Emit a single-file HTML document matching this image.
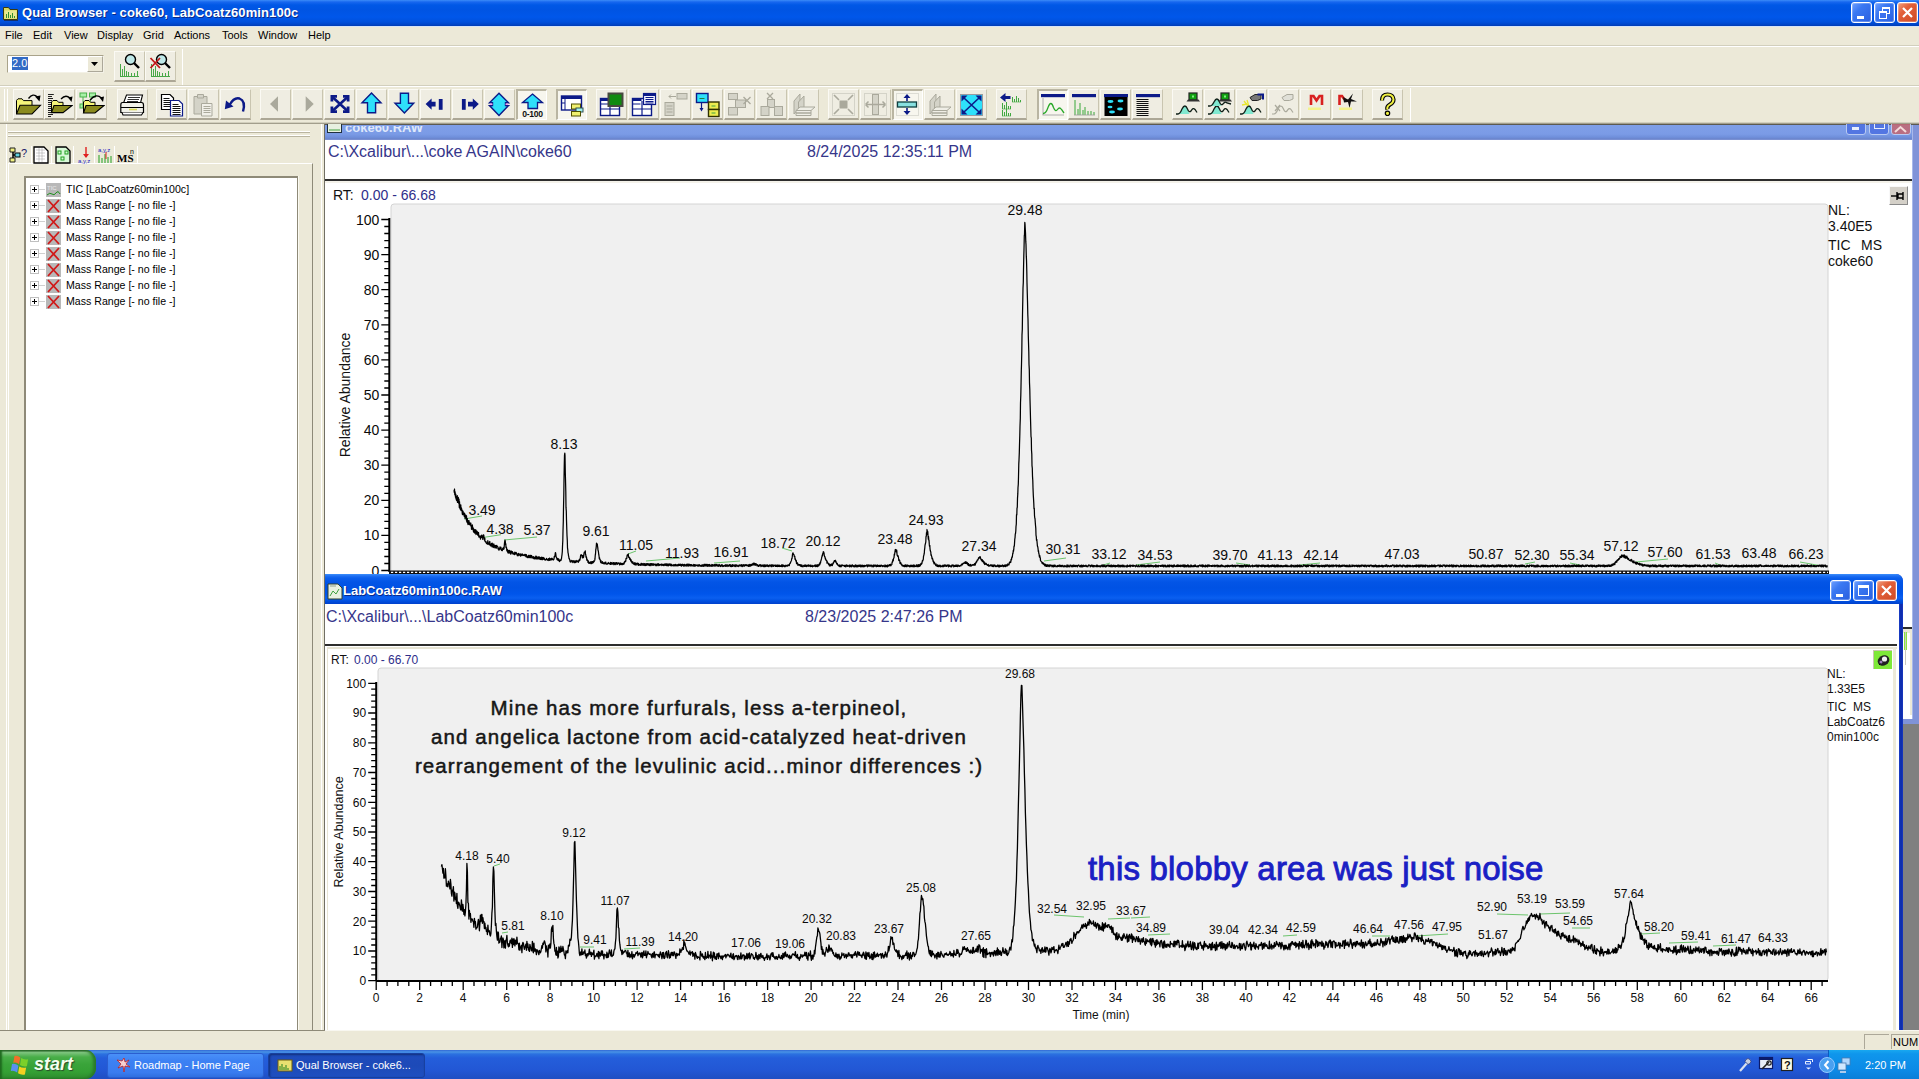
<!DOCTYPE html><html><head><meta charset="utf-8"><style>
*{margin:0;padding:0;box-sizing:border-box}
html,body{width:1919px;height:1079px;overflow:hidden}
body{position:relative;background:#ece9d8;font-family:"Liberation Sans", sans-serif;color:#000}
.t{position:absolute;white-space:nowrap;line-height:1}
.btn{position:absolute;width:31px;height:31px;border-top:1px solid #fbfaf4;border-left:1px solid #fbfaf4;border-right:1px solid #c9c5b0;border-bottom:2px solid #aca796;background:#efede2}
.btnp{position:absolute;width:31px;height:31px;border-top:2px solid #b9b5a2;border-left:2px solid #b9b5a2;border-right:1px solid #fff;border-bottom:1px solid #fff;background:#f7f6ee}
.btn svg,.btnp svg{position:absolute;left:4px;top:4px}
</style></head><body>

<div style="position:absolute;left:0px;top:0px;width:1919px;height:26px;background:linear-gradient(#3c8cf8 0px,#1767ef 2px,#0058e6 5px,#0054e3 10px,#0057ea 17px,#0050dc 22px,#0043c4 25px,#003bb0 26px)"></div>
<svg style="position:absolute;left:2px;top:4px" width="18" height="18" viewBox="0 0 18 18"><path d="M1.5 3.5V15.5H15.5V5.5H8L6.5 3.5Z" fill="#d8d860" stroke="#3a3a10" stroke-width="1"/><rect x="2.5" y="6.5" width="12" height="8" fill="#e8e890"/><path d="M4.5 14V10M6.5 14V8M8.5 14V11M10.5 14V9M12.5 14V12" stroke="#309030" stroke-width="1"/><path d="M2 16.5H16" stroke="#14306a" stroke-width="1"/></svg>
<div class="t" style="left:22px;top:6px;font-weight:bold;font-size:13px;color:#fff;text-shadow:1px 1px 0 #0a2a8a;letter-spacing:0.1px">Qual Browser - coke60, LabCoatz60min100c</div>
<div style="position:absolute;left:1851px;top:2px;width:21px;height:21px;border:1px solid #fff;border-radius:3px;background:linear-gradient(135deg,#6fa0ff 0%,#3a78f2 35%,#2a5fe0 100%);box-shadow:inset 0 0 0 1px rgba(255,255,255,0.25)"><div style="position:absolute;left:5px;top:13px;width:7px;height:3px;background:#fff"></div></div>
<div style="position:absolute;left:1874px;top:2px;width:21px;height:21px;border:1px solid #fff;border-radius:3px;background:linear-gradient(135deg,#6fa0ff 0%,#3a78f2 35%,#2a5fe0 100%);box-shadow:inset 0 0 0 1px rgba(255,255,255,0.25)"><div style="position:absolute;left:7px;top:4px;width:8px;height:7px;border:1px solid #fff;border-top-width:2px"></div><div style="position:absolute;left:4px;top:8px;width:8px;height:8px;border:1px solid #fff;border-top-width:2px;background:#3a70ee"></div></div>
<div style="position:absolute;left:1897px;top:2px;width:21px;height:21px;border:1px solid #fff;border-radius:3px;background:linear-gradient(135deg,#f0a080 0%,#e2603a 35%,#cf4a25 100%);box-shadow:inset 0 0 0 1px rgba(255,255,255,0.25)"><svg style="position:absolute;left:3px;top:3px" width="13" height="13"><path d="M2 2L11 11M11 2L2 11" stroke="#fff" stroke-width="2.2"/></svg></div>
<div style="position:absolute;left:0px;top:26px;width:1919px;height:20px;background:#ece9d8;border-top:1px solid #d6e4f8"></div>
<div class="t" style="left:5px;top:30px;font-size:11px;color:#000">File</div>
<div class="t" style="left:33px;top:30px;font-size:11px;color:#000">Edit</div>
<div class="t" style="left:64px;top:30px;font-size:11px;color:#000">View</div>
<div class="t" style="left:97px;top:30px;font-size:11px;color:#000">Display</div>
<div class="t" style="left:143px;top:30px;font-size:11px;color:#000">Grid</div>
<div class="t" style="left:174px;top:30px;font-size:11px;color:#000">Actions</div>
<div class="t" style="left:222px;top:30px;font-size:11px;color:#000">Tools</div>
<div class="t" style="left:258px;top:30px;font-size:11px;color:#000">Window</div>
<div class="t" style="left:308px;top:30px;font-size:11px;color:#000">Help</div>
<div style="position:absolute;left:0px;top:45px;width:1919px;height:1px;background:#d2cfbd"></div>
<div style="position:absolute;left:0px;top:46px;width:1919px;height:1px;background:#fff"></div>
<div style="position:absolute;left:7px;top:55px;width:97px;height:18px;background:#fff;border-top:1px solid #a9a38a;border-left:1px solid #a9a38a;border-bottom:1px solid #f3f1e6;border-right:1px solid #f3f1e6"></div>
<div style="position:absolute;left:12px;top:57px;width:16px;height:13px;background:#316ac5"></div>
<div class="t" style="left:12px;top:58px;font-size:11px;color:#fff">2.0</div>
<div style="position:absolute;left:87px;top:56px;width:16px;height:16px;background:#ece9d8;border-right:1px solid #aca899;border-bottom:1px solid #aca899;border-top:1px solid #fff;border-left:1px solid #fff"></div>
<svg style="position:absolute;left:91px;top:62px" width="8" height="5"><path d="M0 0H7L3.5 4Z" fill="#000"/></svg>
<div class="btn" style="left:114px;top:51px;width:31px;height:31px"><svg width="26" height="28" viewBox="0 0 26 28" style="left:3px;top:0px"><path d="M2.5 24V12M4.5 24V17M6.5 24V14M8.5 24V19M10.5 24V20M13.5 24V21M16.5 24V21M19.5 24V19" stroke="#48a848" stroke-width="1"/><line x1="2" y1="24.5" x2="21" y2="24.5" stroke="#48a848"/><circle cx="12.5" cy="7.5" r="5" fill="#bfe8e8" stroke="#000" stroke-width="1.4"/><path d="M16 11L21 16" stroke="#000" stroke-width="2.4"/></svg></div>
<div class="btn" style="left:145px;top:51px;width:31px;height:31px"><svg width="26" height="28" viewBox="0 0 26 28" style="left:3px;top:0px"><path d="M2.5 24V12M4.5 24V17M6.5 24V14M8.5 24V19M10.5 24V20M13.5 24V21M16.5 24V21M19.5 24V19" stroke="#48a848" stroke-width="1"/><line x1="2" y1="24.5" x2="21" y2="24.5" stroke="#48a848"/><circle cx="12.5" cy="7.5" r="5" fill="#bfe8e8" stroke="#000" stroke-width="1.4"/><path d="M16 11L21 16" stroke="#000" stroke-width="2.4"/><path d='M1.5 6L11 16M11 6L1.5 16' stroke='#c01818' stroke-width='1.8'/></svg></div>
<div style="position:absolute;left:182px;top:49px;width:1px;height:36px;background:#c5c1ad;border-right:1px solid #fff"></div>
<div style="position:absolute;left:0px;top:85px;width:1919px;height:1px;background:#d2cfbd"></div>
<div style="position:absolute;left:0px;top:86px;width:1919px;height:1px;background:#fff"></div>
<div style="position:absolute;left:4px;top:89px;width:1px;height:32px;background:#c5c1ad;border-right:1px solid #fff"></div>
<div style="position:absolute;left:7px;top:89px;width:1px;height:32px;background:#c5c1ad;border-right:1px solid #fff"></div>
<div class="btn" style="left:13px;top:89px"><svg width="26" height="26" viewBox="0 0 26 26" style="left:2px;top:2px"><path d="M0.5 22V8.3L2.0 6.8H6.0L7.5 8.6H16V13.3" fill="#f6f67a" stroke="#000" stroke-width="1"/><path d="M0.5 22L4 13.3H24.5L16 22Z" fill="#8a8a1e" stroke="#000" stroke-width="1.1"/><path d="M12.5 6.5Q17 0.5 21.5 5" fill="none" stroke="#000" stroke-width="1.3"/><path d="M19 4.5L24.5 3.5L23.5 9.5Z" fill="#000"/></svg></div>
<div class="btn" style="left:44px;top:89px"><svg width="26" height="26" viewBox="0 0 26 26" style="left:2px;top:2px"><path d="M1 2.5h5.8M1 4.5h4M1 6.5h5M1 8.5h4M1 10.5h4.5M1 12.5h4M1 14.5h4M1 16.5h4.5M1 18.5h4M1 20.5h4M1 22.5h5M1 24.5h3" stroke="#222" stroke-width="1"/><path d="M4.5 20.6V10.0L6.0 8.5H10.0L11.5 10.3H16V13.5" fill="#f6f67a" stroke="#000" stroke-width="1"/><path d="M4.5 20.6L7 13.5H25L16 20.6Z" fill="#8a8a1e" stroke="#000" stroke-width="1.1"/><path d="M14 7Q18.5 2 23 6" fill="none" stroke="#000" stroke-width="1.3"/><path d="M21 5.5L25.5 4.5L24.5 10Z" fill="#000"/></svg></div>
<div class="btn" style="left:76px;top:89px"><svg width="26" height="26" viewBox="0 0 26 26" style="left:2px;top:2px"><rect x="1" y="1" width="6.6" height="4" fill="#a8f0a8" stroke="#48b048"/><rect x="10.5" y="1" width="6" height="4" fill="#a8f0a8" stroke="#48b048"/><rect x="1" y="12" width="3" height="4" fill="#a8f0a8" stroke="#48b048"/><path d="M4 5v7M13.5 5l-4 7" stroke="#48b048"/><path d="M4.5 21V10.0L6.0 8.5H10.0L11.5 10.3H16V13.5" fill="#f6f67a" stroke="#000" stroke-width="1"/><path d="M4.5 21L7 13.5H25L16 21Z" fill="#8a8a1e" stroke="#000" stroke-width="1.1"/><path d="M11 8Q17 1 22.5 6" fill="none" stroke="#000" stroke-width="1.3"/><path d="M20.5 5.5L25 4.5L24 10Z" fill="#000"/></svg></div>
<div class="btn" style="left:117px;top:89px"><svg width="26" height="26" viewBox="0 0 26 26" style="left:2px;top:2px"><path d="M6.5 3H22.5L20.5 11H3.5Z" fill="#fff" stroke="#000" stroke-width="1.1"/><path d="M8 5.5h12M7.5 7.5h11.5M7 9.5h11" stroke="#333" stroke-width="1"/><path d="M2.5 10.5H21.5Q23.5 10.5 23.5 13V20.5H0.8V13Q0.8 10.5 2.5 10.5Z" fill="#f2f2ea" stroke="#000" stroke-width="1.2"/><path d="M1 15.5H23.5" stroke="#000" stroke-width="1"/><path d="M9 17.5h8" stroke="#d8d850" stroke-width="1.6"/><path d="M2 20.5L3 23H21.5L23 20.5" fill="#fff" stroke="#000" stroke-width="1.1"/></svg></div>
<div class="btn" style="left:156px;top:89px"><svg width="26" height="26" viewBox="0 0 26 26" style="left:2px;top:2px"><path d="M2.5 2.5H11L14.5 6V17.5H2.5Z" fill="#fff" stroke="#000" stroke-width="1.2"/><path d="M4.5 6.5h6M4.5 8.5h8M4.5 10.5h8M4.5 12.5h8M4.5 14.5h8" stroke="#111" stroke-width="1"/><path d="M11.5 8.5H20L23.5 12V24H11.5Z" fill="#fff" stroke="#0c1a88" stroke-width="1.2"/><path d="M13.5 12.5h6M13.5 14.5h8M13.5 16.5h8M13.5 18.5h8M13.5 20.5h8M13.5 22.5h8" stroke="#111" stroke-width="1"/></svg></div>
<div class="btn" style="left:188px;top:89px"><svg width="26" height="26" viewBox="0 0 26 26" style="left:2px;top:2px"><path d="M3 4.5H16V22H3Z" fill="#d4d3c8" stroke="#aaa99c"/><path d="M6.5 2.5H12.5V6H6.5Z" fill="#d4d3c8" stroke="#aaa99c"/><path d="M10.5 11.5H21V24H10.5Z" fill="#f0efe8" stroke="#aaa99c"/><path d="M12.5 14.5h7M12.5 16.5h7M12.5 18.5h7M12.5 20.5h7" stroke="#aaa99c" stroke-width="1"/></svg></div>
<div class="btn" style="left:220px;top:89px"><svg width="26" height="26" viewBox="0 0 26 26" style="left:2px;top:2px"><path d="M6.5 13Q11 5 16.5 6.5Q23 9 20 19.5" fill="none" stroke="#0c1a88" stroke-width="2.4"/><path d="M1.8 17.2L3 8.5L10.5 14.5Z" fill="#0c1a88"/></svg></div>
<div class="btn" style="left:260px;top:89px"><svg width="26" height="26" viewBox="0 0 26 26" style="left:2px;top:2px"><path d="M15 4.3V19.8L7 12Z" fill="#aaa99c"/></svg></div>
<div class="btn" style="left:292px;top:89px"><svg width="26" height="26" viewBox="0 0 26 26" style="left:2px;top:2px"><path d="M10.7 4.3V19.8L18.7 12Z" fill="#aaa99c"/></svg></div>
<div class="btn" style="left:324px;top:89px"><svg width="26" height="26" viewBox="0 0 26 26" style="left:2px;top:2px"><path d="M6 5.5L20 18.5M20 5.5L6 18.5" stroke="#0c1a88" stroke-width="2.6"/><path d="M3.5 3H10V5.8H6.3V9.5H3.5ZM22.5 3H16V5.8H19.7V9.5H22.5ZM3.5 21H10V18.2H6.3V14.5H3.5ZM22.5 21H16V18.2H19.7V14.5H22.5Z" fill="#0c1a88"/></svg></div>
<div class="btn" style="left:356px;top:89px"><svg width="26" height="26" viewBox="0 0 26 26" style="left:2px;top:2px"><path d="M12.5 1L22 10.8H16.6V20.8H8.5V10.8H3Z" fill="#2ee0fa" stroke="#0c1a88" stroke-width="1.4" stroke-linejoin="miter"/></svg></div>
<div class="btn" style="left:388px;top:89px"><svg width="26" height="26" viewBox="0 0 26 26" style="left:2px;top:2px"><path d="M13.4 21L22.7 11.2H17.5V1.2H9.4V11.2H4Z" fill="#2ee0fa" stroke="#0c1a88" stroke-width="1.4"/></svg></div>
<div class="btn" style="left:420px;top:89px"><svg width="26" height="26" viewBox="0 0 26 26" style="left:2px;top:2px"><path d="M2.6 12.1L8.6 6.5V9.8H12.6V14.4H8.6V17.8Z" fill="#0c1a88"/><rect x="15.8" y="7" width="3.8" height="10.8" fill="#0c1a88"/></svg></div>
<div class="btn" style="left:452px;top:89px"><svg width="26" height="26" viewBox="0 0 26 26" style="left:2px;top:2px"><rect x="6.9" y="7" width="3.8" height="10.8" fill="#0c1a88"/><path d="M23.8 12.1L17.8 6.5V9.8H13V14.4H17.8V17.8Z" fill="#0c1a88"/></svg></div>
<div class="btn" style="left:484px;top:89px"><svg width="26" height="26" viewBox="0 0 26 26" style="left:2px;top:2px"><path d="M12 1.2L21.5 10.8H18.5V13.6H21.5L12 23.5L2.5 13.6H5.5V10.8H2.5Z" fill="#2ee0fa" stroke="#0c1a88" stroke-width="1.4"/><path d="M3 12.2h2.5M18.5 12.2h2.5" stroke="#f0a0f0" stroke-width="1.5"/></svg></div>
<div class="btnp" style="left:516px;top:89px"><svg width="26" height="26" viewBox="0 0 26 26" style="left:1px;top:1px"><path d="M13.5 2L23.5 10.5H18.5V16.5H9V10.5H3.5Z" fill="#2ee0fa" stroke="#0c1a88" stroke-width="1.3"/><text x="13.4" y="24.6" font-size="8.6" font-weight="bold" text-anchor="middle" font-family="Liberation Sans" fill="#111" letter-spacing="-0.3">0-100</text></svg></div>
<div class="btnp" style="left:556px;top:89px"><svg width="26" height="26" viewBox="0 0 26 26" style="left:1px;top:1px"><rect x="2.5" y="4" width="20" height="14" fill="#fff" stroke="#0c1a88" stroke-width="1.4"/><rect x="2.5" y="4" width="20" height="3" fill="#0c1a88"/><path d="M6 7v11M2.5 11h3.5" stroke="#0c1a88" stroke-width="1"/><rect x="12.5" y="12" width="9" height="5" fill="#f0f070" stroke="#505000"/><rect x="17" y="16" width="7" height="4" fill="#a0f0f0" stroke="#305050"/><rect x="12.5" y="19.5" width="9" height="4.5" fill="#f0f070" stroke="#505000"/></svg></div>
<div class="btn" style="left:596px;top:89px"><svg width="26" height="26" viewBox="0 0 26 26" style="left:2px;top:2px"><rect x="1.5" y="6.5" width="19" height="17" fill="#fff" stroke="#0c1a88" stroke-width="1.4"/><rect x="1.5" y="6.5" width="9" height="2.5" fill="#0c1a88"/><path d="M1.5 17h19M11 9v14.5M1.5 12h8" stroke="#0c1a88" stroke-width="1.2"/><rect x="9.5" y="1.5" width="14" height="12.5" fill="#108a10" stroke="#484840" stroke-width="2"/></svg></div>
<div class="btn" style="left:628px;top:89px"><svg width="26" height="26" viewBox="0 0 26 26" style="left:2px;top:2px"><rect x="1.5" y="6.5" width="19" height="17" fill="#fff" stroke="#0c1a88" stroke-width="1.4"/><rect x="1.5" y="6.5" width="9" height="2.5" fill="#0c1a88"/><path d="M1.5 17h19M11 9v14.5M1.5 12h8" stroke="#0c1a88" stroke-width="1.2"/><rect x="12.5" y="1.5" width="12" height="11" fill="#f4f4ff" stroke="#0c1a88" stroke-width="1.2"/><path d="M12.5 3h12" stroke="#0c1a88" stroke-width="2"/><path d="M14.5 5.5h8M14.5 7.5h8M14.5 9.5h8M14.5 11h8" stroke="#0c1a88" stroke-width="1"/></svg></div>
<div class="btn" style="left:660px;top:89px"><svg width="26" height="26" viewBox="0 0 26 26" style="left:2px;top:2px"><rect x="2" y="10.5" width="9" height="13" fill="#d4d3c8" stroke="#aaa99c"/><rect x="14" y="1.5" width="10" height="5.5" fill="#d4d3c8" stroke="#aaa99c"/><path d="M6 4.5h7M8 2.5L6 4.5L8 6.5" stroke="#aaa99c" fill="none"/><path d="M3.5 14h6M3.5 17h6M3.5 20h6" stroke="#aaa99c"/></svg></div>
<div class="btn" style="left:692px;top:89px"><svg width="26" height="26" viewBox="0 0 26 26" style="left:2px;top:2px"><rect x="1.5" y="1.5" width="11.5" height="9" fill="#2ee0fa" stroke="#0c1a88" stroke-width="1.4"/><path d="M4.5 6.5h5" stroke="#208040"/><path d="M6.5 11v6" stroke="#0c1a88" stroke-width="1.2"/><path d="M4.5 16l2 3.5l2-3.5z" fill="#0c1a88"/><rect x="13.5" y="10" width="10.5" height="7.5" fill="#ecec50" stroke="#303000" stroke-width="1.4"/><rect x="13.5" y="17.5" width="10.5" height="7" fill="#ecec50" stroke="#303000" stroke-width="1.4"/><path d="M16.5 14h4M16.5 21h4" stroke="#40a040"/></svg></div>
<div class="btn" style="left:724px;top:89px"><svg width="26" height="26" viewBox="0 0 26 26" style="left:2px;top:2px"><rect x="1.5" y="1.5" width="9" height="6" fill="#d4d3c8" stroke="#aaa99c"/><rect x="1.5" y="15.5" width="9" height="7.5" fill="#d4d3c8" stroke="#aaa99c"/><rect x="8.5" y="8" width="10" height="7.5" fill="#d4d3c8" stroke="#aaa99c"/><path d="M16.5 5l7 7M23.5 5l-7 7" stroke="#aaa99c" stroke-width="1.3"/></svg></div>
<div class="btn" style="left:756px;top:89px"><svg width="26" height="26" viewBox="0 0 26 26" style="left:2px;top:2px"><path d="M8 1l6 6M14 1L8 7" stroke="#aaa99c" stroke-width="1.3"/><rect x="8.5" y="7.5" width="7" height="8" fill="#d4d3c8" stroke="#aaa99c"/><rect x="2" y="14.5" width="8" height="9" fill="#d4d3c8" stroke="#aaa99c"/><rect x="15.5" y="14.5" width="8" height="9" fill="#d4d3c8" stroke="#aaa99c"/></svg></div>
<div class="btn" style="left:788px;top:89px"><svg width="26" height="26" viewBox="0 0 26 26" style="left:2px;top:2px"><path d="M3 22V9L9 2V15Z" fill="#d4d3c8" stroke="#aaa99c"/><path d="M7.5 22V10L13 4V16Z" fill="#d4d3c8" stroke="#aaa99c"/><path d="M9 15H24L20 18.5H5Z" fill="#efeee6" stroke="#aaa99c"/><path d="M5 18.5H20V21H5ZM5 21H20V23.5H5Z" fill="#efeee6" stroke="#aaa99c"/></svg></div>
<div class="btn" style="left:828px;top:89px"><svg width="26" height="26" viewBox="0 0 26 26" style="left:2px;top:2px"><rect x="1.5" y="1.5" width="22" height="22" fill="none" stroke="#d4d3c8"/><rect x="8.5" y="8.5" width="8" height="8" fill="#aaa99c"/><path d="M3 3l5 5M22 3l-5 5M3 22l5-5M22 22l-5-5" stroke="#aaa99c" stroke-width="1.6"/></svg></div>
<div class="btn" style="left:860px;top:89px"><svg width="26" height="26" viewBox="0 0 26 26" style="left:2px;top:2px"><rect x="1.5" y="1.5" width="22" height="22" fill="none" stroke="#d4d3c8"/><rect x="9.5" y="2.5" width="6" height="20" fill="#d4d3c8" stroke="#aaa99c"/><path d="M2.5 12.5h20M2.5 12.5l3-3M2.5 12.5l3 3M22.5 12.5l-3-3M22.5 12.5l-3 3" stroke="#aaa99c" stroke-width="1.5"/></svg></div>
<div class="btnp" style="left:892px;top:89px"><svg width="26" height="26" viewBox="0 0 26 26" style="left:1px;top:1px"><rect x="1.5" y="1.5" width="22" height="22" fill="none" stroke="#dcdcd4"/><rect x="2.5" y="10" width="19" height="5" fill="#88e0e0" stroke="#104040" stroke-width="1.3"/><path d="M12 3v6M12 16v6" stroke="#0c1a88" stroke-width="1.6"/><path d="M8.5 6l3.5-4l3.5 4zM8.5 19l3.5 4l3.5-4z" fill="#0c1a88"/></svg></div>
<div class="btn" style="left:924px;top:89px"><svg width="26" height="26" viewBox="0 0 26 26" style="left:2px;top:2px"><path d="M3 22V9L9 2V15Z" fill="#d4d3c8" stroke="#aaa99c"/><path d="M7.5 22V10L13 4V16Z" fill="#d4d3c8" stroke="#aaa99c"/><path d="M9 15H24L20 18.5H5Z" fill="#efeee6" stroke="#aaa99c"/><path d="M5 18.5H20V21H5ZM5 21H20V23.5H5Z" fill="#efeee6" stroke="#aaa99c"/></svg></div>
<div class="btn" style="left:956px;top:89px"><svg width="26" height="26" viewBox="0 0 26 26" style="left:2px;top:2px"><rect x="1.5" y="2.5" width="22" height="21" fill="#2ee0fa" stroke="#9a9aa0"/><path d="M5 6l15 14M20 6L5 20" stroke="#0c1a88" stroke-width="1.6"/><path d="M2.5 3.5h6l-6 6zM22.5 3.5h-6l6 6zM2.5 22.5h6l-6-6zM22.5 22.5h-6l6-6z" fill="#0c1a88"/></svg></div>
<div class="btn" style="left:996px;top:89px"><svg width="26" height="26" viewBox="0 0 26 26" style="left:2px;top:2px"><path d="M1 5.5l5.5-4.5v3h5v3h-5v3z" fill="#0c1a88"/><path d="M13.5 10V5M15.5 10V7M17.5 10V4M19.5 10V6M21.5 10V8M3.5 17V11M5.5 17V13M7.5 17V10M9.5 17V14M11.5 17V14M3.5 24V18M5.5 24V20M7.5 24V17M9.5 24V21M11.5 24V21" stroke="#40a840" stroke-width="1"/><path d="M13 10h9M3 17h9M3 24h9" stroke="#40a840" stroke-width="0.6"/></svg></div>
<div class="btnp" style="left:1037px;top:89px"><svg width="26" height="26" viewBox="0 0 26 26" style="left:1px;top:1px"><rect x="1" y="2" width="24" height="3.2" fill="#0c1a88"/><path d="M2.5 23H24M3 6v17" stroke="#999" stroke-width="0.8"/><path d="M3 21.5q3 0 5-6q3-8 5.5 0q2 5 4 2q2-3 4 0l2.5 3.5" fill="none" stroke="#28a828" stroke-width="1.3"/></svg></div>
<div class="btn" style="left:1068px;top:89px"><svg width="26" height="26" viewBox="0 0 26 26" style="left:2px;top:2px"><rect x="1" y="2" width="24" height="3.2" fill="#0c1a88"/><path d="M4 23V8M7 23V17M9 23V11M12 23V18M14 23V15M17 23V19M20 23V19M23 23V20" stroke="#38a838" stroke-width="1"/><path d="M3 23h21" stroke="#999" stroke-width="0.8"/></svg></div>
<div class="btn" style="left:1100px;top:89px"><svg width="26" height="26" viewBox="0 0 26 26" style="left:2px;top:2px"><rect x="1" y="2" width="24" height="3.2" fill="#0c1a88"/><rect x="1.5" y="5" width="23" height="19" fill="#000"/><ellipse cx="7.5" cy="9.5" rx="3" ry="1.4" fill="#2ee0fa"/><ellipse cx="17.5" cy="9" rx="3" ry="1.4" fill="#2ee0fa"/><ellipse cx="7" cy="15" rx="2.5" ry="1.3" fill="#2ee0fa"/><ellipse cx="9" cy="20" rx="3" ry="1.4" fill="#2ee0fa"/><ellipse cx="17" cy="17" rx="3" ry="1.4" fill="#2ee0fa"/></svg></div>
<div class="btn" style="left:1132px;top:89px"><svg width="26" height="26" viewBox="0 0 26 26" style="left:2px;top:2px"><rect x="1" y="2" width="24" height="3.2" fill="#0c1a88"/><path d="M1.5 7.5h12M1.5 9.5h12M1.5 11.5h12M1.5 13.5h12M1.5 15.5h12M1.5 17.5h12M1.5 19.5h12M1.5 21.5h12M1.5 23.5h12" stroke="#111" stroke-width="1.2"/></svg></div>
<div class="btn" style="left:1172px;top:89px"><svg width="26" height="26" viewBox="0 0 26 26" style="left:2px;top:2px"><path d="M1 22h2q2 0 4-5q3-6 5.5 0q1 3 2 5" fill="#80e8d0"/><path d="M1 22h2q2 0 4-5q3-6 5.5 0q1.5 4 3.5 2q2-4 4-1.5l2 3" fill="none" stroke="#102018" stroke-width="1.3"/><rect x="14" y="1" width="8" height="7" fill="#10a010" stroke="#222" stroke-width="1.2"/><path d="M17 3.5h2v2h-2z" fill="#80f080"/><path d="M11.5 9.5h13.5l-1.5-2H13z" fill="#333"/></svg></div>
<div class="btn" style="left:1204px;top:89px"><svg width="26" height="26" viewBox="0 0 26 26" style="left:2px;top:2px"><path d="M1 22h2q2 0 4-5q3-6 5.5 0q1 3 2 5" fill="#80e8d0"/><path d="M1 22h2q2 0 4-5q3-6 5.5 0q1.5 4 3.5 2q2-4 4-1.5l2 3" fill="none" stroke="#102018" stroke-width="1.3"/><path d="M1 14h2q2 0 4-4q3-6 5.5 0q1 3 2 4" fill="#80e8d0"/><path d="M1 14h2q2 0 4-4q3-6 5.5 0q1.5 4 3.5 2q2-3 4-1l4 1" fill="none" stroke="#102018" stroke-width="1.3"/><rect x="14" y="1" width="8" height="7" fill="#10a010" stroke="#222" stroke-width="1.2"/><path d="M17 3.5h2v2h-2z" fill="#80f080"/><path d="M11.5 9.5h13.5l-1.5-2H13z" fill="#333"/></svg></div>
<div class="btn" style="left:1236px;top:89px"><svg width="26" height="26" viewBox="0 0 26 26" style="left:2px;top:2px"><path d="M1 22h2q2 0 4-5q3-6 5.5 0q1 3 2 5" fill="#80e8d0"/><path d="M1 22h2q2 0 4-5q3-6 5.5 0q1.5 4 3.5 2q2-4 4-1.5l2 3" fill="none" stroke="#102018" stroke-width="1.3"/><path d="M5 9l4 5M3 13l5-1M8 8l1.5 5" stroke="#e8e830" stroke-width="1.3"/><path d="M11 5.5L16 2.5H22V7L18.5 8.5H13Z" fill="#777" stroke="#222"/><path d="M18.5 2.5H24V7.5" fill="none" stroke="#0c1a88" stroke-width="2"/></svg></div>
<div class="btn" style="left:1268px;top:89px"><svg width="26" height="26" viewBox="0 0 26 26" style="left:2px;top:2px"><path d="M1 22h2q2 0 4-5q3-6 5.5 0q1.5 4 3.5 2q2-4 4-1.5l2 3" fill="none" stroke="#aaa99c" stroke-width="1.2"/><path d="M4 13l5 6M4 19l5-6" stroke="#aaa99c" stroke-width="1.2"/><path d="M11 5.5L16 2.5H22V7L18.5 8.5H13Z" fill="#e0e0d8" stroke="#aaa99c"/></svg></div>
<div class="btn" style="left:1300px;top:89px"><svg width="26" height="26" viewBox="0 0 26 26" style="left:2px;top:2px"><path d="M8 13V4H10.5L13.5 8.5L16.5 4H19V13" fill="none" stroke="#d82020" stroke-width="2.6" stroke-linejoin="miter"/><path d="M5 15.5h13v2.5H5z" fill="#f4f470" opacity="0.75"/></svg></div>
<div class="btn" style="left:1332px;top:89px"><svg width="26" height="26" viewBox="0 0 26 26" style="left:2px;top:2px"><path d="M4.5 13V4H7L9.5 7.5" fill="none" stroke="#d82020" stroke-width="2.6"/><path d="M8 5l5 2.5L18 1.5L16 7l6 2.5L16 9.5L14.5 16L13 10l-4 0.5z" fill="#111"/><path d="M4 15.5h13v2.5H4z" fill="#f4f470" opacity="0.75"/></svg></div>
<div class="btn" style="left:1372px;top:89px"><svg width="26" height="26" viewBox="0 0 26 26" style="left:2px;top:2px"><path d="M7 8.5Q7 2.5 12.5 2.5T18.5 7.5Q18.5 10.5 15 12.5T12.5 17.5" fill="none" stroke="#000" stroke-width="4.2"/><path d="M7 8.5Q7 2.5 12.5 2.5T18.5 7.5Q18.5 10.5 15 12.5T12.5 17.5" fill="none" stroke="#f0f040" stroke-width="2"/><circle cx="12.5" cy="21.3" r="2.2" fill="#f0f040" stroke="#000" stroke-width="1.2"/></svg></div>
<div style="position:absolute;left:1410px;top:88px;width:1px;height:34px;background:#c5c1ad;border-right:1px solid #fff"></div>
<div style="position:absolute;left:0px;top:122px;width:1919px;height:1px;background:#d2cfbd"></div>
<div style="position:absolute;left:0px;top:123px;width:1919px;height:1px;background:#a29e8c"></div>
<div style="position:absolute;left:0px;top:124px;width:325px;height:906px;background:#ece9d8"></div>
<div style="position:absolute;left:6px;top:124px;width:1px;height:906px;background:#fff"></div>
<div style="position:absolute;left:8px;top:131px;width:302px;height:1px;background:#fff;border-bottom:1px solid #bab5a0;height:2px"></div>
<div style="position:absolute;left:8px;top:135px;width:302px;height:1px;background:#fff;border-bottom:1px solid #bab5a0;height:2px"></div>
<div style="position:absolute;left:8px;top:163px;width:305px;height:867px;border-top:1px solid #fff;border-left:1px solid #fff;border-right:1px solid #8e8a78"></div>
<div style="position:absolute;left:9px;top:146px"><svg width="20" height="18"><path d="M1 2h5v4H1zM1 12h5v4H1z" fill="#f0f080" stroke="#202020"/><path d="M4 6v6M4 9h5" stroke="#000" stroke-width="1.5"/><rect x="6" y="7" width="5" height="4" fill="#60d0e0" stroke="#000"/><text x="12" y="11" font-size="11" font-family="Liberation Sans" fill="#1a1a6a">?</text></svg></div>
<div style="position:absolute;left:33px;top:146px"><svg width="16" height="18"><path d="M1 1h10l4 4v12H1z" fill="#fff" stroke="#000" stroke-width="1.3"/><path d="M3 4h9M3 7h9M3 10h9M3 13h9M6 2v14M9 2v14" stroke="#999" stroke-width="0.5"/></svg></div>
<div style="position:absolute;left:55px;top:146px"><svg width="16" height="18"><path d="M1 1h10l4 4v12H1z" fill="#d8f8d8" stroke="#000" stroke-width="1.3"/><rect x="3" y="5" width="3" height="3" fill="none" stroke="#20a020"/><rect x="10" y="5" width="3" height="3" fill="none" stroke="#20a020"/><rect x="6" y="11" width="3" height="3" fill="none" stroke="#20a020"/></svg></div>
<div style="position:absolute;left:77px;top:146px"><svg width="18" height="18"><path d="M9 1v10" stroke="#e02020" stroke-width="1.4"/><path d="M6 8l3 4l3-4z" fill="#e02020"/><text x="1" y="17" font-size="6" font-family="Liberation Sans" fill="#2020c0">a,y,z</text></svg></div>
<div style="position:absolute;left:97px;top:146px"><svg width="18" height="18"><text x="1" y="6" font-size="6" font-family="Liberation Sans" fill="#2020c0">a,y,z</text><path d="M2 17V9M5 17V12M8 17V8M11 17V11M14 17V10" stroke="#20a020"/><path d="M9 6v7" stroke="#e02020"/></svg></div>
<div style="position:absolute;left:117px;top:146px"><svg width="18" height="18"><text x="0" y="16" font-size="11" font-weight="bold" font-family="Liberation Serif" fill="#000">MS</text><text x="13" y="8" font-size="7" font-family="Liberation Sans" fill="#000">n</text></svg></div>
<div style="position:absolute;left:31px;top:146px;width:1px;height:18px;background:#aca899;border-right:1px solid #fff"></div>
<div style="position:absolute;left:51px;top:146px;width:1px;height:18px;background:#aca899;border-right:1px solid #fff"></div>
<div style="position:absolute;left:73px;top:146px;width:1px;height:18px;background:#aca899;border-right:1px solid #fff"></div>
<div style="position:absolute;left:94px;top:146px;width:1px;height:18px;background:#aca899;border-right:1px solid #fff"></div>
<div style="position:absolute;left:114px;top:146px;width:1px;height:18px;background:#aca899;border-right:1px solid #fff"></div>
<div style="position:absolute;left:137px;top:146px;width:1px;height:18px;background:#aca899;border-right:1px solid #fff"></div>
<div style="position:absolute;left:24px;top:176px;width:274px;height:854px;background:#fff;border-top:2px solid #8e8a78;border-left:2px solid #8e8a78;border-right:1px solid #8e8a78"></div>
<div style="position:absolute;left:298px;top:176px;width:1px;height:854px;background:#fbfaf2"></div>
<div style="position:absolute;left:30px;top:185px;width:9px;height:9px;border:1px solid #c0c0c0;background:#fff"></div><div style="position:absolute;left:32px;top:189px;width:5px;height:1px;background:#000"></div><div style="position:absolute;left:34px;top:187px;width:1px;height:5px;background:#000"></div><div style="position:absolute;left:39px;top:189px;width:6px;height:1px;background:#d0d0d0"></div><div style="position:absolute;left:46px;top:183px"><svg width="15" height="14"><rect width="15" height="14" fill="#b8b8b8"/><text x="1" y="7" font-size="6" fill="#e8e8e8" font-family="Liberation Sans">TIC</text><path d="M1 12q3-3 5-1t4-1t4 1" stroke="#209020" fill="none"/></svg></div><div class="t" style="left:66px;top:184px;font-size:10.6px">TIC [LabCoatz60min100c]</div>
<div style="position:absolute;left:30px;top:201px;width:9px;height:9px;border:1px solid #c0c0c0;background:#fff"></div><div style="position:absolute;left:32px;top:205px;width:5px;height:1px;background:#000"></div><div style="position:absolute;left:34px;top:203px;width:1px;height:5px;background:#000"></div><div style="position:absolute;left:39px;top:205px;width:6px;height:1px;background:#d0d0d0"></div><div style="position:absolute;left:46px;top:199px"><svg width="15" height="14"><rect width="15" height="14" fill="#b8b8b8"/><path d="M2 1L13 13M13 1L2 13" stroke="#d01818" stroke-width="1.8"/></svg></div><div class="t" style="left:66px;top:200px;font-size:10.6px">Mass Range [- no file -]</div>
<div style="position:absolute;left:30px;top:217px;width:9px;height:9px;border:1px solid #c0c0c0;background:#fff"></div><div style="position:absolute;left:32px;top:221px;width:5px;height:1px;background:#000"></div><div style="position:absolute;left:34px;top:219px;width:1px;height:5px;background:#000"></div><div style="position:absolute;left:39px;top:221px;width:6px;height:1px;background:#d0d0d0"></div><div style="position:absolute;left:46px;top:215px"><svg width="15" height="14"><rect width="15" height="14" fill="#b8b8b8"/><path d="M2 1L13 13M13 1L2 13" stroke="#d01818" stroke-width="1.8"/></svg></div><div class="t" style="left:66px;top:216px;font-size:10.6px">Mass Range [- no file -]</div>
<div style="position:absolute;left:30px;top:233px;width:9px;height:9px;border:1px solid #c0c0c0;background:#fff"></div><div style="position:absolute;left:32px;top:237px;width:5px;height:1px;background:#000"></div><div style="position:absolute;left:34px;top:235px;width:1px;height:5px;background:#000"></div><div style="position:absolute;left:39px;top:237px;width:6px;height:1px;background:#d0d0d0"></div><div style="position:absolute;left:46px;top:231px"><svg width="15" height="14"><rect width="15" height="14" fill="#b8b8b8"/><path d="M2 1L13 13M13 1L2 13" stroke="#d01818" stroke-width="1.8"/></svg></div><div class="t" style="left:66px;top:232px;font-size:10.6px">Mass Range [- no file -]</div>
<div style="position:absolute;left:30px;top:249px;width:9px;height:9px;border:1px solid #c0c0c0;background:#fff"></div><div style="position:absolute;left:32px;top:253px;width:5px;height:1px;background:#000"></div><div style="position:absolute;left:34px;top:251px;width:1px;height:5px;background:#000"></div><div style="position:absolute;left:39px;top:253px;width:6px;height:1px;background:#d0d0d0"></div><div style="position:absolute;left:46px;top:247px"><svg width="15" height="14"><rect width="15" height="14" fill="#b8b8b8"/><path d="M2 1L13 13M13 1L2 13" stroke="#d01818" stroke-width="1.8"/></svg></div><div class="t" style="left:66px;top:248px;font-size:10.6px">Mass Range [- no file -]</div>
<div style="position:absolute;left:30px;top:265px;width:9px;height:9px;border:1px solid #c0c0c0;background:#fff"></div><div style="position:absolute;left:32px;top:269px;width:5px;height:1px;background:#000"></div><div style="position:absolute;left:34px;top:267px;width:1px;height:5px;background:#000"></div><div style="position:absolute;left:39px;top:269px;width:6px;height:1px;background:#d0d0d0"></div><div style="position:absolute;left:46px;top:263px"><svg width="15" height="14"><rect width="15" height="14" fill="#b8b8b8"/><path d="M2 1L13 13M13 1L2 13" stroke="#d01818" stroke-width="1.8"/></svg></div><div class="t" style="left:66px;top:264px;font-size:10.6px">Mass Range [- no file -]</div>
<div style="position:absolute;left:30px;top:281px;width:9px;height:9px;border:1px solid #c0c0c0;background:#fff"></div><div style="position:absolute;left:32px;top:285px;width:5px;height:1px;background:#000"></div><div style="position:absolute;left:34px;top:283px;width:1px;height:5px;background:#000"></div><div style="position:absolute;left:39px;top:285px;width:6px;height:1px;background:#d0d0d0"></div><div style="position:absolute;left:46px;top:279px"><svg width="15" height="14"><rect width="15" height="14" fill="#b8b8b8"/><path d="M2 1L13 13M13 1L2 13" stroke="#d01818" stroke-width="1.8"/></svg></div><div class="t" style="left:66px;top:280px;font-size:10.6px">Mass Range [- no file -]</div>
<div style="position:absolute;left:30px;top:297px;width:9px;height:9px;border:1px solid #c0c0c0;background:#fff"></div><div style="position:absolute;left:32px;top:301px;width:5px;height:1px;background:#000"></div><div style="position:absolute;left:34px;top:299px;width:1px;height:5px;background:#000"></div><div style="position:absolute;left:39px;top:301px;width:6px;height:1px;background:#d0d0d0"></div><div style="position:absolute;left:46px;top:295px"><svg width="15" height="14"><rect width="15" height="14" fill="#b8b8b8"/><path d="M2 1L13 13M13 1L2 13" stroke="#d01818" stroke-width="1.8"/></svg></div><div class="t" style="left:66px;top:296px;font-size:10.6px">Mass Range [- no file -]</div>
<div style="position:absolute;left:321px;top:124px;width:1px;height:906px;background:#fff"></div>
<div style="position:absolute;left:324px;top:124px;width:1px;height:906px;background:#716f64"></div>
<div style="position:absolute;left:325px;top:124px;width:1594px;height:906px;background:#808080"></div>
<div style="position:absolute;left:325px;top:124px;width:1594px;height:600px;overflow:hidden">
<div style="position:absolute;left:1587px;top:0px;width:7px;height:600px;background:#8093d8;border-left:1px solid #a8b8ea"></div>
<div style="position:absolute;left:0px;top:595px;width:1594px;height:5px;background:#8093d8"></div>
<div style="position:absolute;left:0px;top:0px;width:1587px;height:16px;background:linear-gradient(#7f9fe8 0px,#7b9be6 10px,#7090dc 13px,#6a84cc 15px,#8a9cd8 16px)"></div>
<div style="position:absolute;left:0px;top:0px;width:1594px;height:1px;background:#5c5a50"></div>
<div style="position:absolute;left:0px;top:2px;width:600px;height:14px;overflow:hidden"><div class="t" style="left:20px;top:-5px;font-weight:bold;font-size:13px;color:#dfe8fb">coke60.RAW</div></div>
<svg style="position:absolute;left:2px;top:-4px" width="15" height="13"><rect x="0.5" y="0.5" width="14" height="12" fill="#e8f0e0" stroke="#203040"/><path d="M2 10h11" stroke="#40a040"/></svg>
<div style="position:absolute;left:1521px;top:-10px;width:20px;height:21px;border:1px solid #c0d0f4;border-radius:3px;background:#4f72e2;opacity:0.9"></div>
<div style="position:absolute;left:1544px;top:-10px;width:20px;height:21px;border:1px solid #c0d0f4;border-radius:3px;background:#4f72e2;opacity:0.9"></div>
<div style="position:absolute;left:1566px;top:-10px;width:20px;height:21px;border:1px solid #c0d0f4;border-radius:3px;background:#c06a78;opacity:0.9"></div>
<div style="position:absolute;left:1527px;top:3px;width:7px;height:3px;background:#e8eefc"></div>
<div style="position:absolute;left:1549px;top:-6px;width:11px;height:11px;border:1px solid #e8eefc"></div>
<svg style="position:absolute;left:1568px;top:1px" width="15" height="8"><path d="M2 7L7.5 2L13 7" stroke="#f4dada" stroke-width="2" fill="none"/></svg>
<div style="position:absolute;left:0px;top:16px;width:1587px;height:579px;background:#fff"></div>
<div style="position:absolute;left:1578px;top:503px;width:9px;height:2px;background:#2d2d2d"></div>
<div style="position:absolute;left:1578px;top:505px;width:9px;height:4px;background:#ece9d8"></div>
<div style="position:absolute;left:1579px;top:508px;width:3px;height:18px;background:#8be840"></div>
<div style="position:absolute;left:1580px;top:508px;width:1px;height:33px;background:#c8c8c0"></div>
<div style="position:absolute;left:1585px;top:505px;width:2px;height:86px;background:#ece9d8"></div>
<div class="t" style="left:3px;top:20px;font-size:16px;color:#36368a">C:\Xcalibur\...\coke AGAIN\coke60</div>
<div class="t" style="left:482px;top:20px;font-size:16px;color:#36368a">8/24/2025 12:35:11 PM</div>
<div style="position:absolute;left:0px;top:55px;width:1587px;height:2px;background:#2d2d2d"></div>
<div style="position:absolute;left:0px;top:57px;width:1587px;height:2px;background:#f4f2ea"></div>
<div style="position:absolute;left:1564px;top:62px;width:19px;height:19px;background:#d4d0c8;border-top:1px solid #f8f8f8;border-left:1px solid #f8f8f8;border-right:1px solid #8a8a8a;border-bottom:1px solid #8a8a8a"><svg style="position:absolute;left:1px;top:3px" width="16" height="12"><path d="M0 6h6" stroke="#000" stroke-width="1.4"/><path d="M6 2v8M7 4h5v4H7zM12 2v8" stroke="#000" stroke-width="1.4" fill="none"/></svg></div>
</div>
<svg style="position:absolute;left:0;top:0" width="1919" height="574" viewBox="0 0 1919 574"><text x="333" y="200" font-family="Liberation Sans" font-size="14" fill="#111">RT:</text><text x="361" y="200" font-family="Liberation Sans" font-size="14" fill="#2e2e8a">0.00 - 66.68</text><rect x="391" y="204" width="1437" height="380" rx="3" fill="#f0f0f0" stroke="#d4d4d4" stroke-width="1"/><path d="M381.3 570.5H389.3 M384.3 563.5H389.3 M384.3 556.5H389.3 M384.3 549.4H389.3 M384.3 542.4H389.3 M381.3 535.4H389.3 M384.3 528.4H389.3 M384.3 521.4H389.3 M384.3 514.3H389.3 M384.3 507.3H389.3 M381.3 500.3H389.3 M384.3 493.3H389.3 M384.3 486.3H389.3 M384.3 479.2H389.3 M384.3 472.2H389.3 M381.3 465.2H389.3 M384.3 458.2H389.3 M384.3 451.2H389.3 M384.3 444.1H389.3 M384.3 437.1H389.3 M381.3 430.1H389.3 M384.3 423.1H389.3 M384.3 416.1H389.3 M384.3 409.0H389.3 M384.3 402.0H389.3 M381.3 395.0H389.3 M384.3 388.0H389.3 M384.3 381.0H389.3 M384.3 373.9H389.3 M384.3 366.9H389.3 M381.3 359.9H389.3 M384.3 352.9H389.3 M384.3 345.9H389.3 M384.3 338.8H389.3 M384.3 331.8H389.3 M381.3 324.8H389.3 M384.3 317.8H389.3 M384.3 310.8H389.3 M384.3 303.7H389.3 M384.3 296.7H389.3 M381.3 289.7H389.3 M384.3 282.7H389.3 M384.3 275.7H389.3 M384.3 268.6H389.3 M384.3 261.6H389.3 M381.3 254.6H389.3 M384.3 247.6H389.3 M384.3 240.6H389.3 M384.3 233.5H389.3 M384.3 226.5H389.3 M381.3 219.5H389.3" stroke="#000" stroke-width="1.3"/><g font-family="Liberation Sans" font-size="14" fill="#0a0a0a"><text x="379.3" y="575.5" text-anchor="end">0</text><text x="379.3" y="540.4" text-anchor="end">10</text><text x="379.3" y="505.3" text-anchor="end">20</text><text x="379.3" y="470.2" text-anchor="end">30</text><text x="379.3" y="435.1" text-anchor="end">40</text><text x="379.3" y="400.0" text-anchor="end">50</text><text x="379.3" y="364.9" text-anchor="end">60</text><text x="379.3" y="329.8" text-anchor="end">70</text><text x="379.3" y="294.7" text-anchor="end">80</text><text x="379.3" y="259.6" text-anchor="end">90</text><text x="379.3" y="224.5" text-anchor="end">100</text></g><path d="M389.3 218V572" stroke="#000" stroke-width="2"/><text transform="translate(350 395) rotate(-90)" font-family="Liberation Sans" font-size="14" fill="#111" text-anchor="middle">Relative Abundance</text><rect x="389" y="570.5" width="1440" height="3.5" fill="#111"/><path d="M391 572.4H1828" stroke="#fff" stroke-width="1.4" stroke-dasharray="2.2 1.8"/><path d="M464 519L482 516 M483 537.5L501 534.7 M504 540L537 537 M628 554L636 551 M646 561L680 558 M714 563L740 561 M782 548L792 551 M1044 561L1066 558 M1100 566L1110 563 M1136 565L1160 562 M1236 563L1250 565 M1300 565L1320 563 M1525 564L1535 562 M1570 563L1580 565 M1636 562L1668 559 M1720 565L1715 563 M1800 562L1822 566" stroke="#6cc46c" stroke-width="1" fill="none"/><path d="M454.0 490.2 L454.3 492.5 L454.5 489.0 L454.8 494.8 L455.0 491.6 L455.3 493.8 L455.5 497.2 L455.8 494.1 L456.0 498.9 L456.3 496.3 L456.5 500.1 L456.8 500.6 L457.0 498.5 L457.3 495.7 L457.5 502.4 L457.8 502.3 L458.0 499.5 L458.3 497.4 L458.5 501.2 L458.8 503.4 L459.0 499.2 L459.3 507.5 L459.5 501.5 L459.8 506.7 L460.0 508.5 L460.3 509.3 L460.5 508.3 L460.8 504.9 L461.0 510.5 L461.3 507.9 L461.5 508.0 L461.8 510.6 L462.0 509.9 L462.3 514.0 L462.5 514.6 L462.8 514.0 L463.0 511.0 L463.3 513.4 L463.5 514.7 L463.8 513.2 L464.0 514.7 L464.3 516.3 L464.5 513.2 L464.8 514.4 L465.0 518.1 L465.3 516.2 L465.5 517.0 L465.8 515.1 L466.0 516.5 L466.3 520.0 L466.5 515.8 L466.8 521.9 L467.0 520.4 L467.3 518.6 L467.5 522.9 L467.8 521.2 L468.0 524.5 L468.3 520.8 L468.5 520.6 L468.8 522.2 L469.0 520.7 L469.3 524.6 L469.5 522.6 L469.8 523.6 L470.0 524.1 L470.3 525.2 L470.5 523.2 L470.8 523.0 L471.0 526.2 L471.3 525.4 L471.5 529.3 L471.8 525.8 L472.0 526.5 L472.3 524.8 L472.5 526.2 L472.8 529.6 L473.0 529.3 L473.3 528.0 L473.5 532.0 L473.8 529.8 L474.0 531.8 L474.3 532.3 L474.5 532.9 L474.8 529.3 L475.0 533.1 L475.3 532.8 L475.5 532.3 L475.8 529.9 L476.0 534.5 L476.3 532.8 L476.5 532.5 L476.8 531.0 L477.0 531.6 L477.3 531.7 L477.5 535.0 L477.8 534.5 L478.0 535.1 L478.3 532.6 L478.5 532.5 L478.8 536.8 L479.0 537.0 L479.3 536.9 L479.5 537.1 L479.8 536.1 L480.0 535.8 L480.3 537.6 L480.5 539.1 L480.8 537.3 L481.0 537.7 L481.3 536.9 L481.5 535.1 L481.8 536.5 L482.0 537.4 L482.3 536.9 L482.5 536.5 L482.8 539.4 L483.0 535.1 L483.3 535.5 L483.5 534.8 L483.8 535.2 L484.0 537.6 L484.3 538.1 L484.5 540.1 L484.8 538.1 L485.0 541.3 L485.3 541.8 L485.5 541.5 L485.8 542.1 L486.0 541.6 L486.3 543.1 L486.5 543.6 L486.8 543.1 L487.0 543.5 L487.3 542.6 L487.5 544.2 L487.8 540.7 L488.0 542.0 L488.3 544.2 L488.5 543.9 L488.8 543.6 L489.0 543.7 L489.3 544.9 L489.5 541.9 L489.8 541.5 L490.0 543.9 L490.3 544.0 L490.5 545.8 L490.8 545.8 L491.0 545.0 L491.3 545.4 L491.5 543.3 L491.8 546.1 L492.0 546.9 L492.3 543.2 L492.5 545.1 L492.8 546.7 L493.0 545.3 L493.3 547.5 L493.5 545.6 L493.8 543.9 L494.0 544.5 L494.3 545.3 L494.5 547.2 L494.8 546.9 L495.0 547.8 L495.3 545.5 L495.5 546.6 L495.8 545.7 L496.0 547.6 L496.3 548.1 L496.5 546.0 L496.8 545.4 L497.0 546.1 L497.3 546.4 L497.5 546.4 L497.8 546.8 L498.0 548.9 L498.3 547.9 L498.5 548.6 L498.8 550.0 L499.0 550.1 L499.3 549.2 L499.5 549.4 L499.8 547.9 L500.0 547.0 L500.3 549.0 L500.5 547.3 L500.8 547.2 L501.0 547.5 L501.3 549.7 L501.5 550.3 L501.8 550.4 L502.0 550.6 L502.3 550.6 L502.5 549.1 L502.8 548.1 L503.0 548.3 L503.3 549.4 L503.5 548.4 L503.8 547.2 L504.0 549.0 L504.3 545.5 L504.5 542.8 L504.8 541.5 L505.0 540.1 L505.3 541.4 L505.5 544.5 L505.8 543.9 L506.0 547.5 L506.3 547.1 L506.5 547.6 L506.8 550.5 L507.0 551.0 L507.3 549.4 L507.5 550.4 L507.8 552.5 L508.0 552.8 L508.3 552.8 L508.5 550.4 L508.8 550.8 L509.0 553.1 L509.3 550.9 L509.5 550.4 L509.8 551.6 L510.0 552.7 L510.3 552.1 L510.5 553.6 L510.8 554.1 L511.0 550.9 L511.3 552.1 L511.5 552.5 L511.8 551.3 L512.0 553.0 L512.3 551.6 L512.5 551.8 L512.8 553.9 L513.0 553.9 L513.3 553.8 L513.5 554.0 L513.8 553.0 L514.0 554.1 L514.3 553.6 L514.5 554.6 L514.8 552.2 L515.0 554.0 L515.3 553.8 L515.5 553.4 L515.8 552.5 L516.0 554.1 L516.3 552.5 L516.5 553.9 L516.8 553.9 L517.0 554.0 L517.3 555.6 L517.5 554.4 L517.8 555.2 L518.0 555.9 L518.3 553.4 L518.5 555.4 L518.8 554.5 L519.0 553.8 L519.3 554.4 L519.5 555.2 L519.8 554.6 L520.0 554.6 L520.3 553.9 L520.5 556.1 L520.8 554.7 L521.0 555.7 L521.3 555.7 L521.5 554.2 L521.8 555.1 L522.0 555.0 L522.3 554.4 L522.5 554.0 L522.8 555.5 L523.0 555.0 L523.3 555.4 L523.5 555.4 L523.8 554.9 L524.0 555.7 L524.3 555.5 L524.5 555.7 L524.8 554.4 L525.0 555.2 L525.3 554.7 L525.5 554.5 L525.8 556.6 L526.0 555.8 L526.3 554.7 L526.5 555.0 L526.8 557.2 L527.0 557.3 L527.3 556.4 L527.5 557.5 L527.8 557.0 L528.0 557.6 L528.3 555.9 L528.5 555.6 L528.8 555.3 L529.0 557.5 L529.3 555.9 L529.5 556.1 L529.8 557.7 L530.0 555.5 L530.3 555.3 L530.5 557.6 L530.8 555.5 L531.0 557.1 L531.3 556.9 L531.5 555.5 L531.8 556.0 L532.0 558.0 L532.3 557.2 L532.5 557.0 L532.8 557.6 L533.0 558.0 L533.3 557.7 L533.5 556.6 L533.8 558.6 L534.0 557.1 L534.3 557.5 L534.5 558.8 L534.8 557.9 L535.0 557.1 L535.3 557.5 L535.5 558.8 L535.8 556.2 L536.0 556.8 L536.3 556.3 L536.5 558.8 L536.8 558.4 L537.0 559.0 L537.3 557.0 L537.5 558.5 L537.8 558.9 L538.0 558.1 L538.3 556.8 L538.5 557.1 L538.8 558.7 L539.0 559.0 L539.3 556.9 L539.5 557.9 L539.8 557.6 L540.0 559.3 L540.3 559.4 L540.5 557.7 L540.8 558.5 L541.0 559.5 L541.3 557.1 L541.5 558.0 L541.8 557.6 L542.0 559.6 L542.3 557.5 L542.5 559.7 L542.8 557.5 L543.0 558.7 L543.3 559.0 L543.5 558.5 L543.8 557.5 L544.0 559.3 L544.3 559.7 L544.5 558.7 L544.8 559.5 L545.0 559.9 L545.3 559.8 L545.5 560.1 L545.8 559.7 L546.0 559.4 L546.3 559.5 L546.5 558.3 L546.8 559.6 L547.0 559.0 L547.3 559.9 L547.5 559.5 L547.8 560.4 L548.0 559.8 L548.3 560.5 L548.5 558.6 L548.8 559.1 L549.0 560.1 L549.3 559.4 L549.5 558.2 L549.8 560.4 L550.0 558.5 L550.3 559.6 L550.5 559.4 L550.8 558.6 L551.0 559.8 L551.3 559.5 L551.5 559.0 L551.8 558.2 L552.0 559.9 L552.3 558.6 L552.5 558.9 L552.8 559.0 L553.0 559.4 L553.3 559.4 L553.5 559.9 L553.8 559.3 L554.0 558.9 L554.3 556.3 L554.5 557.0 L554.8 556.4 L555.0 555.8 L555.3 552.7 L555.5 552.6 L555.8 554.0 L556.0 556.1 L556.3 557.1 L556.5 557.8 L556.8 558.1 L557.0 559.5 L557.3 559.2 L557.5 560.0 L557.8 558.4 L558.0 558.6 L558.3 559.9 L558.5 560.7 L558.8 559.0 L559.0 560.7 L559.3 560.6 L559.5 561.5 L559.8 560.5 L560.0 560.2 L560.3 560.1 L560.5 560.7 L560.8 559.6 L561.0 560.4 L561.3 559.0 L561.5 558.5 L561.8 556.0 L562.0 554.8 L562.3 551.8 L562.5 546.4 L562.8 540.8 L563.0 531.3 L563.3 521.8 L563.5 508.2 L563.8 495.1 L564.0 479.7 L564.3 463.5 L564.5 455.3 L564.8 453.1 L565.0 455.2 L565.3 472.7 L565.5 479.3 L565.8 491.4 L566.0 507.4 L566.3 511.2 L566.5 520.0 L566.8 529.4 L567.0 535.5 L567.3 540.6 L567.5 547.8 L567.8 549.8 L568.0 552.6 L568.3 553.8 L568.5 555.6 L568.8 556.8 L569.0 558.5 L569.3 558.4 L569.5 559.5 L569.8 559.8 L570.0 561.3 L570.3 562.0 L570.5 561.9 L570.8 561.4 L571.0 562.1 L571.3 560.4 L571.5 561.1 L571.8 561.0 L572.0 561.0 L572.3 560.9 L572.5 561.4 L572.8 562.6 L573.0 560.7 L573.3 560.8 L573.5 561.4 L573.8 561.4 L574.0 561.1 L574.3 562.6 L574.5 560.9 L574.8 562.1 L575.0 562.6 L575.3 562.1 L575.5 561.0 L575.8 562.3 L576.0 561.0 L576.3 560.5 L576.5 561.6 L576.8 561.9 L577.0 561.7 L577.3 561.1 L577.5 560.9 L577.8 561.2 L578.0 561.0 L578.3 562.3 L578.5 561.9 L578.8 561.4 L579.0 559.9 L579.3 560.6 L579.5 559.4 L579.8 560.3 L580.0 559.5 L580.3 558.2 L580.5 556.2 L580.8 555.3 L581.0 554.6 L581.3 555.3 L581.5 554.8 L581.8 555.5 L582.0 556.0 L582.3 557.6 L582.5 555.6 L582.8 557.8 L583.0 555.5 L583.3 555.4 L583.5 557.6 L583.8 555.6 L584.0 553.6 L584.3 552.1 L584.5 552.7 L584.8 552.5 L585.0 552.6 L585.3 550.9 L585.5 554.5 L585.8 554.6 L586.0 557.1 L586.3 557.1 L586.5 557.0 L586.8 560.1 L587.0 559.0 L587.3 560.4 L587.5 560.0 L587.8 560.8 L588.0 562.3 L588.3 560.9 L588.5 562.0 L588.8 563.3 L589.0 563.4 L589.3 562.3 L589.5 562.5 L589.8 562.9 L590.0 563.3 L590.3 562.8 L590.5 562.9 L590.8 561.7 L591.0 563.7 L591.3 562.0 L591.5 561.8 L591.8 563.5 L592.0 561.6 L592.3 562.1 L592.5 561.6 L592.8 563.0 L593.0 562.7 L593.3 562.6 L593.5 561.0 L593.8 561.7 L594.0 561.8 L594.3 561.1 L594.5 560.7 L594.8 560.2 L595.0 558.7 L595.3 554.7 L595.5 554.1 L595.8 549.3 L596.0 548.9 L596.3 546.1 L596.5 543.1 L596.8 544.6 L597.0 544.9 L597.3 544.0 L597.5 546.0 L597.8 547.9 L598.0 550.3 L598.3 550.9 L598.5 552.3 L598.8 555.0 L599.0 555.7 L599.3 558.7 L599.5 557.7 L599.8 559.3 L600.0 559.2 L600.3 560.1 L600.5 561.5 L600.8 562.5 L601.0 560.7 L601.3 562.9 L601.5 562.3 L601.8 562.8 L602.0 563.1 L602.3 562.2 L602.5 561.7 L602.8 563.4 L603.0 562.6 L603.3 563.5 L603.5 562.9 L603.8 563.3 L604.0 563.9 L604.3 563.9 L604.5 563.8 L604.8 562.3 L605.0 563.2 L605.3 563.8 L605.5 562.3 L605.8 562.1 L606.0 563.4 L606.3 564.1 L606.5 564.0 L606.8 564.2 L607.0 563.6 L607.3 564.2 L607.5 563.9 L607.8 563.9 L608.0 563.2 L608.3 562.5 L608.5 562.8 L608.8 563.6 L609.0 563.6 L609.3 563.3 L609.5 563.7 L609.8 563.8 L610.0 564.4 L610.3 563.9 L610.5 562.4 L610.8 564.3 L611.0 563.4 L611.3 563.2 L611.5 562.7 L611.8 564.1 L612.0 564.0 L612.3 564.1 L612.5 563.7 L612.8 563.6 L613.0 562.5 L613.3 562.8 L613.5 562.7 L613.8 564.6 L614.0 564.6 L614.3 563.1 L614.5 562.7 L614.8 563.7 L615.0 563.4 L615.3 564.7 L615.5 563.9 L615.8 562.7 L616.0 562.9 L616.3 562.9 L616.5 562.6 L616.8 564.2 L617.0 564.5 L617.3 564.4 L617.5 563.6 L617.8 563.3 L618.0 562.7 L618.3 563.2 L618.5 563.4 L618.8 563.1 L619.0 563.8 L619.3 563.6 L619.5 564.8 L619.8 563.1 L620.0 564.4 L620.3 562.8 L620.5 563.5 L620.8 564.2 L621.0 564.6 L621.3 564.3 L621.5 563.5 L621.8 563.3 L622.0 564.6 L622.3 564.7 L622.5 563.7 L622.8 563.5 L623.0 563.9 L623.3 564.2 L623.5 563.2 L623.8 564.4 L624.0 563.6 L624.3 563.1 L624.5 561.6 L624.8 562.0 L625.0 561.1 L625.3 561.6 L625.5 561.6 L625.8 561.0 L626.0 558.4 L626.3 558.2 L626.5 558.5 L626.8 558.4 L627.0 556.2 L627.3 554.8 L627.5 555.0 L627.8 555.4 L628.0 554.4 L628.3 554.0 L628.5 556.6 L628.8 557.7 L629.0 557.3 L629.3 557.6 L629.5 557.4 L629.8 559.3 L630.0 558.2 L630.3 558.9 L630.5 560.0 L630.8 561.2 L631.0 559.6 L631.3 561.7 L631.5 560.8 L631.8 562.5 L632.0 562.8 L632.3 561.8 L632.5 563.1 L632.8 561.8 L633.0 563.1 L633.3 563.9 L633.5 564.0 L633.8 563.7 L634.0 563.2 L634.3 562.7 L634.5 564.6 L634.8 564.1 L635.0 564.5 L635.3 562.9 L635.5 564.8 L635.8 565.0 L636.0 565.1 L636.3 564.4 L636.5 563.3 L636.8 563.4 L637.0 563.7 L637.3 563.1 L637.5 563.3 L637.8 564.6 L638.0 565.0 L638.3 563.3 L638.5 563.8 L638.8 565.3 L639.0 564.0 L639.3 564.6 L639.5 564.6 L639.8 564.7 L640.0 565.1 L640.3 565.4 L640.5 564.8 L640.8 564.7 L641.0 563.4 L641.3 565.2 L641.5 563.4 L641.8 565.0 L642.0 564.7 L642.3 563.7 L642.5 563.7 L642.8 564.6 L643.0 565.4 L643.3 564.5 L643.5 564.7 L643.8 563.5 L644.0 565.1 L644.3 564.7 L644.5 563.6 L644.8 565.5 L645.0 564.7 L645.3 563.8 L645.5 563.9 L645.8 565.5 L646.0 565.5 L646.3 565.4 L646.5 563.6 L646.8 565.0 L647.0 564.0 L647.3 563.7 L647.5 564.9 L647.8 565.0 L648.0 563.6 L648.3 564.3 L648.5 565.1 L648.8 564.1 L649.0 564.9 L649.3 565.0 L649.5 565.6 L649.8 564.0 L650.0 563.7 L650.3 564.3 L650.5 563.6 L650.8 565.6 L651.0 565.2 L651.3 564.7 L651.5 563.6 L651.8 563.6 L652.0 564.9 L652.3 565.2 L652.5 564.8 L652.8 564.6 L653.0 563.7 L653.3 565.3 L653.5 564.0 L653.8 564.1 L654.0 564.0 L654.3 564.1 L654.5 564.4 L654.8 565.0 L655.0 565.1 L655.3 565.0 L655.5 564.1 L655.8 565.6 L656.0 565.3 L656.3 564.2 L656.5 565.2 L656.8 565.6 L657.0 565.7 L657.3 564.6 L657.5 565.1 L657.8 563.7 L658.0 563.9 L658.3 563.7 L658.5 565.2 L658.8 565.6 L659.0 565.6 L659.3 564.8 L659.5 564.3 L659.8 564.9 L660.0 565.3 L660.3 565.0 L660.5 564.5 L660.8 564.4 L661.0 564.3 L661.3 564.1 L661.5 564.5 L661.8 565.6 L662.0 564.1 L662.3 565.2 L662.5 564.7 L662.8 565.1 L663.0 564.3 L663.3 565.5 L663.5 565.4 L663.8 565.4 L664.0 565.6 L664.3 564.0 L664.5 564.7 L664.8 565.2 L665.0 565.1 L665.3 563.8 L665.5 564.9 L665.8 565.4 L666.0 564.2 L666.3 564.6 L666.5 563.9 L666.8 565.7 L667.0 564.9 L667.3 564.2 L667.5 564.2 L667.8 564.0 L668.0 565.9 L668.3 565.3 L668.5 565.7 L668.8 565.6 L669.0 563.9 L669.3 564.8 L669.5 564.0 L669.8 565.2 L670.0 564.2 L670.3 565.1 L670.5 565.5 L670.8 564.4 L671.0 564.0 L671.3 565.8 L671.5 564.8 L671.8 564.7 L672.0 565.6 L672.3 565.2 L672.5 565.7 L672.8 565.6 L673.0 565.5 L673.3 564.8 L673.5 564.7 L673.8 565.6 L674.0 566.0 L674.3 565.4 L674.5 564.6 L674.8 565.7 L675.0 565.4 L675.3 565.6 L675.5 564.4 L675.8 564.9 L676.0 565.9 L676.3 565.9 L676.5 565.3 L676.8 564.9 L677.0 564.8 L677.3 565.9 L677.5 565.8 L677.8 564.6 L678.0 565.2 L678.3 565.5 L678.5 565.5 L678.8 564.1 L679.0 565.5 L679.3 564.9 L679.5 565.4 L679.8 565.3 L680.0 564.3 L680.3 564.1 L680.5 565.4 L680.8 565.7 L681.0 564.6 L681.3 565.7 L681.5 566.1 L681.8 564.3 L682.0 565.3 L682.3 564.4 L682.5 565.3 L682.8 564.3 L683.0 565.2 L683.3 565.8 L683.5 566.1 L683.8 565.0 L684.0 564.8 L684.3 564.3 L684.5 566.0 L684.8 564.9 L685.0 565.4 L685.3 565.1 L685.5 565.9 L685.8 565.6 L686.0 565.1 L686.3 564.3 L686.5 566.0 L686.8 565.2 L687.0 564.5 L687.3 564.2 L687.5 565.8 L687.8 566.0 L688.0 564.3 L688.3 564.2 L688.5 565.2 L688.8 566.1 L689.0 564.3 L689.3 565.4 L689.5 564.4 L689.8 565.0 L690.0 564.5 L690.3 565.9 L690.5 564.6 L690.8 565.8 L691.0 565.4 L691.3 564.5 L691.5 564.5 L691.8 565.9 L692.0 565.8 L692.3 565.4 L692.5 565.2 L692.8 565.5 L693.0 566.0 L693.3 565.8 L693.5 564.8 L693.8 564.4 L694.0 566.2 L694.3 565.1 L694.5 564.7 L694.8 566.2 L695.0 564.6 L695.3 566.1 L695.5 565.1 L695.8 565.2 L696.0 565.0 L696.3 565.7 L696.5 565.4 L696.8 565.1 L697.0 565.4 L697.3 565.0 L697.5 565.4 L697.8 565.4 L698.0 566.3 L698.3 565.0 L698.5 565.3 L698.8 565.8 L699.0 564.8 L699.3 564.7 L699.5 565.4 L699.8 566.0 L700.0 565.4 L700.3 566.1 L700.5 566.1 L700.8 565.5 L701.0 566.2 L701.3 565.4 L701.5 565.3 L701.8 566.3 L702.0 565.0 L702.3 566.2 L702.5 564.9 L702.8 564.8 L703.0 565.3 L703.3 566.3 L703.5 565.3 L703.8 565.6 L704.0 564.4 L704.3 566.1 L704.5 564.6 L704.8 564.3 L705.0 564.9 L705.3 564.7 L705.5 566.0 L705.8 564.4 L706.0 565.4 L706.3 564.4 L706.5 564.5 L706.8 566.1 L707.0 564.8 L707.3 564.5 L707.5 566.3 L707.8 565.7 L708.0 564.9 L708.3 566.1 L708.5 564.6 L708.8 565.9 L709.0 564.7 L709.3 566.1 L709.5 565.4 L709.8 564.5 L710.0 566.0 L710.3 565.9 L710.5 565.4 L710.8 565.8 L711.0 566.4 L711.3 566.1 L711.5 566.1 L711.8 564.5 L712.0 565.0 L712.3 564.6 L712.5 566.1 L712.8 564.8 L713.0 566.2 L713.3 565.4 L713.5 565.1 L713.8 565.7 L714.0 564.7 L714.3 565.3 L714.5 565.3 L714.8 564.7 L715.0 566.3 L715.3 564.4 L715.5 565.2 L715.8 565.7 L716.0 564.8 L716.3 565.9 L716.5 564.4 L716.8 565.3 L717.0 565.7 L717.3 564.9 L717.5 565.6 L717.8 566.1 L718.0 565.0 L718.3 566.4 L718.5 564.8 L718.8 566.0 L719.0 565.2 L719.3 564.5 L719.5 565.3 L719.8 565.1 L720.0 565.9 L720.3 566.5 L720.5 566.4 L720.8 566.2 L721.0 565.2 L721.3 565.6 L721.5 565.5 L721.8 564.7 L722.0 566.2 L722.3 566.1 L722.5 565.2 L722.8 566.5 L723.0 566.5 L723.3 565.8 L723.5 566.3 L723.8 565.8 L724.0 566.1 L724.3 565.3 L724.5 565.3 L724.8 566.1 L725.0 565.3 L725.3 565.6 L725.5 566.3 L725.8 564.6 L726.0 566.0 L726.3 566.2 L726.5 566.3 L726.8 565.2 L727.0 564.8 L727.3 564.9 L727.5 565.7 L727.8 566.0 L728.0 566.5 L728.3 565.2 L728.5 565.4 L728.8 565.8 L729.0 565.2 L729.3 565.7 L729.5 564.6 L729.8 565.1 L730.0 566.1 L730.3 564.7 L730.5 566.5 L730.8 565.5 L731.0 565.7 L731.3 566.1 L731.5 566.5 L731.8 565.0 L732.0 566.5 L732.3 565.5 L732.5 564.7 L732.8 566.3 L733.0 566.2 L733.3 565.3 L733.5 565.5 L733.8 565.3 L734.0 564.9 L734.3 566.2 L734.5 566.0 L734.8 566.0 L735.0 566.5 L735.3 564.8 L735.5 565.0 L735.8 565.1 L736.0 566.6 L736.3 564.9 L736.5 565.1 L736.8 565.7 L737.0 565.1 L737.3 565.7 L737.5 566.1 L737.8 566.4 L738.0 566.1 L738.3 566.5 L738.5 565.9 L738.8 565.1 L739.0 565.2 L739.3 564.9 L739.5 565.2 L739.8 566.1 L740.0 565.5 L740.3 565.7 L740.5 565.0 L740.8 565.6 L741.0 566.1 L741.3 565.3 L741.5 564.7 L741.8 566.2 L742.0 564.8 L742.3 566.6 L742.5 566.1 L742.8 566.1 L743.0 565.1 L743.3 564.7 L743.5 565.1 L743.8 566.0 L744.0 564.8 L744.3 566.0 L744.5 566.1 L744.8 564.8 L745.0 565.3 L745.3 565.2 L745.5 565.3 L745.8 564.6 L746.0 565.7 L746.3 564.9 L746.5 565.2 L746.8 564.8 L747.0 565.7 L747.3 565.1 L747.5 565.4 L747.8 565.9 L748.0 566.1 L748.3 565.2 L748.5 566.3 L748.8 564.6 L749.0 566.1 L749.3 566.3 L749.5 566.1 L749.8 564.4 L750.0 565.5 L750.3 565.9 L750.5 566.1 L750.8 566.0 L751.0 564.5 L751.3 564.6 L751.5 564.4 L751.8 564.2 L752.0 565.5 L752.3 564.3 L752.5 564.7 L752.8 563.6 L753.0 563.5 L753.3 563.3 L753.5 565.0 L753.8 563.1 L754.0 563.0 L754.3 563.0 L754.5 564.9 L754.8 564.7 L755.0 565.0 L755.3 565.3 L755.5 563.6 L755.8 563.8 L756.0 564.3 L756.3 564.0 L756.5 564.5 L756.8 565.3 L757.0 565.8 L757.3 565.9 L757.5 564.6 L757.8 565.8 L758.0 565.6 L758.3 565.4 L758.5 566.3 L758.8 565.9 L759.0 565.9 L759.3 565.0 L759.5 565.8 L759.8 565.9 L760.0 564.6 L760.3 565.6 L760.5 564.9 L760.8 565.4 L761.0 566.6 L761.3 565.8 L761.5 565.8 L761.8 565.1 L762.0 566.0 L762.3 565.3 L762.5 565.6 L762.8 566.3 L763.0 564.9 L763.3 566.5 L763.5 565.0 L763.8 566.4 L764.0 566.7 L764.3 566.3 L764.5 565.2 L764.8 564.7 L765.0 566.7 L765.3 565.7 L765.5 565.7 L765.8 565.1 L766.0 566.3 L766.3 565.7 L766.5 566.0 L766.8 565.0 L767.0 566.2 L767.3 564.8 L767.5 566.2 L767.8 566.3 L768.0 565.3 L768.3 565.7 L768.5 566.5 L768.8 565.4 L769.0 566.6 L769.3 565.1 L769.5 565.3 L769.8 565.1 L770.0 565.5 L770.3 566.0 L770.5 565.9 L770.8 565.9 L771.0 564.9 L771.3 566.6 L771.5 564.9 L771.8 566.7 L772.0 566.3 L772.3 566.2 L772.5 564.9 L772.8 565.7 L773.0 566.0 L773.3 565.0 L773.5 566.3 L773.8 565.8 L774.0 565.7 L774.3 565.2 L774.5 565.2 L774.8 565.4 L775.0 566.0 L775.3 566.1 L775.5 566.4 L775.8 565.0 L776.0 565.4 L776.3 565.3 L776.5 566.4 L776.8 565.9 L777.0 565.2 L777.3 565.6 L777.5 566.5 L777.8 565.8 L778.0 565.0 L778.3 566.3 L778.5 566.4 L778.8 566.2 L779.0 565.3 L779.3 565.1 L779.5 566.5 L779.8 566.4 L780.0 566.3 L780.3 566.1 L780.5 565.7 L780.8 566.4 L781.0 566.1 L781.3 566.4 L781.5 564.8 L781.8 565.3 L782.0 566.6 L782.3 564.8 L782.5 566.6 L782.8 566.0 L783.0 564.8 L783.3 565.2 L783.5 565.3 L783.8 565.9 L784.0 566.4 L784.3 565.5 L784.5 566.6 L784.8 566.4 L785.0 566.0 L785.3 566.7 L785.5 566.0 L785.8 565.2 L786.0 565.4 L786.3 565.8 L786.5 565.5 L786.8 565.8 L787.0 566.4 L787.3 565.5 L787.5 565.9 L787.8 565.2 L788.0 564.8 L788.3 565.7 L788.5 565.3 L788.8 564.8 L789.0 565.3 L789.3 565.6 L789.5 564.3 L789.8 563.6 L790.0 563.5 L790.3 563.2 L790.5 562.2 L790.8 562.0 L791.0 561.3 L791.3 560.8 L791.5 560.2 L791.8 558.3 L792.0 558.6 L792.3 556.5 L792.5 554.2 L792.8 553.3 L793.0 552.8 L793.3 554.1 L793.5 554.1 L793.8 554.6 L794.0 554.8 L794.3 556.3 L794.5 556.3 L794.8 556.4 L795.0 559.3 L795.3 558.7 L795.5 559.1 L795.8 560.8 L796.0 561.2 L796.3 560.6 L796.5 563.4 L796.8 562.6 L797.0 563.9 L797.3 562.9 L797.5 562.9 L797.8 564.1 L798.0 565.3 L798.3 564.5 L798.5 564.7 L798.8 564.5 L799.0 565.1 L799.3 564.9 L799.5 564.6 L799.8 565.4 L800.0 565.7 L800.3 564.6 L800.5 566.2 L800.8 565.3 L801.0 565.9 L801.3 565.2 L801.5 566.5 L801.8 564.8 L802.0 566.0 L802.3 566.7 L802.5 566.2 L802.8 566.0 L803.0 566.8 L803.3 566.0 L803.5 566.0 L803.8 565.4 L804.0 566.1 L804.3 566.3 L804.5 566.4 L804.8 565.3 L805.0 564.9 L805.3 565.8 L805.5 566.4 L805.8 565.2 L806.0 566.0 L806.3 566.4 L806.5 566.6 L806.8 565.3 L807.0 565.2 L807.3 565.5 L807.5 565.9 L807.8 565.7 L808.0 566.4 L808.3 564.9 L808.5 566.1 L808.8 565.5 L809.0 565.2 L809.3 565.2 L809.5 565.9 L809.8 566.2 L810.0 565.7 L810.3 566.6 L810.5 565.2 L810.8 566.1 L811.0 565.1 L811.3 566.3 L811.5 566.1 L811.8 566.3 L812.0 566.0 L812.3 566.5 L812.5 566.8 L812.8 565.4 L813.0 566.3 L813.3 566.3 L813.5 566.2 L813.8 565.9 L814.0 566.0 L814.3 565.5 L814.5 565.5 L814.8 566.1 L815.0 565.0 L815.3 565.1 L815.5 566.7 L815.8 565.1 L816.0 565.0 L816.3 565.2 L816.5 566.5 L816.8 565.1 L817.0 565.4 L817.3 566.6 L817.5 566.6 L817.8 564.6 L818.0 565.1 L818.3 565.9 L818.5 566.0 L818.8 565.8 L819.0 565.4 L819.3 564.0 L819.5 564.6 L819.8 564.7 L820.0 562.6 L820.3 562.3 L820.5 563.2 L820.8 560.8 L821.0 560.7 L821.3 559.4 L821.5 558.7 L821.8 557.1 L822.0 556.3 L822.3 555.0 L822.5 555.9 L822.8 553.3 L823.0 553.0 L823.3 551.7 L823.5 552.9 L823.8 552.0 L824.0 553.7 L824.3 555.3 L824.5 556.1 L824.8 557.1 L825.0 556.8 L825.3 558.8 L825.5 558.4 L825.8 560.0 L826.0 559.7 L826.3 560.3 L826.5 560.8 L826.8 560.6 L827.0 563.1 L827.3 561.6 L827.5 562.9 L827.8 563.1 L828.0 563.2 L828.3 563.1 L828.5 564.4 L828.8 564.5 L829.0 563.6 L829.3 565.6 L829.5 564.6 L829.8 564.7 L830.0 566.1 L830.3 564.9 L830.5 564.8 L830.8 564.3 L831.0 565.6 L831.3 564.2 L831.5 565.1 L831.8 565.0 L832.0 564.0 L832.3 565.6 L832.5 563.9 L832.8 563.8 L833.0 564.1 L833.3 562.5 L833.5 563.1 L833.8 562.4 L834.0 561.7 L834.3 560.6 L834.5 561.5 L834.8 560.5 L835.0 560.5 L835.3 560.5 L835.5 560.3 L835.8 562.1 L836.0 561.4 L836.3 562.9 L836.5 563.1 L836.8 564.1 L837.0 564.0 L837.3 563.3 L837.5 564.3 L837.8 564.3 L838.0 565.4 L838.3 565.6 L838.5 565.8 L838.8 565.3 L839.0 565.3 L839.3 565.1 L839.5 566.6 L839.8 565.3 L840.0 565.0 L840.3 565.7 L840.5 566.7 L840.8 566.2 L841.0 566.8 L841.3 566.5 L841.5 565.0 L841.8 565.6 L842.0 565.5 L842.3 565.3 L842.5 565.0 L842.8 565.6 L843.0 565.6 L843.3 565.6 L843.5 565.5 L843.8 565.7 L844.0 565.5 L844.3 566.4 L844.5 565.5 L844.8 566.0 L845.0 565.3 L845.3 566.7 L845.5 566.5 L845.8 566.8 L846.0 565.3 L846.3 565.0 L846.5 565.6 L846.8 566.1 L847.0 565.2 L847.3 565.3 L847.5 565.7 L847.8 566.4 L848.0 566.3 L848.3 566.0 L848.5 566.2 L848.8 566.0 L849.0 565.6 L849.3 565.0 L849.5 566.8 L849.8 565.7 L850.0 566.8 L850.3 566.6 L850.5 565.3 L850.8 565.7 L851.0 565.0 L851.3 566.0 L851.5 566.9 L851.8 566.1 L852.0 565.7 L852.3 565.0 L852.5 564.9 L852.8 565.9 L853.0 566.1 L853.3 566.7 L853.5 565.6 L853.8 566.5 L854.0 566.6 L854.3 566.9 L854.5 566.9 L854.8 565.5 L855.0 566.6 L855.3 564.9 L855.5 566.7 L855.8 565.1 L856.0 566.6 L856.3 566.8 L856.5 565.4 L856.8 566.4 L857.0 565.4 L857.3 566.5 L857.5 566.8 L857.8 565.3 L858.0 565.5 L858.3 565.2 L858.5 565.4 L858.8 566.7 L859.0 565.6 L859.3 565.5 L859.5 566.0 L859.8 565.0 L860.0 566.4 L860.3 565.0 L860.5 565.4 L860.8 566.9 L861.0 566.9 L861.3 565.6 L861.5 565.2 L861.8 566.7 L862.0 566.3 L862.3 565.4 L862.5 566.6 L862.8 565.2 L863.0 565.9 L863.3 566.8 L863.5 566.2 L863.8 565.7 L864.0 566.0 L864.3 565.5 L864.5 566.6 L864.8 565.3 L865.0 566.2 L865.3 565.6 L865.5 565.6 L865.8 566.1 L866.0 566.1 L866.3 565.3 L866.5 565.0 L866.8 565.3 L867.0 565.8 L867.3 566.3 L867.5 566.8 L867.8 564.9 L868.0 565.5 L868.3 565.2 L868.5 566.2 L868.8 565.7 L869.0 564.9 L869.3 565.2 L869.5 565.7 L869.8 566.3 L870.0 566.0 L870.3 565.1 L870.5 566.1 L870.8 565.5 L871.0 565.7 L871.3 565.1 L871.5 565.3 L871.8 566.3 L872.0 566.9 L872.3 566.4 L872.5 566.0 L872.8 565.7 L873.0 565.3 L873.3 565.1 L873.5 566.8 L873.8 565.2 L874.0 565.3 L874.3 565.2 L874.5 565.8 L874.8 566.3 L875.0 565.2 L875.3 565.3 L875.5 565.5 L875.8 565.1 L876.0 566.2 L876.3 566.7 L876.5 565.8 L876.8 565.3 L877.0 566.5 L877.3 565.4 L877.5 565.0 L877.8 566.4 L878.0 565.7 L878.3 565.5 L878.5 566.0 L878.8 566.5 L879.0 566.4 L879.3 565.4 L879.5 565.3 L879.8 566.0 L880.0 566.7 L880.3 565.3 L880.5 565.4 L880.8 566.4 L881.0 565.7 L881.3 565.1 L881.5 565.1 L881.8 565.9 L882.0 565.9 L882.3 565.7 L882.5 566.5 L882.8 566.5 L883.0 566.5 L883.3 565.5 L883.5 566.2 L883.8 565.8 L884.0 566.1 L884.3 565.9 L884.5 566.6 L884.8 566.8 L885.0 564.9 L885.3 566.1 L885.5 566.7 L885.8 565.6 L886.0 565.3 L886.3 566.6 L886.5 565.7 L886.8 566.2 L887.0 565.8 L887.3 566.8 L887.5 566.8 L887.8 564.8 L888.0 565.1 L888.3 565.8 L888.5 565.6 L888.8 566.2 L889.0 565.1 L889.3 565.8 L889.5 564.6 L889.8 564.9 L890.0 564.7 L890.3 564.2 L890.5 565.5 L890.8 565.8 L891.0 565.2 L891.3 565.0 L891.5 564.9 L891.8 564.6 L892.0 563.0 L892.3 561.7 L892.5 562.1 L892.8 560.2 L893.0 559.5 L893.3 560.8 L893.5 558.5 L893.8 558.0 L894.0 557.8 L894.3 554.1 L894.5 555.1 L894.8 553.0 L895.0 551.6 L895.3 549.5 L895.5 549.6 L895.8 550.1 L896.0 550.3 L896.3 551.9 L896.5 549.8 L896.8 550.6 L897.0 554.1 L897.3 555.6 L897.5 555.8 L897.8 556.4 L898.0 555.7 L898.3 556.6 L898.5 557.6 L898.8 560.5 L899.0 559.3 L899.3 560.1 L899.5 560.9 L899.8 560.6 L900.0 563.4 L900.3 563.6 L900.5 562.6 L900.8 562.6 L901.0 563.5 L901.3 564.6 L901.5 564.2 L901.8 564.1 L902.0 565.6 L902.3 565.3 L902.5 565.6 L902.8 566.0 L903.0 565.4 L903.3 566.1 L903.5 566.0 L903.8 566.3 L904.0 565.3 L904.3 566.7 L904.5 565.3 L904.8 566.4 L905.0 566.7 L905.3 564.9 L905.5 566.4 L905.8 565.0 L906.0 565.1 L906.3 565.1 L906.5 566.6 L906.8 566.0 L907.0 566.7 L907.3 565.0 L907.5 565.2 L907.8 565.6 L908.0 566.0 L908.3 566.2 L908.5 565.3 L908.8 566.0 L909.0 565.7 L909.3 566.6 L909.5 566.5 L909.8 566.8 L910.0 565.5 L910.3 565.8 L910.5 566.6 L910.8 565.2 L911.0 566.4 L911.3 566.1 L911.5 566.6 L911.8 566.4 L912.0 565.2 L912.3 566.2 L912.5 566.6 L912.8 565.9 L913.0 566.3 L913.3 565.1 L913.5 566.7 L913.8 565.0 L914.0 566.8 L914.3 565.1 L914.5 565.6 L914.8 566.5 L915.0 566.0 L915.3 566.3 L915.5 566.4 L915.8 566.5 L916.0 566.2 L916.3 564.9 L916.5 564.9 L916.8 565.0 L917.0 566.7 L917.3 566.3 L917.5 565.0 L917.8 566.7 L918.0 565.3 L918.3 566.1 L918.5 564.7 L918.8 566.6 L919.0 564.9 L919.3 565.8 L919.5 566.1 L919.8 566.3 L920.0 564.4 L920.3 564.9 L920.5 565.4 L920.8 564.6 L921.0 563.3 L921.3 564.4 L921.5 563.2 L921.8 563.7 L922.0 563.1 L922.3 561.0 L922.5 560.4 L922.8 560.9 L923.0 560.2 L923.3 559.2 L923.5 556.5 L923.8 555.4 L924.0 554.6 L924.3 553.2 L924.5 550.1 L924.8 547.8 L925.0 545.3 L925.3 544.0 L925.5 543.5 L925.8 542.0 L926.0 536.6 L926.3 536.1 L926.5 532.6 L926.8 534.6 L927.0 529.5 L927.3 532.5 L927.5 530.8 L927.8 531.9 L928.0 535.3 L928.3 539.2 L928.5 536.4 L928.8 540.1 L929.0 540.1 L929.3 544.4 L929.5 546.3 L929.8 545.3 L930.0 548.6 L930.3 550.8 L930.5 551.4 L930.8 552.0 L931.0 555.2 L931.3 554.7 L931.5 556.0 L931.8 556.8 L932.0 558.8 L932.3 558.0 L932.5 558.6 L932.8 559.2 L933.0 561.2 L933.3 560.8 L933.5 562.2 L933.8 561.8 L934.0 563.8 L934.3 562.3 L934.5 562.5 L934.8 563.8 L935.0 564.1 L935.3 564.3 L935.5 564.5 L935.8 565.7 L936.0 563.9 L936.3 565.6 L936.5 565.8 L936.8 566.1 L937.0 565.9 L937.3 564.8 L937.5 566.5 L937.8 566.4 L938.0 565.2 L938.3 566.3 L938.5 566.7 L938.8 565.5 L939.0 565.6 L939.3 565.7 L939.5 565.4 L939.8 566.6 L940.0 565.1 L940.3 565.4 L940.5 566.8 L940.8 566.6 L941.0 565.9 L941.3 565.9 L941.5 566.3 L941.8 566.7 L942.0 566.1 L942.3 566.6 L942.5 565.7 L942.8 565.2 L943.0 566.6 L943.3 565.8 L943.5 565.4 L943.8 566.6 L944.0 565.3 L944.3 565.0 L944.5 566.1 L944.8 566.1 L945.0 565.2 L945.3 565.9 L945.5 566.1 L945.8 565.0 L946.0 565.4 L946.3 566.2 L946.5 566.4 L946.8 566.3 L947.0 566.1 L947.3 565.0 L947.5 565.3 L947.8 565.1 L948.0 565.3 L948.3 565.2 L948.5 566.8 L948.8 565.9 L949.0 565.0 L949.3 565.1 L949.5 566.4 L949.8 566.1 L950.0 565.7 L950.3 566.2 L950.5 565.9 L950.8 566.8 L951.0 566.1 L951.3 565.9 L951.5 566.9 L951.8 566.6 L952.0 565.0 L952.3 565.4 L952.5 565.0 L952.8 565.7 L953.0 565.3 L953.3 565.2 L953.5 565.2 L953.8 566.9 L954.0 565.6 L954.3 566.4 L954.5 565.6 L954.8 566.4 L955.0 565.8 L955.3 565.1 L955.5 565.7 L955.8 566.4 L956.0 565.9 L956.3 566.0 L956.5 565.0 L956.8 566.3 L957.0 566.2 L957.3 565.5 L957.5 566.6 L957.8 565.6 L958.0 564.9 L958.3 565.7 L958.5 566.2 L958.8 565.8 L959.0 565.6 L959.3 566.3 L959.5 566.3 L959.8 566.2 L960.0 565.8 L960.3 565.5 L960.5 565.7 L960.8 565.7 L961.0 565.9 L961.3 564.8 L961.5 564.1 L961.8 564.4 L962.0 564.3 L962.3 564.0 L962.5 564.8 L962.8 563.5 L963.0 563.8 L963.3 563.4 L963.5 563.0 L963.8 563.1 L964.0 563.3 L964.3 563.2 L964.5 563.1 L964.8 562.2 L965.0 562.4 L965.3 561.9 L965.5 563.3 L965.8 562.7 L966.0 561.7 L966.3 563.3 L966.5 562.8 L966.8 563.2 L967.0 563.9 L967.3 562.5 L967.5 564.2 L967.8 563.4 L968.0 564.9 L968.3 565.3 L968.5 563.7 L968.8 564.8 L969.0 565.7 L969.3 565.2 L969.5 565.2 L969.8 564.7 L970.0 566.0 L970.3 565.9 L970.5 564.4 L970.8 564.9 L971.0 566.2 L971.3 565.8 L971.5 565.8 L971.8 565.1 L972.0 565.2 L972.3 564.7 L972.5 564.8 L972.8 565.3 L973.0 564.8 L973.3 564.7 L973.5 564.6 L973.8 565.1 L974.0 564.3 L974.3 564.3 L974.5 563.7 L974.8 565.2 L975.0 563.3 L975.3 565.0 L975.5 563.0 L975.8 563.1 L976.0 563.0 L976.3 561.6 L976.5 562.1 L976.8 562.0 L977.0 560.7 L977.3 560.0 L977.5 560.1 L977.8 560.2 L978.0 559.5 L978.3 559.0 L978.5 557.8 L978.8 558.6 L979.0 557.9 L979.3 557.1 L979.5 557.5 L979.8 557.8 L980.0 556.7 L980.3 556.8 L980.5 558.1 L980.8 558.6 L981.0 559.6 L981.3 559.6 L981.5 560.4 L981.8 559.6 L982.0 560.0 L982.3 561.6 L982.5 559.8 L982.8 561.7 L983.0 560.7 L983.3 561.1 L983.5 561.1 L983.8 563.1 L984.0 562.9 L984.3 562.0 L984.5 564.3 L984.8 564.5 L985.0 563.5 L985.3 563.9 L985.5 563.1 L985.8 563.6 L986.0 564.3 L986.3 563.5 L986.5 564.6 L986.8 564.8 L987.0 564.5 L987.3 565.2 L987.5 565.4 L987.8 565.0 L988.0 565.6 L988.3 564.4 L988.5 565.0 L988.8 565.4 L989.0 566.3 L989.3 565.8 L989.5 565.8 L989.8 565.5 L990.0 565.5 L990.3 564.9 L990.5 564.8 L990.8 565.8 L991.0 565.9 L991.3 565.5 L991.5 564.8 L991.8 566.1 L992.0 565.8 L992.3 565.2 L992.5 566.5 L992.8 566.2 L993.0 564.9 L993.3 565.2 L993.5 565.9 L993.8 566.7 L994.0 565.1 L994.3 565.5 L994.5 565.3 L994.8 564.9 L995.0 565.1 L995.3 566.1 L995.5 566.6 L995.8 566.3 L996.0 565.9 L996.3 565.9 L996.5 566.5 L996.8 566.6 L997.0 565.7 L997.3 565.7 L997.5 566.2 L997.8 564.9 L998.0 565.7 L998.3 566.8 L998.5 566.1 L998.8 565.3 L999.0 566.3 L999.3 565.5 L999.5 566.9 L999.8 566.3 L1000.0 565.2 L1000.3 565.7 L1000.5 565.6 L1000.8 566.5 L1001.0 565.9 L1001.3 565.8 L1001.5 566.4 L1001.8 565.6 L1002.0 565.8 L1002.3 564.9 L1002.5 565.7 L1002.8 566.0 L1003.0 566.6 L1003.3 566.5 L1003.5 565.3 L1003.8 566.6 L1004.0 566.6 L1004.3 566.4 L1004.5 565.7 L1004.8 565.0 L1005.0 565.4 L1005.3 565.0 L1005.5 566.5 L1005.8 566.5 L1006.0 564.9 L1006.3 565.8 L1006.5 564.9 L1006.8 565.5 L1007.0 565.8 L1007.3 565.5 L1007.5 565.8 L1007.8 563.9 L1008.0 564.5 L1008.3 564.8 L1008.5 564.4 L1008.8 564.3 L1009.0 564.8 L1009.3 562.7 L1009.5 563.1 L1009.8 561.9 L1010.0 562.7 L1010.3 561.9 L1010.5 562.3 L1010.8 562.3 L1011.0 559.5 L1011.3 559.1 L1011.5 559.8 L1011.8 557.4 L1012.0 556.8 L1012.3 557.3 L1012.5 555.4 L1012.8 553.1 L1013.0 553.4 L1013.3 550.4 L1013.5 551.4 L1013.8 549.2 L1014.0 546.2 L1014.3 546.2 L1014.5 543.8 L1014.8 538.9 L1015.0 538.2 L1015.3 533.9 L1015.5 533.8 L1015.8 531.0 L1016.0 526.6 L1016.3 524.0 L1016.5 514.7 L1016.8 515.1 L1017.0 508.5 L1017.3 507.1 L1017.5 498.4 L1017.8 493.9 L1018.0 487.7 L1018.3 484.2 L1018.5 476.9 L1018.8 463.6 L1019.0 460.1 L1019.3 452.9 L1019.5 445.0 L1019.8 435.3 L1020.0 426.5 L1020.3 418.5 L1020.5 403.1 L1020.8 395.5 L1021.0 386.4 L1021.3 370.7 L1021.5 364.6 L1021.8 351.6 L1022.0 335.1 L1022.3 329.4 L1022.5 314.8 L1022.8 299.7 L1023.0 288.3 L1023.3 282.5 L1023.5 269.8 L1023.8 256.2 L1024.0 249.4 L1024.3 235.7 L1024.5 234.6 L1024.8 222.4 L1025.0 223.9 L1025.3 229.5 L1025.5 232.7 L1025.8 241.9 L1026.0 244.4 L1026.3 256.4 L1026.5 259.7 L1026.8 271.6 L1027.0 283.1 L1027.3 294.0 L1027.5 300.9 L1027.8 314.4 L1028.0 319.0 L1028.3 335.6 L1028.5 342.3 L1028.8 352.1 L1029.0 364.3 L1029.3 369.8 L1029.5 382.6 L1029.8 389.6 L1030.0 399.4 L1030.3 410.4 L1030.5 418.2 L1030.8 429.1 L1031.0 436.3 L1031.3 438.1 L1031.5 450.0 L1031.8 454.1 L1032.0 465.6 L1032.3 468.2 L1032.5 476.1 L1032.8 480.7 L1033.0 488.0 L1033.3 495.3 L1033.5 498.2 L1033.8 503.6 L1034.0 508.7 L1034.3 508.3 L1034.5 515.5 L1034.8 518.3 L1035.0 518.5 L1035.3 522.8 L1035.5 525.3 L1035.8 528.4 L1036.0 535.1 L1036.3 536.8 L1036.5 540.3 L1036.8 539.4 L1037.0 541.5 L1037.3 544.8 L1037.5 546.3 L1037.8 546.9 L1038.0 548.3 L1038.3 551.4 L1038.5 550.6 L1038.8 553.5 L1039.0 553.7 L1039.3 556.1 L1039.5 557.2 L1039.8 555.7 L1040.0 557.1 L1040.3 557.9 L1040.5 560.4 L1040.8 560.9 L1041.0 561.2 L1041.3 561.6 L1041.5 561.8 L1041.8 562.0 L1042.0 563.2 L1042.3 562.9 L1042.5 562.5 L1042.8 563.8 L1043.0 562.6 L1043.3 563.5 L1043.5 563.4 L1043.8 564.6 L1044.0 564.4 L1044.3 564.0 L1044.5 564.9 L1044.8 565.8 L1045.0 564.1 L1045.3 564.4 L1045.5 565.5 L1045.8 566.1 L1046.0 564.5 L1046.3 565.1 L1046.5 566.3 L1046.8 565.9 L1047.0 566.3 L1047.3 564.9 L1047.5 566.2 L1047.8 564.8 L1048.0 565.1 L1048.3 566.5 L1048.5 565.3 L1048.8 565.9 L1049.0 565.3 L1049.3 565.1 L1049.5 566.2 L1049.8 566.6 L1050.0 564.9 L1050.3 566.0 L1050.5 565.0 L1050.8 565.5 L1051.0 565.4 L1051.3 565.2 L1051.5 565.6 L1051.8 566.0 L1052.0 566.8 L1052.3 565.5 L1052.5 566.0 L1052.8 565.9 L1053.0 565.1 L1053.3 566.7 L1053.5 565.4 L1053.8 566.8 L1054.0 565.5 L1054.3 565.3 L1054.5 566.4 L1054.8 565.8 L1055.0 565.0 L1055.3 565.7 L1055.5 565.8 L1055.8 566.4 L1056.0 566.8 L1056.3 566.2 L1056.5 566.1 L1056.8 566.5 L1057.0 566.3 L1057.3 566.7 L1057.5 565.5 L1057.8 565.6 L1058.0 566.5 L1058.3 566.4 L1058.5 565.9 L1058.8 566.0 L1059.0 565.1 L1059.3 566.2 L1059.5 566.3 L1059.8 565.2 L1060.0 566.7 L1060.3 565.8 L1060.5 566.3 L1060.8 565.3 L1061.0 565.8 L1061.3 565.4 L1061.5 566.6 L1061.8 565.6 L1062.0 565.7 L1062.3 566.0 L1062.5 565.4 L1062.8 565.3 L1063.0 566.7 L1063.3 566.4 L1063.5 566.2 L1063.8 566.5 L1064.0 566.8 L1064.3 566.4 L1064.5 566.5 L1064.8 565.5 L1065.0 566.0 L1065.3 566.7 L1065.5 566.3 L1065.8 566.0 L1066.0 566.2 L1066.3 566.6 L1066.5 566.8 L1066.8 566.9 L1067.0 565.0 L1067.3 565.4 L1067.5 566.8 L1067.8 565.5 L1068.0 565.0 L1068.3 565.8 L1068.5 566.7 L1068.8 566.0 L1069.0 566.1 L1069.3 566.6 L1069.5 565.8 L1069.8 566.9 L1070.0 565.1 L1070.3 565.6 L1070.5 565.7 L1070.8 565.1 L1071.0 565.6 L1071.3 566.4 L1071.5 566.4 L1071.8 566.7 L1072.0 566.9 L1072.3 565.4 L1072.5 565.3 L1072.8 566.3 L1073.0 566.6 L1073.3 565.7 L1073.5 565.2 L1073.8 565.1 L1074.0 566.6 L1074.3 565.4 L1074.5 565.3 L1074.8 565.5 L1075.0 566.3 L1075.3 566.6 L1075.5 565.3 L1075.8 566.3 L1076.0 566.2 L1076.3 565.8 L1076.5 566.2 L1076.8 565.3 L1077.0 566.5 L1077.3 566.9 L1077.5 565.8 L1077.8 565.7 L1078.0 565.3 L1078.3 565.5 L1078.5 565.1 L1078.8 565.0 L1079.0 565.9 L1079.3 565.9 L1079.5 566.6 L1079.8 566.3 L1080.0 565.8 L1080.3 566.8 L1080.5 565.6 L1080.8 566.6 L1081.0 566.0 L1081.3 565.0 L1081.5 566.8 L1081.8 566.9 L1082.0 566.1 L1082.3 566.6 L1082.5 565.5 L1082.8 566.9 L1083.0 565.3 L1083.3 565.2 L1083.5 565.4 L1083.8 566.1 L1084.0 566.4 L1084.3 565.6 L1084.5 565.9 L1084.8 566.1 L1085.0 566.3 L1085.3 566.1 L1085.5 565.6 L1085.8 565.3 L1086.0 565.1 L1086.3 566.6 L1086.5 566.3 L1086.8 566.0 L1087.0 565.8 L1087.3 566.2 L1087.5 566.5 L1087.8 566.8 L1088.0 566.3 L1088.3 566.0 L1088.5 565.0 L1088.8 565.1 L1089.0 565.2 L1089.3 565.0 L1089.5 565.0 L1089.8 565.7 L1090.0 565.3 L1090.3 566.8 L1090.5 565.6 L1090.8 565.7 L1091.0 566.3 L1091.3 565.8 L1091.5 565.0 L1091.8 566.0 L1092.0 565.6 L1092.3 566.3 L1092.5 566.2 L1092.8 565.2 L1093.0 566.9 L1093.3 566.6 L1093.5 565.6 L1093.8 566.0 L1094.0 566.8 L1094.3 565.6 L1094.5 566.2 L1094.8 565.8 L1095.0 566.1 L1095.3 565.9 L1095.5 565.8 L1095.8 566.1 L1096.0 566.7 L1096.3 566.6 L1096.5 565.2 L1096.8 565.8 L1097.0 566.7 L1097.3 565.2 L1097.5 566.4 L1097.8 566.7 L1098.0 565.9 L1098.3 566.4 L1098.5 566.0 L1098.8 565.8 L1099.0 566.5 L1099.3 565.8 L1099.5 566.7 L1099.8 565.9 L1100.0 565.8 L1100.3 566.8 L1100.5 566.1 L1100.8 566.8 L1101.0 566.1 L1101.3 565.2 L1101.5 565.8 L1101.8 565.5 L1102.0 565.4 L1102.3 566.7 L1102.5 565.0 L1102.8 565.5 L1103.0 566.7 L1103.3 565.3 L1103.5 566.2 L1103.8 566.6 L1104.0 565.0 L1104.3 565.8 L1104.5 565.4 L1104.8 566.7 L1105.0 565.4 L1105.3 566.8 L1105.5 566.5 L1105.8 566.2 L1106.0 566.9 L1106.3 565.7 L1106.5 566.5 L1106.8 566.3 L1107.0 565.5 L1107.3 566.1 L1107.5 565.2 L1107.8 565.7 L1108.0 565.2 L1108.3 565.8 L1108.5 565.1 L1108.8 565.2 L1109.0 566.6 L1109.3 565.4 L1109.5 566.3 L1109.8 565.4 L1110.0 565.6 L1110.3 565.3 L1110.5 566.7 L1110.8 566.2 L1111.0 565.5 L1111.3 565.0 L1111.5 565.5 L1111.8 566.8 L1112.0 565.7 L1112.3 566.7 L1112.5 565.8 L1112.8 565.3 L1113.0 566.7 L1113.3 565.1 L1113.5 565.6 L1113.8 566.4 L1114.0 566.5 L1114.3 566.0 L1114.5 565.3 L1114.8 565.8 L1115.0 566.7 L1115.3 566.9 L1115.5 566.7 L1115.8 565.3 L1116.0 566.6 L1116.3 565.8 L1116.5 566.4 L1116.8 565.6 L1117.0 566.2 L1117.3 566.6 L1117.5 565.2 L1117.8 565.9 L1118.0 565.6 L1118.3 565.3 L1118.5 565.0 L1118.8 566.9 L1119.0 566.3 L1119.3 566.6 L1119.5 565.9 L1119.8 565.2 L1120.0 565.3 L1120.3 566.9 L1120.5 566.6 L1120.8 565.3 L1121.0 565.6 L1121.3 566.2 L1121.5 566.0 L1121.8 566.6 L1122.0 565.2 L1122.3 566.1 L1122.5 565.2 L1122.8 565.7 L1123.0 566.8 L1123.3 566.3 L1123.5 566.5 L1123.8 565.1 L1124.0 565.8 L1124.3 566.8 L1124.5 566.6 L1124.8 566.2 L1125.0 566.0 L1125.3 565.8 L1125.5 566.2 L1125.8 566.2 L1126.0 566.9 L1126.3 565.8 L1126.5 566.3 L1126.8 566.9 L1127.0 566.0 L1127.3 565.0 L1127.5 566.8 L1127.8 566.6 L1128.0 565.6 L1128.3 566.4 L1128.5 566.4 L1128.8 565.9 L1129.0 566.4 L1129.3 565.8 L1129.5 565.9 L1129.8 565.0 L1130.0 565.0 L1130.3 566.9 L1130.5 565.8 L1130.8 565.4 L1131.0 565.2 L1131.3 565.4 L1131.5 565.7 L1131.8 565.7 L1132.0 566.2 L1132.3 566.4 L1132.5 565.3 L1132.8 565.2 L1133.0 565.1 L1133.3 565.6 L1133.5 566.3 L1133.8 565.4 L1134.0 565.5 L1134.3 565.9 L1134.5 565.7 L1134.8 566.2 L1135.0 565.8 L1135.3 566.1 L1135.5 566.8 L1135.8 566.3 L1136.0 566.3 L1136.3 565.0 L1136.5 566.0 L1136.8 566.2 L1137.0 566.4 L1137.3 566.5 L1137.5 566.2 L1137.8 566.7 L1138.0 566.9 L1138.3 565.2 L1138.5 566.0 L1138.8 566.0 L1139.0 565.8 L1139.3 566.3 L1139.5 566.6 L1139.8 566.8 L1140.0 566.3 L1140.3 566.3 L1140.5 565.5 L1140.8 565.8 L1141.0 565.1 L1141.3 566.3 L1141.5 565.1 L1141.8 565.8 L1142.0 566.8 L1142.3 566.6 L1142.5 565.8 L1142.8 565.0 L1143.0 566.2 L1143.3 565.4 L1143.5 566.1 L1143.8 565.2 L1144.0 566.8 L1144.3 566.0 L1144.5 565.1 L1144.8 566.4 L1145.0 566.4 L1145.3 566.9 L1145.5 566.6 L1145.8 566.4 L1146.0 565.5 L1146.3 566.5 L1146.5 566.1 L1146.8 566.5 L1147.0 565.7 L1147.3 565.2 L1147.5 565.6 L1147.8 566.5 L1148.0 565.5 L1148.3 565.0 L1148.5 565.7 L1148.8 566.8 L1149.0 565.3 L1149.3 565.2 L1149.5 566.3 L1149.8 566.7 L1150.0 566.6 L1150.3 565.9 L1150.5 565.2 L1150.8 565.7 L1151.0 565.1 L1151.3 566.5 L1151.5 566.3 L1151.8 565.4 L1152.0 565.6 L1152.3 566.1 L1152.5 565.6 L1152.8 566.3 L1153.0 566.8 L1153.3 566.1 L1153.5 566.8 L1153.8 565.7 L1154.0 566.3 L1154.3 565.9 L1154.5 565.7 L1154.8 566.4 L1155.0 566.0 L1155.3 566.9 L1155.5 565.1 L1155.8 565.8 L1156.0 565.0 L1156.3 566.8 L1156.5 565.7 L1156.8 565.5 L1157.0 566.3 L1157.3 566.7 L1157.5 566.6 L1157.8 566.7 L1158.0 565.4 L1158.3 566.8 L1158.5 565.3 L1158.8 566.1 L1159.0 565.9 L1159.3 565.8 L1159.5 565.8 L1159.8 565.6 L1160.0 565.7 L1160.3 566.3 L1160.5 565.5 L1160.8 566.4 L1161.0 565.5 L1161.3 565.4 L1161.5 565.4 L1161.8 566.3 L1162.0 565.4 L1162.3 565.0 L1162.5 566.0 L1162.8 566.4 L1163.0 565.9 L1163.3 565.1 L1163.5 566.7 L1163.8 566.9 L1164.0 566.0 L1164.3 565.6 L1164.5 565.4 L1164.8 566.2 L1165.0 565.0 L1165.3 566.5 L1165.5 565.4 L1165.8 566.8 L1166.0 566.9 L1166.3 566.7 L1166.5 566.8 L1166.8 565.9 L1167.0 565.8 L1167.3 566.6 L1167.5 565.1 L1167.8 566.2 L1168.0 566.6 L1168.3 566.6 L1168.5 565.5 L1168.8 565.1 L1169.0 566.6 L1169.3 566.9 L1169.5 565.4 L1169.8 566.5 L1170.0 565.0 L1170.3 565.9 L1170.5 565.7 L1170.8 566.2 L1171.0 565.3 L1171.3 566.0 L1171.5 566.3 L1171.8 565.1 L1172.0 566.7 L1172.3 565.5 L1172.5 566.8 L1172.8 565.6 L1173.0 566.1 L1173.3 565.2 L1173.5 566.8 L1173.8 565.8 L1174.0 566.1 L1174.3 565.1 L1174.5 565.0 L1174.8 565.7 L1175.0 566.5 L1175.3 566.4 L1175.5 566.4 L1175.8 566.1 L1176.0 566.5 L1176.3 566.5 L1176.5 565.4 L1176.8 565.7 L1177.0 566.3 L1177.3 564.9 L1177.5 566.5 L1177.8 565.8 L1178.0 566.6 L1178.3 565.2 L1178.5 565.2 L1178.8 566.4 L1179.0 565.4 L1179.3 565.3 L1179.5 566.4 L1179.8 566.3 L1180.0 566.0 L1180.3 565.2 L1180.5 566.6 L1180.8 565.6 L1181.0 565.7 L1181.3 566.0 L1181.5 565.8 L1181.8 565.2 L1182.0 566.5 L1182.3 565.2 L1182.5 566.2 L1182.8 565.4 L1183.0 565.2 L1183.3 566.6 L1183.5 565.2 L1183.8 564.9 L1184.0 566.3 L1184.3 566.9 L1184.5 566.7 L1184.8 565.0 L1185.0 566.9 L1185.3 565.1 L1185.5 566.6 L1185.8 565.5 L1186.0 566.7 L1186.3 566.6 L1186.5 565.6 L1186.8 566.8 L1187.0 566.3 L1187.3 565.1 L1187.5 565.5 L1187.8 565.2 L1188.0 565.0 L1188.3 566.9 L1188.5 566.5 L1188.8 565.4 L1189.0 565.6 L1189.3 566.9 L1189.5 565.9 L1189.8 566.5 L1190.0 566.1 L1190.3 566.7 L1190.5 566.9 L1190.8 565.0 L1191.0 566.3 L1191.3 565.2 L1191.5 566.7 L1191.8 566.0 L1192.0 566.7 L1192.3 566.1 L1192.5 566.6 L1192.8 565.6 L1193.0 566.6 L1193.3 565.5 L1193.5 565.9 L1193.8 566.7 L1194.0 566.2 L1194.3 565.9 L1194.5 565.1 L1194.8 566.2 L1195.0 566.5 L1195.3 565.0 L1195.5 565.2 L1195.8 565.5 L1196.0 566.4 L1196.3 566.6 L1196.5 566.4 L1196.8 566.8 L1197.0 566.9 L1197.3 565.9 L1197.5 566.1 L1197.8 565.8 L1198.0 566.2 L1198.3 566.9 L1198.5 565.6 L1198.8 565.6 L1199.0 565.8 L1199.3 565.8 L1199.5 565.6 L1199.8 565.0 L1200.0 565.2 L1200.3 565.5 L1200.5 566.1 L1200.8 566.3 L1201.0 566.1 L1201.3 565.0 L1201.5 566.2 L1201.8 566.2 L1202.0 566.1 L1202.3 566.7 L1202.5 564.9 L1202.8 566.9 L1203.0 565.7 L1203.3 565.1 L1203.5 566.4 L1203.8 565.7 L1204.0 566.2 L1204.3 566.5 L1204.5 566.5 L1204.8 566.7 L1205.0 565.3 L1205.3 565.4 L1205.5 565.1 L1205.8 566.8 L1206.0 565.5 L1206.3 566.3 L1206.5 565.6 L1206.8 565.8 L1207.0 566.3 L1207.3 565.0 L1207.5 566.9 L1207.8 565.4 L1208.0 565.2 L1208.3 565.9 L1208.5 565.8 L1208.8 564.9 L1209.0 566.5 L1209.3 565.7 L1209.5 565.4 L1209.8 566.2 L1210.0 565.5 L1210.3 566.1 L1210.5 565.9 L1210.8 565.7 L1211.0 565.6 L1211.3 566.3 L1211.5 565.7 L1211.8 565.9 L1212.0 566.5 L1212.3 565.7 L1212.5 566.4 L1212.8 565.1 L1213.0 566.0 L1213.3 565.5 L1213.5 565.9 L1213.8 566.0 L1214.0 566.5 L1214.3 566.7 L1214.5 565.1 L1214.8 565.9 L1215.0 565.9 L1215.3 565.9 L1215.5 565.3 L1215.8 566.5 L1216.0 566.6 L1216.3 565.3 L1216.5 566.0 L1216.8 565.7 L1217.0 565.3 L1217.3 565.1 L1217.5 565.2 L1217.8 566.9 L1218.0 566.2 L1218.3 565.3 L1218.5 565.3 L1218.8 566.7 L1219.0 566.6 L1219.3 566.4 L1219.5 566.7 L1219.8 566.2 L1220.0 565.3 L1220.3 565.9 L1220.5 566.0 L1220.8 566.8 L1221.0 566.1 L1221.3 564.9 L1221.5 565.5 L1221.8 566.0 L1222.0 566.0 L1222.3 565.3 L1222.5 565.4 L1222.8 566.6 L1223.0 565.6 L1223.3 566.2 L1223.5 565.9 L1223.8 566.5 L1224.0 566.2 L1224.3 566.3 L1224.5 566.2 L1224.8 566.9 L1225.0 566.5 L1225.3 565.8 L1225.5 566.8 L1225.8 566.6 L1226.0 565.5 L1226.3 566.4 L1226.5 566.3 L1226.8 566.5 L1227.0 565.3 L1227.3 566.8 L1227.5 565.7 L1227.8 565.2 L1228.0 566.5 L1228.3 566.1 L1228.5 565.4 L1228.8 565.7 L1229.0 566.2 L1229.3 566.8 L1229.5 566.1 L1229.8 566.2 L1230.0 565.5 L1230.3 566.3 L1230.5 566.1 L1230.8 565.6 L1231.0 565.3 L1231.3 566.2 L1231.5 566.2 L1231.8 565.8 L1232.0 565.1 L1232.3 566.6 L1232.5 565.0 L1232.8 565.5 L1233.0 566.2 L1233.3 565.6 L1233.5 566.3 L1233.8 566.8 L1234.0 565.4 L1234.3 566.2 L1234.5 565.9 L1234.8 565.9 L1235.0 565.1 L1235.3 565.4 L1235.5 566.9 L1235.8 565.8 L1236.0 566.0 L1236.3 566.0 L1236.5 565.3 L1236.8 566.1 L1237.0 566.0 L1237.3 565.2 L1237.5 566.1 L1237.8 566.0 L1238.0 565.9 L1238.3 565.3 L1238.5 565.6 L1238.8 565.5 L1239.0 566.1 L1239.3 566.9 L1239.5 565.6 L1239.8 565.8 L1240.0 565.4 L1240.3 565.4 L1240.5 566.7 L1240.8 566.5 L1241.0 566.8 L1241.3 565.3 L1241.5 566.7 L1241.8 566.8 L1242.0 565.4 L1242.3 565.8 L1242.5 566.8 L1242.8 565.6 L1243.0 565.5 L1243.3 566.0 L1243.5 566.8 L1243.8 565.6 L1244.0 566.1 L1244.3 565.8 L1244.5 564.9 L1244.8 565.3 L1245.0 565.2 L1245.3 566.6 L1245.5 566.3 L1245.8 565.9 L1246.0 566.9 L1246.3 565.0 L1246.5 566.4 L1246.8 566.4 L1247.0 566.3 L1247.3 566.4 L1247.5 565.2 L1247.8 565.8 L1248.0 565.9 L1248.3 566.1 L1248.5 566.8 L1248.8 566.3 L1249.0 565.2 L1249.3 565.3 L1249.5 565.2 L1249.8 566.4 L1250.0 566.5 L1250.3 566.8 L1250.5 565.9 L1250.8 566.2 L1251.0 566.0 L1251.3 566.0 L1251.5 565.8 L1251.8 566.2 L1252.0 565.3 L1252.3 566.5 L1252.5 565.1 L1252.8 565.8 L1253.0 566.8 L1253.3 566.3 L1253.5 565.9 L1253.8 566.1 L1254.0 565.8 L1254.3 566.3 L1254.5 566.4 L1254.8 565.3 L1255.0 566.4 L1255.3 565.5 L1255.5 565.3 L1255.8 565.8 L1256.0 566.0 L1256.3 565.1 L1256.5 566.0 L1256.8 565.2 L1257.0 566.8 L1257.3 566.1 L1257.5 565.7 L1257.8 566.8 L1258.0 565.2 L1258.3 566.8 L1258.5 565.7 L1258.8 566.6 L1259.0 565.1 L1259.3 565.8 L1259.5 565.3 L1259.8 565.9 L1260.0 565.6 L1260.3 565.6 L1260.5 566.3 L1260.8 566.5 L1261.0 565.3 L1261.3 566.6 L1261.5 565.1 L1261.8 566.5 L1262.0 566.7 L1262.3 566.7 L1262.5 565.4 L1262.8 565.0 L1263.0 566.1 L1263.3 565.6 L1263.5 566.4 L1263.8 565.1 L1264.0 565.6 L1264.3 566.6 L1264.5 566.8 L1264.8 565.5 L1265.0 566.9 L1265.3 565.3 L1265.5 566.3 L1265.8 566.5 L1266.0 565.8 L1266.3 566.3 L1266.5 565.8 L1266.8 566.6 L1267.0 565.1 L1267.3 566.3 L1267.5 565.3 L1267.8 566.6 L1268.0 565.3 L1268.3 565.0 L1268.5 566.2 L1268.8 566.9 L1269.0 566.2 L1269.3 565.7 L1269.5 566.5 L1269.8 565.8 L1270.0 566.8 L1270.3 566.0 L1270.5 565.5 L1270.8 566.1 L1271.0 565.6 L1271.3 566.7 L1271.5 565.3 L1271.8 566.7 L1272.0 565.1 L1272.3 564.9 L1272.5 565.1 L1272.8 565.9 L1273.0 566.4 L1273.3 566.2 L1273.5 565.4 L1273.8 565.9 L1274.0 565.1 L1274.3 566.8 L1274.5 566.0 L1274.8 565.2 L1275.0 565.7 L1275.3 565.9 L1275.5 566.8 L1275.8 566.7 L1276.0 566.4 L1276.3 565.2 L1276.5 565.2 L1276.8 566.5 L1277.0 565.1 L1277.3 566.9 L1277.5 565.7 L1277.8 565.0 L1278.0 566.2 L1278.3 565.0 L1278.5 565.6 L1278.8 566.8 L1279.0 566.3 L1279.3 566.0 L1279.5 566.4 L1279.8 565.5 L1280.0 566.6 L1280.3 565.4 L1280.5 566.3 L1280.8 566.8 L1281.0 565.8 L1281.3 566.7 L1281.5 565.8 L1281.8 565.4 L1282.0 565.7 L1282.3 566.0 L1282.5 566.9 L1282.8 565.9 L1283.0 566.7 L1283.3 565.6 L1283.5 566.7 L1283.8 565.8 L1284.0 566.2 L1284.3 566.2 L1284.5 565.6 L1284.8 566.6 L1285.0 566.6 L1285.3 565.1 L1285.5 566.3 L1285.8 565.3 L1286.0 565.2 L1286.3 566.0 L1286.5 566.6 L1286.8 566.7 L1287.0 565.2 L1287.3 566.7 L1287.5 565.9 L1287.8 565.9 L1288.0 566.7 L1288.3 566.0 L1288.5 566.6 L1288.8 565.9 L1289.0 565.9 L1289.3 566.2 L1289.5 566.5 L1289.8 566.1 L1290.0 566.5 L1290.3 566.7 L1290.5 566.5 L1290.8 565.2 L1291.0 565.9 L1291.3 565.2 L1291.5 566.9 L1291.8 565.0 L1292.0 566.0 L1292.3 565.4 L1292.5 565.8 L1292.8 565.6 L1293.0 566.5 L1293.3 565.4 L1293.5 566.6 L1293.8 566.4 L1294.0 566.9 L1294.3 566.2 L1294.5 565.9 L1294.8 566.4 L1295.0 565.2 L1295.3 566.8 L1295.5 565.8 L1295.8 566.5 L1296.0 565.7 L1296.3 565.4 L1296.5 565.5 L1296.8 566.8 L1297.0 566.4 L1297.3 565.7 L1297.5 565.0 L1297.8 566.9 L1298.0 565.7 L1298.3 565.6 L1298.5 565.3 L1298.8 566.3 L1299.0 565.3 L1299.3 566.0 L1299.5 565.1 L1299.8 566.9 L1300.0 565.1 L1300.3 566.1 L1300.5 566.1 L1300.8 566.8 L1301.0 566.4 L1301.3 565.5 L1301.5 565.6 L1301.8 566.6 L1302.0 566.2 L1302.3 566.7 L1302.5 566.5 L1302.8 566.5 L1303.0 566.3 L1303.3 565.0 L1303.5 564.9 L1303.8 565.4 L1304.0 566.0 L1304.3 565.9 L1304.5 565.4 L1304.8 565.1 L1305.0 565.4 L1305.3 565.7 L1305.5 566.5 L1305.8 565.7 L1306.0 565.2 L1306.3 565.4 L1306.5 566.8 L1306.8 565.5 L1307.0 566.2 L1307.3 566.6 L1307.5 565.0 L1307.8 565.6 L1308.0 565.4 L1308.3 566.7 L1308.5 565.3 L1308.8 565.1 L1309.0 565.1 L1309.3 565.4 L1309.5 565.3 L1309.8 565.3 L1310.0 565.8 L1310.3 566.1 L1310.5 565.3 L1310.8 565.4 L1311.0 565.2 L1311.3 566.3 L1311.5 565.0 L1311.8 565.9 L1312.0 565.0 L1312.3 566.7 L1312.5 565.0 L1312.8 565.4 L1313.0 566.4 L1313.3 565.3 L1313.5 566.5 L1313.8 566.5 L1314.0 566.0 L1314.3 566.5 L1314.5 566.0 L1314.8 565.1 L1315.0 565.6 L1315.3 565.5 L1315.5 566.2 L1315.8 565.4 L1316.0 565.3 L1316.3 565.6 L1316.5 565.1 L1316.8 565.3 L1317.0 566.1 L1317.3 566.8 L1317.5 565.6 L1317.8 565.3 L1318.0 566.3 L1318.3 565.7 L1318.5 565.3 L1318.8 565.4 L1319.0 566.9 L1319.3 566.0 L1319.5 566.9 L1319.8 566.7 L1320.0 565.3 L1320.3 566.1 L1320.5 565.7 L1320.8 566.0 L1321.0 566.3 L1321.3 566.5 L1321.5 566.2 L1321.8 565.2 L1322.0 565.7 L1322.3 566.4 L1322.5 566.8 L1322.8 566.4 L1323.0 565.5 L1323.3 566.1 L1323.5 565.6 L1323.8 565.3 L1324.0 566.7 L1324.3 565.6 L1324.5 566.9 L1324.8 565.3 L1325.0 566.6 L1325.3 566.4 L1325.5 565.0 L1325.8 566.2 L1326.0 566.5 L1326.3 565.2 L1326.5 565.7 L1326.8 565.1 L1327.0 566.1 L1327.3 565.9 L1327.5 565.0 L1327.8 565.9 L1328.0 565.0 L1328.3 566.6 L1328.5 565.3 L1328.8 566.6 L1329.0 565.9 L1329.3 566.9 L1329.5 566.6 L1329.8 565.0 L1330.0 566.0 L1330.3 565.3 L1330.5 566.4 L1330.8 566.2 L1331.0 566.7 L1331.3 565.8 L1331.5 565.2 L1331.8 565.9 L1332.0 566.2 L1332.3 565.1 L1332.5 565.1 L1332.8 565.6 L1333.0 566.8 L1333.3 565.7 L1333.5 566.0 L1333.8 565.0 L1334.0 566.2 L1334.3 565.6 L1334.5 565.7 L1334.8 566.2 L1335.0 565.9 L1335.3 565.6 L1335.5 565.1 L1335.8 565.9 L1336.0 566.2 L1336.3 565.0 L1336.5 566.8 L1336.8 565.3 L1337.0 565.6 L1337.3 565.8 L1337.5 566.0 L1337.8 565.4 L1338.0 565.2 L1338.3 565.5 L1338.5 565.4 L1338.8 566.9 L1339.0 566.3 L1339.3 566.7 L1339.5 565.0 L1339.8 565.2 L1340.0 566.6 L1340.3 565.8 L1340.5 565.8 L1340.8 566.8 L1341.0 566.2 L1341.3 565.4 L1341.5 565.7 L1341.8 566.4 L1342.0 565.4 L1342.3 566.4 L1342.5 565.8 L1342.8 566.1 L1343.0 565.0 L1343.3 565.6 L1343.5 565.3 L1343.8 565.6 L1344.0 566.2 L1344.3 565.0 L1344.5 565.5 L1344.8 565.6 L1345.0 566.4 L1345.3 566.6 L1345.5 565.8 L1345.8 565.3 L1346.0 565.3 L1346.3 566.2 L1346.5 566.7 L1346.8 565.9 L1347.0 565.2 L1347.3 566.6 L1347.5 565.5 L1347.8 566.6 L1348.0 566.3 L1348.3 566.8 L1348.5 566.3 L1348.8 566.2 L1349.0 565.0 L1349.3 565.0 L1349.5 566.6 L1349.8 566.3 L1350.0 565.0 L1350.3 566.5 L1350.5 566.3 L1350.8 566.1 L1351.0 566.7 L1351.3 566.4 L1351.5 566.1 L1351.8 566.2 L1352.0 565.0 L1352.3 566.4 L1352.5 566.5 L1352.8 565.1 L1353.0 566.0 L1353.3 565.3 L1353.5 565.7 L1353.8 565.4 L1354.0 566.3 L1354.3 566.6 L1354.5 565.4 L1354.8 566.0 L1355.0 565.8 L1355.3 565.6 L1355.5 565.4 L1355.8 566.4 L1356.0 566.2 L1356.3 565.1 L1356.5 565.9 L1356.8 566.4 L1357.0 565.7 L1357.3 566.4 L1357.5 565.4 L1357.8 566.9 L1358.0 565.3 L1358.3 565.8 L1358.5 566.2 L1358.8 565.1 L1359.0 566.4 L1359.3 566.5 L1359.5 566.8 L1359.8 565.8 L1360.0 565.4 L1360.3 565.6 L1360.5 566.1 L1360.8 565.3 L1361.0 566.7 L1361.3 566.3 L1361.5 565.6 L1361.8 565.0 L1362.0 565.7 L1362.3 565.6 L1362.5 565.4 L1362.8 566.1 L1363.0 565.1 L1363.3 565.5 L1363.5 566.3 L1363.8 566.2 L1364.0 565.3 L1364.3 566.2 L1364.5 566.6 L1364.8 565.2 L1365.0 565.9 L1365.3 565.9 L1365.5 565.6 L1365.8 565.1 L1366.0 566.7 L1366.3 566.3 L1366.5 566.8 L1366.8 566.1 L1367.0 565.9 L1367.3 565.2 L1367.5 565.6 L1367.8 565.8 L1368.0 566.1 L1368.3 565.8 L1368.5 566.4 L1368.8 565.2 L1369.0 565.4 L1369.3 565.3 L1369.5 566.6 L1369.8 565.6 L1370.0 565.4 L1370.3 565.9 L1370.5 565.1 L1370.8 565.1 L1371.0 565.5 L1371.3 565.3 L1371.5 565.6 L1371.8 565.2 L1372.0 566.7 L1372.3 565.5 L1372.5 565.5 L1372.8 565.7 L1373.0 566.4 L1373.3 566.8 L1373.5 565.7 L1373.8 565.3 L1374.0 566.4 L1374.3 566.5 L1374.5 566.5 L1374.8 566.7 L1375.0 565.6 L1375.3 565.0 L1375.5 565.3 L1375.8 566.2 L1376.0 565.5 L1376.3 566.8 L1376.5 565.3 L1376.8 566.3 L1377.0 566.9 L1377.3 565.7 L1377.5 566.7 L1377.8 566.4 L1378.0 566.8 L1378.3 566.0 L1378.5 565.8 L1378.8 565.3 L1379.0 566.9 L1379.3 565.3 L1379.5 566.7 L1379.8 566.5 L1380.0 565.7 L1380.3 566.3 L1380.5 566.3 L1380.8 565.8 L1381.0 566.5 L1381.3 565.3 L1381.5 566.5 L1381.8 565.3 L1382.0 565.3 L1382.3 565.9 L1382.5 566.9 L1382.8 565.4 L1383.0 566.9 L1383.3 565.9 L1383.5 566.1 L1383.8 566.8 L1384.0 565.7 L1384.3 565.5 L1384.5 565.8 L1384.8 566.1 L1385.0 565.9 L1385.3 565.8 L1385.5 566.5 L1385.8 565.2 L1386.0 564.9 L1386.3 565.3 L1386.5 565.0 L1386.8 566.3 L1387.0 565.0 L1387.3 566.8 L1387.5 566.0 L1387.8 566.7 L1388.0 566.0 L1388.3 565.6 L1388.5 565.5 L1388.8 566.0 L1389.0 566.3 L1389.3 566.6 L1389.5 566.1 L1389.8 566.4 L1390.0 566.5 L1390.3 565.5 L1390.5 565.9 L1390.8 566.1 L1391.0 566.5 L1391.3 565.5 L1391.5 566.5 L1391.8 566.4 L1392.0 565.8 L1392.3 565.5 L1392.5 565.0 L1392.8 565.4 L1393.0 565.0 L1393.3 565.1 L1393.5 565.5 L1393.8 565.5 L1394.0 566.8 L1394.3 566.5 L1394.5 566.9 L1394.8 565.2 L1395.0 565.5 L1395.3 565.7 L1395.5 566.4 L1395.8 566.2 L1396.0 566.6 L1396.3 565.7 L1396.5 565.0 L1396.8 566.3 L1397.0 566.8 L1397.3 566.6 L1397.5 566.2 L1397.8 565.1 L1398.0 565.3 L1398.3 566.0 L1398.5 566.7 L1398.8 566.7 L1399.0 566.6 L1399.3 565.4 L1399.5 566.0 L1399.8 565.0 L1400.0 565.1 L1400.3 565.3 L1400.5 566.0 L1400.8 565.3 L1401.0 566.7 L1401.3 566.7 L1401.5 565.8 L1401.8 565.9 L1402.0 566.5 L1402.3 566.4 L1402.5 566.9 L1402.8 565.1 L1403.0 565.5 L1403.3 565.0 L1403.5 565.0 L1403.8 566.1 L1404.0 565.5 L1404.3 566.2 L1404.5 565.3 L1404.8 565.3 L1405.0 566.7 L1405.3 566.9 L1405.5 566.5 L1405.8 565.8 L1406.0 566.2 L1406.3 566.9 L1406.5 565.3 L1406.8 565.4 L1407.0 566.0 L1407.3 566.9 L1407.5 565.2 L1407.8 565.9 L1408.0 566.8 L1408.3 566.3 L1408.5 565.7 L1408.8 565.2 L1409.0 566.0 L1409.3 565.7 L1409.5 566.5 L1409.8 566.5 L1410.0 565.1 L1410.3 566.2 L1410.5 566.7 L1410.8 565.8 L1411.0 566.7 L1411.3 566.5 L1411.5 566.0 L1411.8 565.8 L1412.0 565.7 L1412.3 565.5 L1412.5 566.1 L1412.8 566.8 L1413.0 565.5 L1413.3 566.8 L1413.5 566.0 L1413.8 566.1 L1414.0 565.6 L1414.3 565.5 L1414.5 566.5 L1414.8 565.6 L1415.0 565.6 L1415.3 566.0 L1415.5 566.7 L1415.8 565.1 L1416.0 565.7 L1416.3 566.8 L1416.5 566.5 L1416.8 565.0 L1417.0 566.5 L1417.3 566.2 L1417.5 565.4 L1417.8 565.3 L1418.0 565.7 L1418.3 565.5 L1418.5 566.9 L1418.8 566.7 L1419.0 565.0 L1419.3 565.3 L1419.5 566.9 L1419.8 566.8 L1420.0 566.5 L1420.3 565.1 L1420.5 566.5 L1420.8 565.6 L1421.0 565.1 L1421.3 565.7 L1421.5 565.1 L1421.8 566.4 L1422.0 566.6 L1422.3 566.9 L1422.5 565.4 L1422.8 566.7 L1423.0 565.0 L1423.3 565.5 L1423.5 566.6 L1423.8 565.3 L1424.0 566.6 L1424.3 565.9 L1424.5 566.7 L1424.8 565.4 L1425.0 565.2 L1425.3 565.1 L1425.5 566.9 L1425.8 565.2 L1426.0 565.8 L1426.3 565.3 L1426.5 565.9 L1426.8 565.7 L1427.0 565.7 L1427.3 565.3 L1427.5 566.8 L1427.8 566.8 L1428.0 565.8 L1428.3 566.4 L1428.5 566.1 L1428.8 566.9 L1429.0 565.4 L1429.3 566.9 L1429.5 565.3 L1429.8 565.3 L1430.0 566.0 L1430.3 566.7 L1430.5 565.6 L1430.8 566.5 L1431.0 566.1 L1431.3 566.7 L1431.5 565.0 L1431.8 565.8 L1432.0 566.2 L1432.3 566.7 L1432.5 565.5 L1432.8 565.2 L1433.0 565.2 L1433.3 566.7 L1433.5 566.2 L1433.8 566.3 L1434.0 565.4 L1434.3 566.6 L1434.5 565.7 L1434.8 565.0 L1435.0 565.4 L1435.3 566.9 L1435.5 566.8 L1435.8 566.7 L1436.0 565.6 L1436.3 565.7 L1436.5 565.9 L1436.8 566.0 L1437.0 566.1 L1437.3 565.7 L1437.5 565.6 L1437.8 565.1 L1438.0 565.5 L1438.3 565.3 L1438.5 565.1 L1438.8 565.3 L1439.0 565.5 L1439.3 566.9 L1439.5 565.6 L1439.8 565.2 L1440.0 566.1 L1440.3 565.2 L1440.5 566.6 L1440.8 565.1 L1441.0 566.1 L1441.3 565.5 L1441.5 566.4 L1441.8 566.3 L1442.0 566.2 L1442.3 566.3 L1442.5 566.7 L1442.8 566.1 L1443.0 565.0 L1443.3 565.6 L1443.5 565.1 L1443.8 565.4 L1444.0 565.3 L1444.3 564.9 L1444.5 565.4 L1444.8 566.4 L1445.0 566.4 L1445.3 566.1 L1445.5 566.9 L1445.8 566.5 L1446.0 565.2 L1446.3 565.1 L1446.5 566.3 L1446.8 565.4 L1447.0 565.4 L1447.3 565.2 L1447.5 565.3 L1447.8 565.9 L1448.0 566.7 L1448.3 565.3 L1448.5 566.3 L1448.8 565.7 L1449.0 566.2 L1449.3 565.9 L1449.5 565.0 L1449.8 566.6 L1450.0 565.9 L1450.3 565.6 L1450.5 565.9 L1450.8 565.1 L1451.0 566.1 L1451.3 565.1 L1451.5 565.6 L1451.8 565.0 L1452.0 566.8 L1452.3 566.5 L1452.5 566.4 L1452.8 565.1 L1453.0 566.9 L1453.3 566.4 L1453.5 565.5 L1453.8 565.0 L1454.0 566.6 L1454.3 566.1 L1454.5 565.6 L1454.8 565.6 L1455.0 565.4 L1455.3 565.4 L1455.5 566.4 L1455.8 566.4 L1456.0 566.9 L1456.3 565.6 L1456.5 566.5 L1456.8 566.4 L1457.0 565.0 L1457.3 565.7 L1457.5 565.8 L1457.8 565.6 L1458.0 565.7 L1458.3 565.5 L1458.5 566.3 L1458.8 566.8 L1459.0 566.8 L1459.3 566.9 L1459.5 566.2 L1459.8 566.7 L1460.0 566.7 L1460.3 565.9 L1460.5 565.0 L1460.8 565.6 L1461.0 566.4 L1461.3 565.4 L1461.5 566.6 L1461.8 566.7 L1462.0 566.3 L1462.3 566.1 L1462.5 565.6 L1462.8 566.0 L1463.0 565.5 L1463.3 566.7 L1463.5 565.1 L1463.8 566.3 L1464.0 565.3 L1464.3 566.9 L1464.5 565.3 L1464.8 566.5 L1465.0 565.2 L1465.3 565.3 L1465.5 565.6 L1465.8 566.4 L1466.0 566.9 L1466.3 566.6 L1466.5 565.1 L1466.8 566.6 L1467.0 565.6 L1467.3 565.8 L1467.5 565.6 L1467.8 566.6 L1468.0 566.6 L1468.3 566.7 L1468.5 565.0 L1468.8 566.2 L1469.0 565.6 L1469.3 565.8 L1469.5 566.5 L1469.8 566.8 L1470.0 566.9 L1470.3 565.2 L1470.5 566.7 L1470.8 565.0 L1471.0 566.2 L1471.3 565.5 L1471.5 566.7 L1471.8 565.4 L1472.0 566.4 L1472.3 566.2 L1472.5 565.9 L1472.8 566.7 L1473.0 566.4 L1473.3 565.3 L1473.5 566.4 L1473.8 566.2 L1474.0 565.4 L1474.3 566.5 L1474.5 566.5 L1474.8 566.5 L1475.0 566.2 L1475.3 566.2 L1475.5 565.7 L1475.8 566.0 L1476.0 565.2 L1476.3 566.8 L1476.5 565.6 L1476.8 565.3 L1477.0 566.5 L1477.3 566.9 L1477.5 566.1 L1477.8 566.7 L1478.0 566.0 L1478.3 565.5 L1478.5 566.7 L1478.8 566.7 L1479.0 566.0 L1479.3 566.6 L1479.5 566.5 L1479.8 566.1 L1480.0 566.7 L1480.3 566.8 L1480.5 566.2 L1480.8 566.0 L1481.0 565.1 L1481.3 565.8 L1481.5 566.8 L1481.8 566.5 L1482.0 565.4 L1482.3 565.8 L1482.5 565.2 L1482.8 565.0 L1483.0 565.2 L1483.3 566.7 L1483.5 565.0 L1483.8 565.9 L1484.0 566.5 L1484.3 566.6 L1484.5 565.2 L1484.8 566.5 L1485.0 566.8 L1485.3 566.4 L1485.5 565.1 L1485.8 566.0 L1486.0 565.5 L1486.3 566.8 L1486.5 566.0 L1486.8 566.3 L1487.0 566.5 L1487.3 565.6 L1487.5 566.2 L1487.8 566.7 L1488.0 565.0 L1488.3 566.0 L1488.5 566.6 L1488.8 566.9 L1489.0 565.6 L1489.3 565.9 L1489.5 566.9 L1489.8 566.0 L1490.0 565.5 L1490.3 565.9 L1490.5 566.5 L1490.8 565.9 L1491.0 565.7 L1491.3 565.6 L1491.5 566.6 L1491.8 565.3 L1492.0 565.0 L1492.3 565.5 L1492.5 565.2 L1492.8 566.2 L1493.0 565.1 L1493.3 566.6 L1493.5 566.5 L1493.8 565.7 L1494.0 565.1 L1494.3 566.8 L1494.5 566.5 L1494.8 566.9 L1495.0 566.1 L1495.3 566.7 L1495.5 566.6 L1495.8 565.4 L1496.0 565.8 L1496.3 565.1 L1496.5 566.1 L1496.8 565.6 L1497.0 566.9 L1497.3 565.0 L1497.5 566.5 L1497.8 566.0 L1498.0 565.9 L1498.3 565.0 L1498.5 566.0 L1498.8 565.0 L1499.0 565.7 L1499.3 566.5 L1499.5 565.3 L1499.8 566.5 L1500.0 564.9 L1500.3 566.0 L1500.5 566.5 L1500.8 565.0 L1501.0 566.3 L1501.3 566.1 L1501.5 566.3 L1501.8 565.6 L1502.0 566.9 L1502.3 566.2 L1502.5 566.6 L1502.8 565.3 L1503.0 566.9 L1503.3 565.7 L1503.5 566.4 L1503.8 566.0 L1504.0 565.8 L1504.3 565.5 L1504.5 566.7 L1504.8 566.5 L1505.0 566.7 L1505.3 565.0 L1505.5 566.6 L1505.8 566.7 L1506.0 565.9 L1506.3 565.8 L1506.5 565.2 L1506.8 566.8 L1507.0 566.5 L1507.3 566.6 L1507.5 565.8 L1507.8 566.0 L1508.0 566.1 L1508.3 565.2 L1508.5 565.6 L1508.8 565.2 L1509.0 565.0 L1509.3 566.4 L1509.5 565.1 L1509.8 566.1 L1510.0 566.8 L1510.3 565.1 L1510.5 566.7 L1510.8 566.9 L1511.0 566.4 L1511.3 566.4 L1511.5 565.0 L1511.8 565.2 L1512.0 566.1 L1512.3 565.9 L1512.5 565.2 L1512.8 565.3 L1513.0 565.6 L1513.3 565.9 L1513.5 566.7 L1513.8 566.4 L1514.0 565.6 L1514.3 565.8 L1514.5 565.3 L1514.8 565.1 L1515.0 565.0 L1515.3 566.6 L1515.5 566.8 L1515.8 565.1 L1516.0 565.8 L1516.3 566.6 L1516.5 565.6 L1516.8 566.4 L1517.0 566.5 L1517.3 566.2 L1517.5 565.9 L1517.8 565.6 L1518.0 566.8 L1518.3 565.5 L1518.5 565.7 L1518.8 566.0 L1519.0 565.6 L1519.3 565.3 L1519.5 566.9 L1519.8 566.0 L1520.0 565.6 L1520.3 565.5 L1520.5 565.6 L1520.8 566.6 L1521.0 565.0 L1521.3 565.4 L1521.5 566.5 L1521.8 566.1 L1522.0 565.0 L1522.3 566.5 L1522.5 566.1 L1522.8 565.0 L1523.0 565.1 L1523.3 566.5 L1523.5 565.5 L1523.8 566.2 L1524.0 565.6 L1524.3 565.4 L1524.5 566.7 L1524.8 566.5 L1525.0 566.5 L1525.3 566.4 L1525.5 566.9 L1525.8 566.7 L1526.0 566.1 L1526.3 566.1 L1526.5 566.8 L1526.8 565.8 L1527.0 565.1 L1527.3 565.8 L1527.5 566.2 L1527.8 565.5 L1528.0 566.1 L1528.3 566.6 L1528.5 566.0 L1528.8 566.9 L1529.0 565.6 L1529.3 566.6 L1529.5 566.2 L1529.8 565.0 L1530.0 565.4 L1530.3 565.3 L1530.5 565.7 L1530.8 565.7 L1531.0 565.5 L1531.3 565.0 L1531.5 566.5 L1531.8 565.4 L1532.0 566.3 L1532.3 566.4 L1532.5 565.3 L1532.8 565.7 L1533.0 565.2 L1533.3 565.2 L1533.5 565.8 L1533.8 566.5 L1534.0 566.9 L1534.3 565.9 L1534.5 565.5 L1534.8 566.4 L1535.0 566.8 L1535.3 566.9 L1535.5 566.6 L1535.8 565.5 L1536.0 566.9 L1536.3 566.5 L1536.5 566.4 L1536.8 565.5 L1537.0 565.0 L1537.3 566.9 L1537.5 566.7 L1537.8 565.1 L1538.0 565.0 L1538.3 566.6 L1538.5 566.3 L1538.8 565.9 L1539.0 566.3 L1539.3 566.1 L1539.5 566.0 L1539.8 566.4 L1540.0 566.8 L1540.3 566.8 L1540.5 566.6 L1540.8 566.8 L1541.0 565.7 L1541.3 565.5 L1541.5 566.4 L1541.8 565.4 L1542.0 565.5 L1542.3 566.3 L1542.5 566.0 L1542.8 566.6 L1543.0 565.1 L1543.3 565.8 L1543.5 566.8 L1543.8 566.6 L1544.0 565.6 L1544.3 566.2 L1544.5 565.5 L1544.8 566.5 L1545.0 565.3 L1545.3 565.3 L1545.5 566.7 L1545.8 565.8 L1546.0 566.6 L1546.3 565.5 L1546.5 565.3 L1546.8 565.4 L1547.0 566.5 L1547.3 566.8 L1547.5 565.6 L1547.8 565.8 L1548.0 566.7 L1548.3 566.6 L1548.5 565.8 L1548.8 566.7 L1549.0 565.7 L1549.3 566.5 L1549.5 566.4 L1549.8 566.1 L1550.0 565.9 L1550.3 565.5 L1550.5 566.9 L1550.8 565.5 L1551.0 566.5 L1551.3 566.4 L1551.5 565.7 L1551.8 565.6 L1552.0 565.7 L1552.3 565.1 L1552.5 566.5 L1552.8 566.3 L1553.0 565.6 L1553.3 566.4 L1553.5 566.6 L1553.8 566.5 L1554.0 565.4 L1554.3 565.3 L1554.5 565.5 L1554.8 565.0 L1555.0 565.3 L1555.3 566.3 L1555.5 566.3 L1555.8 565.5 L1556.0 566.8 L1556.3 565.7 L1556.5 566.8 L1556.8 566.8 L1557.0 565.9 L1557.3 566.6 L1557.5 565.1 L1557.8 565.2 L1558.0 566.0 L1558.3 566.5 L1558.5 566.7 L1558.8 565.9 L1559.0 565.9 L1559.3 566.2 L1559.5 565.5 L1559.8 565.9 L1560.0 565.4 L1560.3 566.7 L1560.5 566.8 L1560.8 566.2 L1561.0 566.0 L1561.3 566.4 L1561.5 565.6 L1561.8 566.5 L1562.0 566.3 L1562.3 566.0 L1562.5 565.5 L1562.8 565.4 L1563.0 566.2 L1563.3 566.0 L1563.5 565.1 L1563.8 565.1 L1564.0 565.7 L1564.3 566.7 L1564.5 566.0 L1564.8 565.7 L1565.0 566.4 L1565.3 566.9 L1565.5 565.0 L1565.8 565.1 L1566.0 566.7 L1566.3 566.0 L1566.5 565.7 L1566.8 566.3 L1567.0 566.8 L1567.3 565.4 L1567.5 565.4 L1567.8 566.1 L1568.0 566.8 L1568.3 566.1 L1568.5 566.7 L1568.8 565.0 L1569.0 566.8 L1569.3 566.4 L1569.5 565.4 L1569.8 566.7 L1570.0 566.7 L1570.3 566.8 L1570.5 566.6 L1570.8 565.9 L1571.0 565.3 L1571.3 566.6 L1571.5 566.6 L1571.8 565.4 L1572.0 566.1 L1572.3 566.3 L1572.5 566.7 L1572.8 566.5 L1573.0 565.0 L1573.3 566.7 L1573.5 566.4 L1573.8 565.5 L1574.0 565.2 L1574.3 565.1 L1574.5 566.0 L1574.8 565.0 L1575.0 565.7 L1575.3 566.4 L1575.5 566.0 L1575.8 565.5 L1576.0 565.5 L1576.3 566.7 L1576.5 566.5 L1576.8 565.0 L1577.0 566.7 L1577.3 565.3 L1577.5 566.3 L1577.8 566.4 L1578.0 566.4 L1578.3 566.0 L1578.5 565.0 L1578.8 566.6 L1579.0 565.2 L1579.3 566.3 L1579.5 566.6 L1579.8 565.4 L1580.0 566.3 L1580.3 566.6 L1580.5 566.1 L1580.8 565.3 L1581.0 565.2 L1581.3 565.8 L1581.5 566.9 L1581.8 565.4 L1582.0 565.7 L1582.3 565.1 L1582.5 565.0 L1582.8 566.3 L1583.0 565.2 L1583.3 565.3 L1583.5 566.4 L1583.8 566.2 L1584.0 566.2 L1584.3 566.2 L1584.5 566.2 L1584.8 566.7 L1585.0 566.5 L1585.3 565.1 L1585.5 566.1 L1585.8 565.7 L1586.0 565.2 L1586.3 565.4 L1586.5 566.4 L1586.8 565.1 L1587.0 565.3 L1587.3 565.0 L1587.5 565.5 L1587.8 565.4 L1588.0 565.3 L1588.3 566.4 L1588.5 565.6 L1588.8 566.2 L1589.0 565.3 L1589.3 566.7 L1589.5 565.9 L1589.8 566.3 L1590.0 565.3 L1590.3 566.2 L1590.5 565.2 L1590.8 565.2 L1591.0 565.2 L1591.3 566.7 L1591.5 565.1 L1591.8 565.4 L1592.0 565.6 L1592.3 565.6 L1592.5 566.8 L1592.8 565.2 L1593.0 565.8 L1593.3 566.0 L1593.5 566.3 L1593.8 565.4 L1594.0 565.4 L1594.3 565.2 L1594.5 566.5 L1594.8 566.3 L1595.0 566.4 L1595.3 566.7 L1595.5 566.3 L1595.8 566.9 L1596.0 565.3 L1596.3 566.5 L1596.5 566.8 L1596.8 566.8 L1597.0 565.5 L1597.3 566.5 L1597.5 566.0 L1597.8 566.1 L1598.0 565.3 L1598.3 565.0 L1598.5 566.3 L1598.8 565.7 L1599.0 565.1 L1599.3 566.0 L1599.5 565.1 L1599.8 565.5 L1600.0 566.3 L1600.3 565.2 L1600.5 565.8 L1600.8 566.7 L1601.0 565.8 L1601.3 565.3 L1601.5 565.9 L1601.8 566.0 L1602.0 566.1 L1602.3 565.2 L1602.5 565.6 L1602.8 566.5 L1603.0 566.2 L1603.3 566.2 L1603.5 565.0 L1603.8 565.5 L1604.0 566.7 L1604.3 565.1 L1604.5 566.9 L1604.8 565.8 L1605.0 566.1 L1605.3 565.5 L1605.5 566.1 L1605.8 566.7 L1606.0 565.9 L1606.3 565.3 L1606.5 565.3 L1606.8 566.2 L1607.0 566.5 L1607.3 565.4 L1607.5 565.3 L1607.8 566.5 L1608.0 565.1 L1608.3 564.9 L1608.5 566.0 L1608.8 566.1 L1609.0 565.4 L1609.3 565.0 L1609.5 566.4 L1609.8 566.2 L1610.0 566.1 L1610.3 565.2 L1610.5 566.3 L1610.8 565.5 L1611.0 565.6 L1611.3 565.2 L1611.5 566.2 L1611.8 564.4 L1612.0 564.3 L1612.3 565.1 L1612.5 564.5 L1612.8 565.6 L1613.0 564.0 L1613.3 564.6 L1613.5 564.0 L1613.8 563.6 L1614.0 564.5 L1614.3 563.1 L1614.5 564.5 L1614.8 564.7 L1615.0 563.4 L1615.3 562.2 L1615.5 561.9 L1615.8 561.5 L1616.0 562.3 L1616.3 561.0 L1616.5 561.5 L1616.8 562.2 L1617.0 560.7 L1617.3 559.9 L1617.5 560.6 L1617.8 559.8 L1618.0 560.3 L1618.3 559.9 L1618.5 559.2 L1618.8 558.6 L1619.0 558.5 L1619.3 559.2 L1619.5 559.2 L1619.8 557.9 L1620.0 556.6 L1620.3 556.3 L1620.5 557.5 L1620.8 557.3 L1621.0 556.4 L1621.3 557.3 L1621.5 555.9 L1621.8 554.9 L1622.0 557.0 L1622.3 555.8 L1622.5 555.4 L1622.8 555.3 L1623.0 555.4 L1623.3 555.5 L1623.5 556.8 L1623.8 555.2 L1624.0 555.0 L1624.3 557.6 L1624.5 555.1 L1624.8 556.7 L1625.0 557.8 L1625.3 558.0 L1625.5 556.0 L1625.8 556.4 L1626.0 558.1 L1626.3 557.4 L1626.5 557.0 L1626.8 556.1 L1627.0 558.2 L1627.3 557.1 L1627.5 558.7 L1627.8 559.0 L1628.0 559.3 L1628.3 558.8 L1628.5 558.4 L1628.8 559.4 L1629.0 560.0 L1629.3 560.0 L1629.5 560.5 L1629.8 560.4 L1630.0 560.2 L1630.3 559.9 L1630.5 560.9 L1630.8 560.3 L1631.0 560.6 L1631.3 559.4 L1631.5 560.8 L1631.8 559.8 L1632.0 561.1 L1632.3 561.9 L1632.5 561.1 L1632.8 562.3 L1633.0 562.4 L1633.3 562.8 L1633.5 561.4 L1633.8 560.9 L1634.0 562.4 L1634.3 562.6 L1634.5 562.5 L1634.8 562.8 L1635.0 562.2 L1635.3 563.0 L1635.5 563.6 L1635.8 562.1 L1636.0 562.9 L1636.3 564.3 L1636.5 562.4 L1636.8 562.8 L1637.0 563.7 L1637.3 563.2 L1637.5 562.7 L1637.8 563.9 L1638.0 563.9 L1638.3 564.3 L1638.5 563.8 L1638.8 563.7 L1639.0 563.6 L1639.3 563.2 L1639.5 565.0 L1639.8 564.6 L1640.0 563.6 L1640.3 563.8 L1640.5 564.3 L1640.8 564.2 L1641.0 565.0 L1641.3 563.8 L1641.5 564.7 L1641.8 565.0 L1642.0 565.6 L1642.3 565.8 L1642.5 564.2 L1642.8 564.4 L1643.0 566.1 L1643.3 565.5 L1643.5 565.2 L1643.8 565.3 L1644.0 565.6 L1644.3 564.5 L1644.5 565.7 L1644.8 565.3 L1645.0 564.6 L1645.3 565.2 L1645.5 565.6 L1645.8 565.9 L1646.0 565.8 L1646.3 565.4 L1646.5 565.0 L1646.8 566.1 L1647.0 565.9 L1647.3 565.9 L1647.5 566.0 L1647.8 564.9 L1648.0 565.7 L1648.3 566.2 L1648.5 566.1 L1648.8 565.1 L1649.0 566.5 L1649.3 565.4 L1649.5 566.8 L1649.8 566.4 L1650.0 566.7 L1650.3 565.2 L1650.5 566.6 L1650.8 566.4 L1651.0 566.8 L1651.3 566.4 L1651.5 565.4 L1651.8 565.4 L1652.0 565.1 L1652.3 565.0 L1652.5 565.8 L1652.8 565.1 L1653.0 566.7 L1653.3 565.1 L1653.5 566.0 L1653.8 566.5 L1654.0 565.4 L1654.3 565.2 L1654.5 566.2 L1654.8 566.7 L1655.0 565.2 L1655.3 565.4 L1655.5 565.7 L1655.8 565.0 L1656.0 566.9 L1656.3 566.8 L1656.5 566.7 L1656.8 566.9 L1657.0 565.5 L1657.3 565.7 L1657.5 566.7 L1657.8 566.6 L1658.0 566.6 L1658.3 565.7 L1658.5 565.6 L1658.8 565.0 L1659.0 566.2 L1659.3 565.0 L1659.5 566.1 L1659.8 566.2 L1660.0 566.4 L1660.3 566.5 L1660.5 565.0 L1660.8 564.9 L1661.0 565.5 L1661.3 566.6 L1661.5 566.6 L1661.8 566.6 L1662.0 566.2 L1662.3 565.5 L1662.5 566.8 L1662.8 565.9 L1663.0 565.6 L1663.3 566.9 L1663.5 566.1 L1663.8 565.4 L1664.0 565.8 L1664.3 566.0 L1664.5 565.2 L1664.8 565.7 L1665.0 566.3 L1665.3 566.1 L1665.5 565.0 L1665.8 565.2 L1666.0 565.1 L1666.3 565.8 L1666.5 566.7 L1666.8 566.6 L1667.0 566.2 L1667.3 565.6 L1667.5 566.9 L1667.8 565.3 L1668.0 565.4 L1668.3 565.9 L1668.5 566.9 L1668.8 565.3 L1669.0 566.1 L1669.3 565.6 L1669.5 565.8 L1669.8 565.5 L1670.0 566.1 L1670.3 565.0 L1670.5 565.0 L1670.8 565.1 L1671.0 565.7 L1671.3 566.3 L1671.5 566.2 L1671.8 566.4 L1672.0 565.1 L1672.3 565.4 L1672.5 565.4 L1672.8 565.3 L1673.0 565.0 L1673.3 565.6 L1673.5 566.3 L1673.8 565.4 L1674.0 566.4 L1674.3 565.7 L1674.5 566.6 L1674.8 565.2 L1675.0 566.0 L1675.3 566.4 L1675.5 565.1 L1675.8 566.8 L1676.0 565.1 L1676.3 565.4 L1676.5 566.6 L1676.8 565.4 L1677.0 565.8 L1677.3 565.1 L1677.5 565.8 L1677.8 566.1 L1678.0 565.1 L1678.3 566.8 L1678.5 565.4 L1678.8 566.7 L1679.0 566.4 L1679.3 566.7 L1679.5 565.2 L1679.8 566.1 L1680.0 565.5 L1680.3 566.4 L1680.5 565.5 L1680.8 565.6 L1681.0 566.7 L1681.3 565.9 L1681.5 565.5 L1681.8 566.5 L1682.0 565.6 L1682.3 566.4 L1682.5 566.2 L1682.8 565.1 L1683.0 565.1 L1683.3 564.9 L1683.5 566.1 L1683.8 565.8 L1684.0 565.3 L1684.3 565.4 L1684.5 566.0 L1684.8 565.2 L1685.0 566.1 L1685.3 565.0 L1685.5 566.0 L1685.8 566.7 L1686.0 565.4 L1686.3 566.6 L1686.5 565.6 L1686.8 566.8 L1687.0 565.0 L1687.3 565.9 L1687.5 565.5 L1687.8 566.7 L1688.0 565.7 L1688.3 566.2 L1688.5 566.4 L1688.8 565.3 L1689.0 566.9 L1689.3 566.0 L1689.5 566.8 L1689.8 565.2 L1690.0 565.2 L1690.3 566.9 L1690.5 566.0 L1690.8 566.0 L1691.0 565.5 L1691.3 565.5 L1691.5 566.3 L1691.8 565.1 L1692.0 566.6 L1692.3 566.7 L1692.5 565.3 L1692.8 566.7 L1693.0 566.6 L1693.3 565.9 L1693.5 566.3 L1693.8 566.6 L1694.0 565.1 L1694.3 566.0 L1694.5 565.4 L1694.8 566.4 L1695.0 565.1 L1695.3 566.5 L1695.5 565.1 L1695.8 565.7 L1696.0 565.0 L1696.3 565.4 L1696.5 565.7 L1696.8 565.9 L1697.0 565.2 L1697.3 566.0 L1697.5 566.7 L1697.8 565.1 L1698.0 565.3 L1698.3 565.6 L1698.5 565.4 L1698.8 566.5 L1699.0 566.0 L1699.3 565.3 L1699.5 565.0 L1699.8 565.1 L1700.0 566.6 L1700.3 565.6 L1700.5 565.8 L1700.8 566.1 L1701.0 566.6 L1701.3 566.7 L1701.5 566.0 L1701.8 566.0 L1702.0 566.4 L1702.3 566.2 L1702.5 565.8 L1702.8 565.4 L1703.0 565.8 L1703.3 566.6 L1703.5 565.2 L1703.8 566.2 L1704.0 565.0 L1704.3 565.0 L1704.5 566.7 L1704.8 565.8 L1705.0 565.0 L1705.3 566.2 L1705.5 565.8 L1705.8 566.3 L1706.0 566.9 L1706.3 566.5 L1706.5 566.7 L1706.8 566.4 L1707.0 565.7 L1707.3 565.8 L1707.5 565.0 L1707.8 565.6 L1708.0 566.2 L1708.3 565.0 L1708.5 565.7 L1708.8 565.9 L1709.0 565.2 L1709.3 565.6 L1709.5 566.2 L1709.8 565.7 L1710.0 566.3 L1710.3 565.0 L1710.5 566.4 L1710.8 565.0 L1711.0 566.8 L1711.3 566.9 L1711.5 565.8 L1711.8 566.5 L1712.0 565.9 L1712.3 566.7 L1712.5 565.3 L1712.8 565.6 L1713.0 565.6 L1713.3 565.1 L1713.5 565.0 L1713.8 565.6 L1714.0 565.5 L1714.3 566.9 L1714.5 566.8 L1714.8 566.1 L1715.0 565.0 L1715.3 566.3 L1715.5 565.8 L1715.8 566.9 L1716.0 566.1 L1716.3 565.1 L1716.5 565.8 L1716.8 565.3 L1717.0 566.9 L1717.3 566.5 L1717.5 566.6 L1717.8 565.3 L1718.0 566.7 L1718.3 565.1 L1718.5 566.4 L1718.8 565.2 L1719.0 565.9 L1719.3 566.3 L1719.5 565.0 L1719.8 566.1 L1720.0 565.5 L1720.3 566.8 L1720.5 565.3 L1720.8 565.0 L1721.0 566.7 L1721.3 565.4 L1721.5 566.4 L1721.8 566.6 L1722.0 566.2 L1722.3 565.6 L1722.5 565.0 L1722.8 564.9 L1723.0 564.9 L1723.3 565.7 L1723.5 565.6 L1723.8 566.6 L1724.0 565.5 L1724.3 565.8 L1724.5 566.2 L1724.8 565.1 L1725.0 566.4 L1725.3 566.7 L1725.5 566.6 L1725.8 566.6 L1726.0 565.8 L1726.3 565.3 L1726.5 566.6 L1726.8 565.9 L1727.0 565.8 L1727.3 565.8 L1727.5 566.1 L1727.8 565.8 L1728.0 566.9 L1728.3 566.8 L1728.5 566.1 L1728.8 566.5 L1729.0 565.4 L1729.3 566.5 L1729.5 565.3 L1729.8 566.5 L1730.0 566.8 L1730.3 566.0 L1730.5 566.2 L1730.8 566.3 L1731.0 565.4 L1731.3 566.5 L1731.5 565.6 L1731.8 565.3 L1732.0 566.0 L1732.3 565.9 L1732.5 565.1 L1732.8 565.7 L1733.0 566.6 L1733.3 566.8 L1733.5 566.8 L1733.8 566.3 L1734.0 566.8 L1734.3 565.6 L1734.5 566.1 L1734.8 566.3 L1735.0 565.9 L1735.3 565.1 L1735.5 566.4 L1735.8 566.6 L1736.0 566.3 L1736.3 566.3 L1736.5 565.1 L1736.8 565.5 L1737.0 566.1 L1737.3 566.6 L1737.5 566.8 L1737.8 566.7 L1738.0 565.2 L1738.3 565.6 L1738.5 566.6 L1738.8 565.7 L1739.0 566.8 L1739.3 565.9 L1739.5 566.3 L1739.8 566.7 L1740.0 565.5 L1740.3 565.5 L1740.5 565.9 L1740.8 566.6 L1741.0 565.6 L1741.3 566.1 L1741.5 565.6 L1741.8 566.8 L1742.0 565.1 L1742.3 566.9 L1742.5 566.5 L1742.8 566.1 L1743.0 566.5 L1743.3 566.8 L1743.5 565.6 L1743.8 564.9 L1744.0 566.3 L1744.3 566.4 L1744.5 565.6 L1744.8 566.5 L1745.0 566.1 L1745.3 565.6 L1745.5 566.1 L1745.8 566.6 L1746.0 566.8 L1746.3 565.9 L1746.5 565.0 L1746.8 565.1 L1747.0 566.7 L1747.3 565.9 L1747.5 566.0 L1747.8 566.5 L1748.0 565.6 L1748.3 565.9 L1748.5 565.3 L1748.8 566.4 L1749.0 565.1 L1749.3 565.3 L1749.5 566.0 L1749.8 566.7 L1750.0 566.0 L1750.3 566.7 L1750.5 565.6 L1750.8 565.5 L1751.0 565.8 L1751.3 565.0 L1751.5 566.8 L1751.8 565.5 L1752.0 565.3 L1752.3 566.7 L1752.5 566.3 L1752.8 566.8 L1753.0 565.8 L1753.3 565.5 L1753.5 566.2 L1753.8 565.5 L1754.0 566.2 L1754.3 565.5 L1754.5 566.4 L1754.8 565.0 L1755.0 566.1 L1755.3 566.9 L1755.5 566.8 L1755.8 565.5 L1756.0 565.2 L1756.3 565.7 L1756.5 566.6 L1756.8 565.2 L1757.0 565.5 L1757.3 566.7 L1757.5 566.2 L1757.8 565.6 L1758.0 566.9 L1758.3 566.9 L1758.5 566.2 L1758.8 565.2 L1759.0 564.9 L1759.3 566.3 L1759.5 565.1 L1759.8 565.4 L1760.0 565.2 L1760.3 565.8 L1760.5 565.0 L1760.8 565.6 L1761.0 565.0 L1761.3 565.8 L1761.5 566.5 L1761.8 565.9 L1762.0 566.0 L1762.3 566.3 L1762.5 566.2 L1762.8 565.9 L1763.0 565.8 L1763.3 566.5 L1763.5 566.4 L1763.8 565.9 L1764.0 565.9 L1764.3 566.1 L1764.5 565.6 L1764.8 566.6 L1765.0 565.9 L1765.3 566.4 L1765.5 565.4 L1765.8 565.5 L1766.0 565.4 L1766.3 565.9 L1766.5 566.4 L1766.8 565.1 L1767.0 565.9 L1767.3 566.2 L1767.5 566.4 L1767.8 566.1 L1768.0 565.5 L1768.3 565.3 L1768.5 566.0 L1768.8 565.5 L1769.0 566.5 L1769.3 566.0 L1769.5 566.2 L1769.8 566.3 L1770.0 566.2 L1770.3 565.4 L1770.5 565.5 L1770.8 566.5 L1771.0 566.5 L1771.3 565.4 L1771.5 565.6 L1771.8 565.6 L1772.0 565.7 L1772.3 565.5 L1772.5 566.4 L1772.8 566.8 L1773.0 566.2 L1773.3 566.9 L1773.5 565.0 L1773.8 565.9 L1774.0 565.6 L1774.3 565.0 L1774.5 565.3 L1774.8 566.5 L1775.0 566.3 L1775.3 566.7 L1775.5 565.3 L1775.8 565.5 L1776.0 566.0 L1776.3 566.2 L1776.5 566.4 L1776.8 566.0 L1777.0 565.5 L1777.3 565.1 L1777.5 565.2 L1777.8 565.2 L1778.0 566.1 L1778.3 566.1 L1778.5 566.3 L1778.8 565.0 L1779.0 566.6 L1779.3 566.6 L1779.5 566.4 L1779.8 565.1 L1780.0 565.2 L1780.3 566.3 L1780.5 565.2 L1780.8 565.2 L1781.0 566.1 L1781.3 566.6 L1781.5 565.4 L1781.8 566.2 L1782.0 566.7 L1782.3 565.1 L1782.5 566.1 L1782.8 566.1 L1783.0 565.7 L1783.3 566.4 L1783.5 566.9 L1783.8 566.2 L1784.0 566.2 L1784.3 566.9 L1784.5 566.2 L1784.8 565.4 L1785.0 566.3 L1785.3 565.6 L1785.5 565.7 L1785.8 566.6 L1786.0 566.9 L1786.3 565.6 L1786.5 565.7 L1786.8 566.3 L1787.0 566.5 L1787.3 565.2 L1787.5 565.1 L1787.8 566.5 L1788.0 565.8 L1788.3 565.8 L1788.5 566.3 L1788.8 566.9 L1789.0 566.3 L1789.3 565.6 L1789.5 565.7 L1789.8 565.9 L1790.0 566.7 L1790.3 566.5 L1790.5 566.3 L1790.8 566.1 L1791.0 566.2 L1791.3 565.1 L1791.5 566.7 L1791.8 565.0 L1792.0 566.5 L1792.3 565.2 L1792.5 566.5 L1792.8 565.8 L1793.0 566.2 L1793.3 566.9 L1793.5 565.3 L1793.8 565.3 L1794.0 566.4 L1794.3 565.4 L1794.5 566.0 L1794.8 565.0 L1795.0 566.8 L1795.3 566.2 L1795.5 566.5 L1795.8 565.7 L1796.0 565.4 L1796.3 565.3 L1796.5 565.8 L1796.8 566.2 L1797.0 565.3 L1797.3 566.7 L1797.5 566.4 L1797.8 565.4 L1798.0 566.1 L1798.3 565.0 L1798.5 566.8 L1798.8 566.0 L1799.0 566.5 L1799.3 566.9 L1799.5 566.8 L1799.8 566.8 L1800.0 566.2 L1800.3 566.1 L1800.5 565.9 L1800.8 566.4 L1801.0 565.5 L1801.3 565.9 L1801.5 565.0 L1801.8 566.6 L1802.0 565.9 L1802.3 565.9 L1802.5 566.2 L1802.8 565.2 L1803.0 566.5 L1803.3 565.2 L1803.5 566.2 L1803.8 566.3 L1804.0 565.7 L1804.3 565.8 L1804.5 566.4 L1804.8 566.8 L1805.0 565.0 L1805.3 566.2 L1805.5 566.7 L1805.8 565.6 L1806.0 565.9 L1806.3 566.3 L1806.5 566.3 L1806.8 565.2 L1807.0 566.3 L1807.3 566.1 L1807.5 565.0 L1807.8 566.2 L1808.0 566.1 L1808.3 566.6 L1808.5 565.6 L1808.8 565.6 L1809.0 566.0 L1809.3 566.1 L1809.5 566.5 L1809.8 565.4 L1810.0 566.0 L1810.3 565.3 L1810.5 566.2 L1810.8 565.5 L1811.0 566.9 L1811.3 566.5 L1811.5 565.0 L1811.8 565.6 L1812.0 565.6 L1812.3 565.9 L1812.5 566.0 L1812.8 566.5 L1813.0 566.6 L1813.3 565.6 L1813.5 565.5 L1813.8 566.4 L1814.0 565.6 L1814.3 566.7 L1814.5 565.7 L1814.8 566.6 L1815.0 565.9 L1815.3 566.3 L1815.5 565.8 L1815.8 566.7 L1816.0 566.0 L1816.3 565.7 L1816.5 566.7 L1816.8 566.3 L1817.0 565.6 L1817.3 565.8 L1817.5 565.7 L1817.8 565.4 L1818.0 565.8 L1818.3 566.5 L1818.5 566.1 L1818.8 565.3 L1819.0 565.8 L1819.3 565.4 L1819.5 566.2 L1819.8 566.0 L1820.0 565.0 L1820.3 565.3 L1820.5 565.6 L1820.8 566.7 L1821.0 565.7 L1821.3 566.9 L1821.5 565.1 L1821.8 565.0 L1822.0 565.5 L1822.3 566.4 L1822.5 565.2 L1822.8 566.6 L1823.0 565.3 L1823.3 565.9 L1823.5 566.9 L1823.8 565.2 L1824.0 566.1 L1824.3 565.3 L1824.5 565.6 L1824.8 565.9 L1825.0 565.2 L1825.3 566.5 L1825.5 565.1 L1825.8 566.3 L1826.0 566.9 L1826.3 566.3 L1826.5 566.8 L1826.8 566.8 L1827.0 565.7 L1827.3 566.7 L1827.5 566.6" fill="none" stroke="#000" stroke-width="1.25" stroke-linejoin="round"/><g font-family="Liberation Sans" font-size="14" fill="#0a0a0a" text-anchor="middle"><text x="482" y="515">3.49</text><text x="500" y="534">4.38</text><text x="537" y="535">5.37</text><text x="564" y="449">8.13</text><text x="596" y="536">9.61</text><text x="636" y="550">11.05</text><text x="682" y="558">11.93</text><text x="731" y="557">16.91</text><text x="778" y="548">18.72</text><text x="823" y="546">20.12</text><text x="895" y="544">23.48</text><text x="926" y="525">24.93</text><text x="979" y="551">27.34</text><text x="1025" y="215">29.48</text><text x="1063" y="554">30.31</text><text x="1109" y="559">33.12</text><text x="1155" y="560">34.53</text><text x="1230" y="560">39.70</text><text x="1275" y="560">41.13</text><text x="1321" y="560">42.14</text><text x="1402" y="559">47.03</text><text x="1486" y="559">50.87</text><text x="1532" y="560">52.30</text><text x="1577" y="560">55.34</text><text x="1621" y="551">57.12</text><text x="1665" y="557">57.60</text><text x="1713" y="559">61.53</text><text x="1759" y="558">63.48</text><text x="1806" y="559">66.23</text></g><g font-family="Liberation Sans" font-size="14" fill="#111"><text x="1828" y="215">NL:</text><text x="1828" y="231">3.40E5</text><text x="1828" y="250">TIC</text><text x="1861" y="250">MS</text><text x="1828" y="266">coke60</text></g></svg>
<div style="position:absolute;left:325px;top:574px;width:1578px;height:456px;overflow:hidden">
<div style="position:absolute;left:0px;top:0px;width:1578px;height:456px;background:linear-gradient(90deg,#0831d9 0px,#0831d9 1574px,#1c3fc8 1574px,#0a2aa8 1576px,#1a38c0 1578px);border-top-right-radius:7px"></div>
<div style="position:absolute;left:0px;top:0px;width:1578px;height:30px;border-top-right-radius:7px;background:linear-gradient(#3d8ffa 0px,#1e6ff2 2px,#0b5fec 4px,#0355e6 8px,#0052e4 14px,#0055eb 20px,#0a5ff0 24px,#0050e0 27px,#0040cc 30px)"></div>
<svg style="position:absolute;left:2px;top:9px" width="16" height="17"><path d="M1 1h10l4 4v11H1z" fill="#e8f0e0" stroke="#304030"/><path d="M3 13l3-5l3 3l3-5" stroke="#40a040" fill="none"/><path d="M3 3h6" stroke="#90a090"/></svg>
<div class="t" style="left:18px;top:10px;font-weight:bold;font-size:13px;color:#fff;text-shadow:1px 1px 0 #0a2a8a">LabCoatz60min100c.RAW</div>
<div style="position:absolute;left:1505px;top:6px;width:21px;height:21px;border:1px solid #fff;border-radius:3px;background:linear-gradient(135deg,#6fa0ff 0%,#3a78f2 35%,#2a5fe0 100%);box-shadow:inset 0 0 0 1px rgba(255,255,255,0.25)"><div style="position:absolute;left:5px;top:13px;width:7px;height:3px;background:#fff"></div></div>
<div style="position:absolute;left:1528px;top:6px;width:21px;height:21px;border:1px solid #fff;border-radius:3px;background:linear-gradient(135deg,#6fa0ff 0%,#3a78f2 35%,#2a5fe0 100%);box-shadow:inset 0 0 0 1px rgba(255,255,255,0.25)"><div style="position:absolute;left:4px;top:4px;width:11px;height:11px;border:1px solid #fff;border-top-width:3px"></div></div>
<div style="position:absolute;left:1551px;top:6px;width:21px;height:21px;border:1px solid #fff;border-radius:3px;background:linear-gradient(135deg,#f0a080 0%,#e2603a 35%,#cf4a25 100%);box-shadow:inset 0 0 0 1px rgba(255,255,255,0.25)"><svg style="position:absolute;left:3px;top:3px" width="13" height="13"><path d="M2 2L11 11M11 2L2 11" stroke="#fff" stroke-width="2.2"/></svg></div>
<div style="position:absolute;left:0px;top:30px;width:1574px;height:426px;background:#fff"></div>
<div class="t" style="left:1px;top:35px;font-size:16px;color:#36368a">C:\Xcalibur\...\LabCoatz60min100c</div>
<div class="t" style="left:480px;top:35px;font-size:16px;color:#36368a">8/23/2025 2:47:26 PM</div>
<div style="position:absolute;left:0px;top:70px;width:1572px;height:2px;background:#2d2d2d"></div>
<div style="position:absolute;left:0px;top:72px;width:1572px;height:1px;background:#fff"></div>
<div style="position:absolute;left:2px;top:73px;width:1570px;height:2px;background:#e7e4d4"></div>
<div style="position:absolute;left:1568px;top:73px;width:3px;height:383px;background:#ece9d8"></div>
<div style="position:absolute;left:2px;top:73px;width:1px;height:383px;background:#e7e4d4"></div>
<div style="position:absolute;left:1548px;top:76px;width:19px;height:19px;background:#7ee838;border-top:1px solid #c8c4b0;border-left:1px solid #c8c4b0"><svg style="position:absolute;left:2px;top:2px" width="15" height="15"><ellipse cx="7.5" cy="7.5" rx="6" ry="5" fill="#222" transform="rotate(-30 7.5 7.5)"/><circle cx="8.5" cy="6" r="2.6" fill="#f0f0f0"/><path d="M3 12l2-2" stroke="#000"/><circle cx="5" cy="9" r="1.5" fill="#a080c0"/></svg></div>
</div>
<svg style="position:absolute;left:0;top:0" width="1919" height="1030" viewBox="0 0 1919 1030"><text x="331" y="664" font-family="Liberation Sans" font-size="12" fill="#111">RT:</text><text x="354" y="664" font-family="Liberation Sans" font-size="12" fill="#2e2e8a">0.00 - 66.70</text><rect x="378" y="668" width="1450" height="313" rx="3" fill="#f0f0f0" stroke="#d4d4d4" stroke-width="1"/><path d="M368.2 980.7H376.2 M371.2 974.8H376.2 M371.2 968.8H376.2 M371.2 962.9H376.2 M371.2 956.9H376.2 M368.2 951.0H376.2 M371.2 945.0H376.2 M371.2 939.1H376.2 M371.2 933.1H376.2 M371.2 927.2H376.2 M368.2 921.2H376.2 M371.2 915.3H376.2 M371.2 909.3H376.2 M371.2 903.4H376.2 M371.2 897.4H376.2 M368.2 891.5H376.2 M371.2 885.5H376.2 M371.2 879.6H376.2 M371.2 873.6H376.2 M371.2 867.7H376.2 M368.2 861.7H376.2 M371.2 855.8H376.2 M371.2 849.8H376.2 M371.2 843.9H376.2 M371.2 837.9H376.2 M368.2 832.0H376.2 M371.2 826.1H376.2 M371.2 820.1H376.2 M371.2 814.2H376.2 M371.2 808.2H376.2 M368.2 802.3H376.2 M371.2 796.3H376.2 M371.2 790.4H376.2 M371.2 784.4H376.2 M371.2 778.5H376.2 M368.2 772.5H376.2 M371.2 766.6H376.2 M371.2 760.6H376.2 M371.2 754.7H376.2 M371.2 748.7H376.2 M368.2 742.8H376.2 M371.2 736.8H376.2 M371.2 730.9H376.2 M371.2 724.9H376.2 M371.2 719.0H376.2 M368.2 713.0H376.2 M371.2 707.1H376.2 M371.2 701.1H376.2 M371.2 695.2H376.2 M371.2 689.2H376.2 M368.2 683.3H376.2" stroke="#000" stroke-width="1.3"/><g font-family="Liberation Sans" font-size="12" fill="#0a0a0a"><text x="366.2" y="985.0" text-anchor="end">0</text><text x="366.2" y="955.3" text-anchor="end">10</text><text x="366.2" y="925.5" text-anchor="end">20</text><text x="366.2" y="895.8" text-anchor="end">30</text><text x="366.2" y="866.1" text-anchor="end">40</text><text x="366.2" y="836.3" text-anchor="end">50</text><text x="366.2" y="806.6" text-anchor="end">60</text><text x="366.2" y="776.8" text-anchor="end">70</text><text x="366.2" y="747.1" text-anchor="end">80</text><text x="366.2" y="717.4" text-anchor="end">90</text><text x="366.2" y="687.6" text-anchor="end">100</text></g><path d="M376.2 682V981" stroke="#000" stroke-width="2"/><text transform="translate(343 832) rotate(-90)" font-family="Liberation Sans" font-size="12.5" fill="#111" text-anchor="middle">Relative Abundance</text><path d="M376 981H1828" stroke="#000" stroke-width="2"/><path d="M376.2 981V990 M387.1 981V986 M397.9 981V986 M408.8 981V986 M419.7 981V990 M430.6 981V986 M441.4 981V986 M452.3 981V986 M463.2 981V990 M474.0 981V986 M484.9 981V986 M495.8 981V986 M506.7 981V990 M517.5 981V986 M528.4 981V986 M539.3 981V986 M550.1 981V990 M561.0 981V986 M571.9 981V986 M582.8 981V986 M593.6 981V990 M604.5 981V986 M615.4 981V986 M626.2 981V986 M637.1 981V990 M648.0 981V986 M658.9 981V986 M669.7 981V986 M680.6 981V990 M691.5 981V986 M702.3 981V986 M713.2 981V986 M724.1 981V990 M735.0 981V986 M745.8 981V986 M756.7 981V986 M767.6 981V990 M778.4 981V986 M789.3 981V986 M800.2 981V986 M811.1 981V990 M821.9 981V986 M832.8 981V986 M843.7 981V986 M854.5 981V990 M865.4 981V986 M876.3 981V986 M887.2 981V986 M898.0 981V990 M908.9 981V986 M919.8 981V986 M930.6 981V986 M941.5 981V990 M952.4 981V986 M963.3 981V986 M974.1 981V986 M985.0 981V990 M995.9 981V986 M1006.7 981V986 M1017.6 981V986 M1028.5 981V990 M1039.4 981V986 M1050.2 981V986 M1061.1 981V986 M1072.0 981V990 M1082.8 981V986 M1093.7 981V986 M1104.6 981V986 M1115.5 981V990 M1126.3 981V986 M1137.2 981V986 M1148.1 981V986 M1158.9 981V990 M1169.8 981V986 M1180.7 981V986 M1191.6 981V986 M1202.4 981V990 M1213.3 981V986 M1224.2 981V986 M1235.0 981V986 M1245.9 981V990 M1256.8 981V986 M1267.7 981V986 M1278.5 981V986 M1289.4 981V990 M1300.3 981V986 M1311.1 981V986 M1322.0 981V986 M1332.9 981V990 M1343.8 981V986 M1354.6 981V986 M1365.5 981V986 M1376.4 981V990 M1387.2 981V986 M1398.1 981V986 M1409.0 981V986 M1419.9 981V990 M1430.7 981V986 M1441.6 981V986 M1452.5 981V986 M1463.3 981V990 M1474.2 981V986 M1485.1 981V986 M1496.0 981V986 M1506.8 981V990 M1517.7 981V986 M1528.6 981V986 M1539.5 981V986 M1550.3 981V990 M1561.2 981V986 M1572.1 981V986 M1582.9 981V986 M1593.8 981V990 M1604.7 981V986 M1615.6 981V986 M1626.4 981V986 M1637.3 981V990 M1648.2 981V986 M1659.0 981V986 M1669.9 981V986 M1680.8 981V990 M1691.7 981V986 M1702.5 981V986 M1713.4 981V986 M1724.3 981V990 M1735.1 981V986 M1746.0 981V986 M1756.9 981V986 M1767.8 981V990 M1778.6 981V986 M1789.5 981V986 M1800.4 981V986 M1811.2 981V990 M1822.1 981V986" stroke="#000" stroke-width="1.3"/><g font-family="Liberation Sans" font-size="12" fill="#111" text-anchor="middle"><text x="376.2" y="1002">0</text><text x="419.7" y="1002">2</text><text x="463.2" y="1002">4</text><text x="506.7" y="1002">6</text><text x="550.1" y="1002">8</text><text x="593.6" y="1002">10</text><text x="637.1" y="1002">12</text><text x="680.6" y="1002">14</text><text x="724.1" y="1002">16</text><text x="767.6" y="1002">18</text><text x="811.1" y="1002">20</text><text x="854.5" y="1002">22</text><text x="898.0" y="1002">24</text><text x="941.5" y="1002">26</text><text x="985.0" y="1002">28</text><text x="1028.5" y="1002">30</text><text x="1072.0" y="1002">32</text><text x="1115.5" y="1002">34</text><text x="1158.9" y="1002">36</text><text x="1202.4" y="1002">38</text><text x="1245.9" y="1002">40</text><text x="1289.4" y="1002">42</text><text x="1332.9" y="1002">44</text><text x="1376.4" y="1002">46</text><text x="1419.9" y="1002">48</text><text x="1463.3" y="1002">50</text><text x="1506.8" y="1002">52</text><text x="1550.3" y="1002">54</text><text x="1593.8" y="1002">56</text><text x="1637.3" y="1002">58</text><text x="1680.8" y="1002">60</text><text x="1724.3" y="1002">62</text><text x="1767.8" y="1002">64</text><text x="1811.2" y="1002">66</text></g><text x="1101" y="1019" font-family="Liberation Sans" font-size="12" fill="#111" text-anchor="middle">Time (min)</text><path d="M494 866L500 864 M502 933L508 932 M580 947L594 947 M624 949L640 948 M1054 915L1084 917 M1108 919L1130 918 M1131 918L1150 917 M1148 935L1170 934 M1283 936L1297 935 M1372 936L1390 936 M1416 936L1448 934 M1497 914L1528 915 M1540 914L1570 913 M1572 928L1590 928 M1641 934L1660 933 M1669 943L1698 942 M1713 946L1736 945" stroke="#6cc46c" stroke-width="1" fill="none"/><path d="M441.4 866.6 L441.9 864.7 L442.4 868.5 L442.9 873.2 L443.4 868.3 L443.9 878.2 L444.4 875.2 L444.9 877.8 L445.4 868.7 L445.9 875.7 L446.4 886.1 L446.9 883.7 L447.4 886.2 L447.9 886.7 L448.4 881.1 L448.9 883.3 L449.4 884.3 L449.9 888.9 L450.4 879.3 L450.9 884.1 L451.4 893.5 L451.9 896.1 L452.4 890.2 L452.9 890.6 L453.4 886.7 L453.9 901.1 L454.4 892.1 L454.9 893.0 L455.4 899.6 L455.9 897.5 L456.4 903.7 L456.9 893.4 L457.4 905.8 L457.9 908.3 L458.4 902.2 L458.9 902.7 L459.4 904.2 L459.9 906.2 L460.4 908.9 L460.9 910.1 L461.4 899.9 L461.9 905.6 L462.4 911.2 L462.9 904.4 L463.4 908.5 L463.9 914.4 L464.4 909.6 L464.9 915.9 L465.4 911.8 L465.9 904.5 L466.4 890.0 L466.9 863.5 L467.4 872.1 L467.9 902.8 L468.4 903.2 L468.9 919.1 L469.4 910.5 L469.9 915.8 L470.4 913.6 L470.9 922.3 L471.4 918.8 L471.9 919.8 L472.4 919.1 L472.9 921.3 L473.4 921.7 L473.9 927.3 L474.4 918.3 L474.9 923.2 L475.4 921.7 L475.9 929.2 L476.4 927.8 L476.9 927.9 L477.4 926.9 L477.9 922.5 L478.4 919.3 L478.9 922.1 L479.4 930.8 L479.9 923.3 L480.4 915.2 L480.9 921.5 L481.4 914.7 L481.9 914.4 L482.4 923.3 L482.9 917.6 L483.4 921.8 L483.9 921.4 L484.4 928.5 L484.9 923.2 L485.4 928.7 L485.9 927.3 L486.4 931.3 L486.9 930.2 L487.4 934.5 L487.9 925.1 L488.4 931.8 L488.9 930.4 L489.4 930.9 L489.9 934.8 L490.4 936.0 L490.9 933.7 L491.4 925.2 L491.9 913.0 L492.4 907.3 L492.9 878.3 L493.4 867.0 L493.9 871.5 L494.4 892.3 L494.9 911.1 L495.4 925.4 L495.9 923.3 L496.4 931.3 L496.9 936.7 L497.4 940.2 L497.9 931.9 L498.4 932.6 L498.9 943.2 L499.4 941.1 L499.9 942.2 L500.4 938.2 L500.9 938.2 L501.4 936.0 L501.9 947.5 L502.4 940.8 L502.9 938.0 L503.4 939.7 L503.9 947.9 L504.4 945.4 L504.9 940.6 L505.4 948.2 L505.9 940.9 L506.4 939.3 L506.9 935.4 L507.4 943.1 L507.9 945.2 L508.4 946.9 L508.9 943.6 L509.4 946.1 L509.9 941.2 L510.4 940.0 L510.9 941.8 L511.4 943.6 L511.9 938.1 L512.4 947.4 L512.9 939.5 L513.4 944.6 L513.9 938.6 L514.4 941.0 L514.9 945.9 L515.4 940.2 L515.9 941.9 L516.4 944.1 L516.9 937.1 L517.4 942.6 L517.9 943.6 L518.4 943.9 L518.9 949.8 L519.4 943.2 L519.9 950.2 L520.4 947.3 L520.9 946.6 L521.4 945.4 L521.9 952.6 L522.4 944.7 L522.9 942.3 L523.4 943.2 L523.9 946.8 L524.4 949.3 L524.9 947.2 L525.4 946.1 L525.9 944.1 L526.4 950.3 L526.9 941.4 L527.4 947.4 L527.9 943.8 L528.4 950.0 L528.9 947.9 L529.4 951.4 L529.9 944.3 L530.4 946.8 L530.9 948.2 L531.4 950.8 L531.9 949.2 L532.4 941.4 L532.9 951.2 L533.4 952.8 L533.9 943.1 L534.4 951.0 L534.9 951.0 L535.4 949.0 L535.9 951.2 L536.4 954.6 L536.9 949.7 L537.4 950.0 L537.9 951.3 L538.4 953.1 L538.9 954.7 L539.4 950.4 L539.9 952.0 L540.4 952.8 L540.9 951.5 L541.4 948.5 L541.9 945.7 L542.4 948.2 L542.9 943.2 L543.4 944.5 L543.9 942.4 L544.4 940.8 L544.9 942.3 L545.4 944.7 L545.9 951.9 L546.4 946.0 L546.9 950.1 L547.4 949.3 L547.9 957.0 L548.4 945.2 L548.9 948.8 L549.4 945.8 L549.9 944.0 L550.4 948.0 L550.9 943.7 L551.4 929.6 L551.9 927.0 L552.4 931.3 L552.9 925.3 L553.4 938.3 L553.9 943.4 L554.4 945.1 L554.9 951.1 L555.4 951.2 L555.9 954.9 L556.4 947.4 L556.9 955.4 L557.4 951.2 L557.9 958.0 L558.4 956.6 L558.9 946.8 L559.4 947.9 L559.9 952.5 L560.4 952.0 L560.9 946.2 L561.4 951.5 L561.9 948.5 L562.4 951.2 L562.9 946.5 L563.4 949.2 L563.9 951.7 L564.4 955.0 L564.9 954.8 L565.4 958.6 L565.9 951.0 L566.4 951.7 L566.9 953.0 L567.4 950.7 L567.9 952.7 L568.4 945.4 L568.9 945.0 L569.4 946.0 L569.9 939.1 L570.4 940.4 L570.9 940.2 L571.4 936.8 L571.9 927.9 L572.4 920.5 L572.9 904.6 L573.4 885.3 L573.9 866.6 L574.4 842.6 L574.9 841.5 L575.4 860.4 L575.9 880.6 L576.4 899.7 L576.9 912.2 L577.4 926.1 L577.9 938.0 L578.4 941.5 L578.9 947.0 L579.4 953.6 L579.9 955.5 L580.4 953.2 L580.9 951.8 L581.4 954.8 L581.9 948.9 L582.4 954.2 L582.9 954.6 L583.4 953.0 L583.9 951.7 L584.4 953.2 L584.9 950.0 L585.4 955.7 L585.9 953.8 L586.4 958.2 L586.9 956.1 L587.4 953.7 L587.9 955.8 L588.4 954.3 L588.9 952.6 L589.4 949.2 L589.9 954.5 L590.4 954.3 L590.9 952.1 L591.4 956.3 L591.9 953.0 L592.4 953.1 L592.9 954.7 L593.4 953.1 L593.9 950.1 L594.4 959.2 L594.9 956.0 L595.4 955.9 L595.9 956.5 L596.4 955.7 L596.9 953.4 L597.4 955.2 L597.9 956.8 L598.4 951.3 L598.9 958.7 L599.4 952.1 L599.9 954.5 L600.4 956.1 L600.9 953.5 L601.4 951.0 L601.9 955.1 L602.4 950.9 L602.9 955.5 L603.4 954.6 L603.9 958.9 L604.4 954.2 L604.9 954.5 L605.4 955.2 L605.9 955.1 L606.4 957.7 L606.9 952.2 L607.4 957.5 L607.9 954.0 L608.4 957.2 L608.9 952.9 L609.4 949.8 L609.9 952.5 L610.4 953.8 L610.9 955.9 L611.4 950.0 L611.9 956.5 L612.4 955.8 L612.9 955.3 L613.4 955.1 L613.9 951.2 L614.4 949.3 L614.9 948.9 L615.4 942.6 L615.9 938.1 L616.4 924.4 L616.9 909.8 L617.4 908.0 L617.9 912.4 L618.4 927.6 L618.9 928.2 L619.4 940.2 L619.9 944.7 L620.4 948.4 L620.9 950.5 L621.4 950.5 L621.9 954.5 L622.4 950.2 L622.9 953.8 L623.4 951.8 L623.9 952.5 L624.4 951.6 L624.9 950.8 L625.4 950.4 L625.9 951.1 L626.4 953.0 L626.9 953.1 L627.4 956.6 L627.9 950.4 L628.4 956.7 L628.9 956.3 L629.4 952.9 L629.9 957.6 L630.4 955.5 L630.9 954.5 L631.4 956.8 L631.9 951.6 L632.4 958.8 L632.9 957.4 L633.4 954.5 L633.9 955.2 L634.4 957.0 L634.9 954.6 L635.4 954.9 L635.9 952.6 L636.4 953.4 L636.9 952.8 L637.4 951.4 L637.9 955.7 L638.4 954.2 L638.9 953.2 L639.4 954.0 L639.9 952.8 L640.4 954.8 L640.9 957.0 L641.4 953.3 L641.9 952.5 L642.4 957.9 L642.9 956.5 L643.4 952.2 L643.9 950.9 L644.4 955.4 L644.9 954.7 L645.4 955.3 L645.9 950.8 L646.4 957.8 L646.9 955.4 L647.4 954.6 L647.9 951.5 L648.4 953.5 L648.9 953.3 L649.4 954.4 L649.9 954.2 L650.4 954.1 L650.9 954.5 L651.4 956.5 L651.9 957.8 L652.4 953.5 L652.9 954.2 L653.4 957.2 L653.9 952.2 L654.4 951.9 L654.9 957.8 L655.4 954.8 L655.9 954.4 L656.4 954.5 L656.9 954.5 L657.4 955.1 L657.9 955.0 L658.4 956.5 L658.9 954.3 L659.4 957.5 L659.9 954.3 L660.4 951.9 L660.9 954.3 L661.4 955.0 L661.9 958.7 L662.4 952.6 L662.9 956.9 L663.4 952.3 L663.9 958.3 L664.4 958.5 L664.9 957.5 L665.4 952.8 L665.9 953.8 L666.4 951.5 L666.9 956.2 L667.4 957.8 L667.9 954.2 L668.4 950.6 L668.9 953.3 L669.4 958.2 L669.9 954.8 L670.4 957.5 L670.9 953.2 L671.4 952.4 L671.9 955.2 L672.4 952.4 L672.9 955.6 L673.4 955.6 L673.9 952.1 L674.4 951.9 L674.9 954.0 L675.4 955.8 L675.9 958.4 L676.4 953.4 L676.9 953.4 L677.4 955.7 L677.9 954.2 L678.4 954.5 L678.9 954.0 L679.4 955.2 L679.9 948.9 L680.4 950.8 L680.9 952.3 L681.4 949.8 L681.9 950.3 L682.4 947.6 L682.9 948.3 L683.4 949.4 L683.9 939.8 L684.4 945.0 L684.9 943.0 L685.4 945.9 L685.9 947.5 L686.4 949.3 L686.9 951.1 L687.4 951.0 L687.9 951.8 L688.4 952.2 L688.9 954.2 L689.4 954.2 L689.9 950.8 L690.4 955.0 L690.9 953.0 L691.4 952.3 L691.9 952.7 L692.4 951.7 L692.9 956.4 L693.4 953.1 L693.9 955.4 L694.4 953.9 L694.9 959.1 L695.4 952.5 L695.9 954.1 L696.4 955.6 L696.9 957.7 L697.4 958.3 L697.9 956.5 L698.4 957.4 L698.9 957.3 L699.4 957.7 L699.9 959.9 L700.4 951.5 L700.9 953.3 L701.4 955.0 L701.9 956.4 L702.4 953.8 L702.9 956.9 L703.4 958.1 L703.9 956.5 L704.4 958.7 L704.9 959.6 L705.4 952.5 L705.9 957.6 L706.4 958.2 L706.9 956.6 L707.4 957.3 L707.9 951.4 L708.4 958.0 L708.9 955.1 L709.4 955.8 L709.9 955.2 L710.4 958.2 L710.9 951.6 L711.4 957.1 L711.9 955.9 L712.4 960.8 L712.9 956.0 L713.4 952.1 L713.9 957.1 L714.4 952.9 L714.9 958.8 L715.4 958.8 L715.9 956.7 L716.4 959.4 L716.9 953.8 L717.4 956.0 L717.9 953.7 L718.4 958.7 L718.9 953.0 L719.4 956.7 L719.9 955.8 L720.4 956.4 L720.9 958.5 L721.4 956.8 L721.9 955.9 L722.4 959.6 L722.9 956.2 L723.4 957.1 L723.9 955.8 L724.4 956.1 L724.9 955.1 L725.4 954.5 L725.9 957.9 L726.4 955.1 L726.9 956.1 L727.4 954.6 L727.9 954.3 L728.4 955.1 L728.9 955.5 L729.4 956.5 L729.9 957.0 L730.4 955.0 L730.9 953.1 L731.4 957.6 L731.9 957.2 L732.4 958.7 L732.9 954.5 L733.4 953.8 L733.9 959.7 L734.4 958.8 L734.9 956.8 L735.4 955.8 L735.9 956.3 L736.4 955.5 L736.9 956.0 L737.4 959.0 L737.9 959.6 L738.4 955.3 L738.9 956.9 L739.4 956.6 L739.9 959.2 L740.4 956.9 L740.9 952.8 L741.4 958.9 L741.9 958.4 L742.4 956.0 L742.9 954.8 L743.4 955.4 L743.9 955.0 L744.4 960.0 L744.9 955.9 L745.4 957.7 L745.9 958.8 L746.4 955.9 L746.9 953.4 L747.4 958.8 L747.9 957.2 L748.4 954.0 L748.9 957.7 L749.4 952.9 L749.9 959.0 L750.4 957.6 L750.9 955.9 L751.4 953.6 L751.9 954.2 L752.4 954.8 L752.9 955.2 L753.4 958.4 L753.9 957.5 L754.4 959.4 L754.9 957.7 L755.4 957.3 L755.9 952.4 L756.4 955.7 L756.9 958.9 L757.4 955.7 L757.9 959.8 L758.4 959.0 L758.9 954.3 L759.4 956.1 L759.9 958.6 L760.4 954.4 L760.9 953.4 L761.4 956.4 L761.9 957.6 L762.4 956.2 L762.9 955.5 L763.4 958.3 L763.9 957.9 L764.4 960.3 L764.9 958.0 L765.4 957.4 L765.9 957.7 L766.4 956.1 L766.9 953.8 L767.4 959.4 L767.9 956.0 L768.4 957.1 L768.9 955.4 L769.4 957.9 L769.9 959.9 L770.4 957.8 L770.9 953.9 L771.4 954.4 L771.9 952.8 L772.4 956.4 L772.9 952.6 L773.4 955.3 L773.9 957.4 L774.4 956.9 L774.9 958.9 L775.4 956.8 L775.9 958.9 L776.4 956.5 L776.9 956.8 L777.4 959.4 L777.9 957.1 L778.4 957.3 L778.9 954.5 L779.4 957.3 L779.9 957.2 L780.4 958.7 L780.9 958.2 L781.4 955.5 L781.9 958.1 L782.4 959.2 L782.9 953.4 L783.4 956.2 L783.9 957.7 L784.4 952.8 L784.9 956.1 L785.4 952.0 L785.9 954.5 L786.4 956.7 L786.9 955.2 L787.4 954.4 L787.9 956.1 L788.4 957.7 L788.9 957.5 L789.4 955.1 L789.9 958.9 L790.4 956.2 L790.9 958.2 L791.4 957.7 L791.9 955.0 L792.4 954.9 L792.9 953.7 L793.4 954.2 L793.9 954.5 L794.4 955.6 L794.9 953.7 L795.4 951.6 L795.9 957.0 L796.4 955.5 L796.9 957.6 L797.4 954.3 L797.9 958.5 L798.4 958.5 L798.9 957.7 L799.4 960.4 L799.9 956.8 L800.4 958.1 L800.9 954.4 L801.4 955.6 L801.9 956.2 L802.4 957.1 L802.9 954.8 L803.4 956.0 L803.9 955.6 L804.4 955.3 L804.9 952.2 L805.4 955.9 L805.9 954.0 L806.4 952.4 L806.9 958.5 L807.4 956.3 L807.9 960.1 L808.4 953.0 L808.9 955.3 L809.4 955.2 L809.9 955.7 L810.4 950.9 L810.9 957.1 L811.4 960.3 L811.9 955.7 L812.4 955.1 L812.9 959.1 L813.4 955.2 L813.9 956.5 L814.4 950.4 L814.9 953.9 L815.4 947.5 L815.9 943.9 L816.4 940.1 L816.9 936.8 L817.4 935.9 L817.9 927.8 L818.4 929.6 L818.9 931.7 L819.4 931.8 L819.9 933.8 L820.4 938.6 L820.9 942.9 L821.4 949.4 L821.9 946.7 L822.4 954.2 L822.9 949.5 L823.4 952.9 L823.9 954.5 L824.4 953.1 L824.9 956.1 L825.4 952.1 L825.9 951.8 L826.4 947.4 L826.9 949.4 L827.4 950.0 L827.9 952.3 L828.4 950.9 L828.9 944.9 L829.4 946.7 L829.9 951.2 L830.4 948.6 L830.9 948.1 L831.4 948.4 L831.9 951.2 L832.4 950.0 L832.9 953.5 L833.4 952.6 L833.9 955.1 L834.4 955.5 L834.9 956.4 L835.4 956.7 L835.9 953.0 L836.4 955.6 L836.9 957.6 L837.4 954.4 L837.9 958.7 L838.4 955.9 L838.9 954.1 L839.4 956.4 L839.9 959.7 L840.4 956.8 L840.9 958.3 L841.4 957.1 L841.9 953.0 L842.4 955.2 L842.9 955.2 L843.4 955.1 L843.9 953.5 L844.4 957.6 L844.9 956.2 L845.4 955.9 L845.9 954.2 L846.4 958.1 L846.9 954.9 L847.4 955.5 L847.9 956.4 L848.4 952.9 L848.9 953.0 L849.4 955.2 L849.9 955.8 L850.4 954.8 L850.9 955.1 L851.4 957.6 L851.9 954.6 L852.4 958.0 L852.9 955.2 L853.4 954.6 L853.9 955.1 L854.4 953.1 L854.9 955.3 L855.4 951.7 L855.9 954.1 L856.4 954.9 L856.9 957.0 L857.4 952.9 L857.9 951.5 L858.4 953.9 L858.9 955.3 L859.4 952.5 L859.9 955.3 L860.4 955.6 L860.9 955.2 L861.4 956.0 L861.9 957.6 L862.4 954.1 L862.9 955.3 L863.4 952.2 L863.9 953.1 L864.4 955.8 L864.9 958.4 L865.4 958.9 L865.9 951.8 L866.4 959.3 L866.9 954.3 L867.4 952.8 L867.9 955.3 L868.4 956.5 L868.9 952.3 L869.4 956.3 L869.9 958.5 L870.4 957.4 L870.9 956.1 L871.4 954.0 L871.9 959.3 L872.4 954.7 L872.9 959.6 L873.4 952.6 L873.9 958.0 L874.4 951.9 L874.9 955.1 L875.4 957.1 L875.9 956.8 L876.4 954.3 L876.9 956.3 L877.4 953.2 L877.9 955.3 L878.4 956.6 L878.9 954.7 L879.4 954.8 L879.9 954.9 L880.4 953.9 L880.9 953.7 L881.4 958.2 L881.9 957.2 L882.4 953.5 L882.9 955.6 L883.4 956.0 L883.9 958.0 L884.4 954.7 L884.9 956.7 L885.4 951.8 L885.9 954.4 L886.4 954.8 L886.9 957.2 L887.4 953.0 L887.9 952.3 L888.4 946.3 L888.9 950.9 L889.4 948.0 L889.9 946.2 L890.4 941.7 L890.9 936.6 L891.4 938.8 L891.9 938.2 L892.4 937.4 L892.9 944.5 L893.4 942.9 L893.9 943.5 L894.4 948.4 L894.9 950.2 L895.4 950.2 L895.9 951.6 L896.4 949.9 L896.9 952.5 L897.4 950.9 L897.9 956.5 L898.4 955.4 L898.9 950.5 L899.4 958.5 L899.9 955.0 L900.4 955.9 L900.9 956.5 L901.4 957.1 L901.9 959.7 L902.4 956.5 L902.9 955.4 L903.4 958.3 L903.9 957.2 L904.4 955.4 L904.9 955.7 L905.4 955.4 L905.9 952.8 L906.4 955.3 L906.9 951.0 L907.4 958.5 L907.9 955.5 L908.4 953.0 L908.9 957.0 L909.4 960.0 L909.9 953.9 L910.4 952.7 L910.9 958.2 L911.4 958.9 L911.9 955.1 L912.4 956.3 L912.9 952.3 L913.4 952.4 L913.9 952.9 L914.4 956.5 L914.9 954.5 L915.4 954.9 L915.9 953.7 L916.4 951.8 L916.9 949.4 L917.4 947.7 L917.9 941.3 L918.4 939.2 L918.9 930.7 L919.4 923.4 L919.9 913.3 L920.4 910.9 L920.9 902.3 L921.4 895.5 L921.9 897.3 L922.4 899.6 L922.9 898.9 L923.4 904.5 L923.9 906.7 L924.4 918.0 L924.9 921.7 L925.4 923.7 L925.9 928.9 L926.4 935.6 L926.9 939.4 L927.4 942.7 L927.9 945.8 L928.4 946.6 L928.9 951.7 L929.4 953.9 L929.9 950.5 L930.4 955.5 L930.9 950.5 L931.4 956.7 L931.9 953.8 L932.4 951.2 L932.9 954.8 L933.4 953.6 L933.9 954.1 L934.4 955.5 L934.9 957.8 L935.4 955.9 L935.9 955.1 L936.4 953.7 L936.9 958.9 L937.4 953.4 L937.9 952.2 L938.4 956.8 L938.9 952.7 L939.4 954.8 L939.9 957.4 L940.4 955.7 L940.9 951.5 L941.4 953.7 L941.9 953.8 L942.4 955.5 L942.9 956.0 L943.4 957.1 L943.9 957.2 L944.4 954.0 L944.9 954.8 L945.4 953.5 L945.9 954.2 L946.4 952.9 L946.9 954.9 L947.4 954.5 L947.9 955.4 L948.4 955.1 L948.9 953.9 L949.4 954.2 L949.9 951.5 L950.4 952.4 L950.9 955.9 L951.4 955.1 L951.9 953.5 L952.4 955.7 L952.9 953.6 L953.4 957.0 L953.9 950.3 L954.4 954.6 L954.9 954.0 L955.4 955.4 L955.9 955.4 L956.4 952.0 L956.9 949.3 L957.4 953.3 L957.9 949.9 L958.4 952.5 L958.9 953.2 L959.4 956.9 L959.9 953.8 L960.4 954.9 L960.9 954.2 L961.4 954.3 L961.9 952.7 L962.4 951.0 L962.9 947.0 L963.4 949.7 L963.9 948.7 L964.4 946.7 L964.9 949.3 L965.4 949.4 L965.9 948.6 L966.4 951.3 L966.9 949.3 L967.4 947.7 L967.9 950.9 L968.4 949.7 L968.9 950.6 L969.4 952.5 L969.9 951.2 L970.4 953.0 L970.9 949.8 L971.4 951.7 L971.9 952.8 L972.4 953.4 L972.9 947.5 L973.4 947.5 L973.9 952.8 L974.4 952.0 L974.9 950.8 L975.4 951.5 L975.9 948.9 L976.4 951.6 L976.9 948.8 L977.4 946.1 L977.9 952.1 L978.4 949.1 L978.9 944.7 L979.4 945.3 L979.9 946.0 L980.4 953.2 L980.9 949.5 L981.4 950.0 L981.9 951.4 L982.4 949.2 L982.9 956.5 L983.4 947.7 L983.9 957.4 L984.4 949.7 L984.9 952.0 L985.4 949.6 L985.9 957.7 L986.4 948.7 L986.9 951.6 L987.4 954.6 L987.9 954.1 L988.4 953.7 L988.9 953.7 L989.4 952.3 L989.9 952.3 L990.4 956.6 L990.9 954.4 L991.4 952.3 L991.9 953.5 L992.4 954.1 L992.9 952.2 L993.4 956.0 L993.9 954.8 L994.4 950.7 L994.9 951.0 L995.4 953.6 L995.9 955.7 L996.4 950.6 L996.9 954.2 L997.4 947.9 L997.9 955.3 L998.4 949.6 L998.9 952.0 L999.4 954.4 L999.9 950.8 L1000.4 951.0 L1000.9 955.2 L1001.4 955.5 L1001.9 952.2 L1002.4 952.0 L1002.9 947.7 L1003.4 951.0 L1003.9 953.1 L1004.4 951.6 L1004.9 953.3 L1005.4 948.9 L1005.9 949.9 L1006.4 954.7 L1006.9 950.6 L1007.4 955.5 L1007.9 954.5 L1008.4 953.6 L1008.9 952.2 L1009.4 949.1 L1009.9 947.2 L1010.4 947.5 L1010.9 950.0 L1011.4 944.0 L1011.9 939.7 L1012.4 941.8 L1012.9 936.2 L1013.4 926.8 L1013.9 925.1 L1014.4 917.0 L1014.9 909.9 L1015.4 901.0 L1015.9 888.8 L1016.4 880.7 L1016.9 861.8 L1017.4 848.4 L1017.9 825.2 L1018.4 803.8 L1018.9 784.4 L1019.4 763.2 L1019.9 740.4 L1020.4 715.0 L1020.9 695.6 L1021.4 685.3 L1021.9 685.6 L1022.4 701.3 L1022.9 718.4 L1023.4 734.7 L1023.9 750.3 L1024.4 773.4 L1024.9 789.8 L1025.4 813.3 L1025.9 827.6 L1026.4 844.5 L1026.9 856.3 L1027.4 871.7 L1027.9 882.8 L1028.4 890.4 L1028.9 902.3 L1029.4 912.3 L1029.9 917.4 L1030.4 921.9 L1030.9 929.6 L1031.4 931.0 L1031.9 933.9 L1032.4 940.8 L1032.9 940.5 L1033.4 939.4 L1033.9 943.6 L1034.4 946.2 L1034.9 944.2 L1035.4 948.0 L1035.9 947.8 L1036.4 949.9 L1036.9 952.7 L1037.4 946.5 L1037.9 945.4 L1038.4 947.8 L1038.9 947.8 L1039.4 950.8 L1039.9 950.1 L1040.4 950.0 L1040.9 953.4 L1041.4 950.2 L1041.9 948.1 L1042.4 947.8 L1042.9 952.4 L1043.4 950.4 L1043.9 950.0 L1044.4 951.6 L1044.9 946.9 L1045.4 952.2 L1045.9 952.0 L1046.4 947.5 L1046.9 947.3 L1047.4 948.1 L1047.9 950.1 L1048.4 952.2 L1048.9 955.1 L1049.4 950.6 L1049.9 948.4 L1050.4 949.6 L1050.9 952.9 L1051.4 951.6 L1051.9 947.3 L1052.4 949.3 L1052.9 949.5 L1053.4 947.5 L1053.9 946.6 L1054.4 952.6 L1054.9 950.3 L1055.4 950.7 L1055.9 949.8 L1056.4 949.6 L1056.9 950.5 L1057.4 951.4 L1057.9 953.5 L1058.4 949.2 L1058.9 945.1 L1059.4 949.0 L1059.9 949.3 L1060.4 947.1 L1060.9 946.6 L1061.4 945.3 L1061.9 943.6 L1062.4 945.6 L1062.9 943.3 L1063.4 947.4 L1063.9 946.6 L1064.4 947.0 L1064.9 945.2 L1065.4 944.6 L1065.9 942.4 L1066.4 943.5 L1066.9 946.5 L1067.4 941.5 L1067.9 943.7 L1068.4 946.4 L1068.9 941.6 L1069.4 944.1 L1069.9 939.5 L1070.4 940.4 L1070.9 938.5 L1071.4 940.9 L1071.9 943.4 L1072.4 941.2 L1072.9 940.8 L1073.4 939.6 L1073.9 932.5 L1074.4 935.9 L1074.9 934.1 L1075.4 938.3 L1075.9 934.2 L1076.4 934.5 L1076.9 932.0 L1077.4 932.7 L1077.9 931.6 L1078.4 932.9 L1078.9 932.7 L1079.4 930.9 L1079.9 930.2 L1080.4 930.6 L1080.9 928.0 L1081.4 927.9 L1081.9 924.9 L1082.4 928.2 L1082.9 928.0 L1083.4 924.2 L1083.9 925.6 L1084.4 926.5 L1084.9 926.6 L1085.4 923.3 L1085.9 925.4 L1086.4 928.3 L1086.9 924.8 L1087.4 925.4 L1087.9 922.0 L1088.4 923.1 L1088.9 925.2 L1089.4 919.4 L1089.9 923.2 L1090.4 920.8 L1090.9 921.8 L1091.4 924.0 L1091.9 923.4 L1092.4 923.5 L1092.9 923.8 L1093.4 920.9 L1093.9 925.6 L1094.4 924.8 L1094.9 926.3 L1095.4 922.4 L1095.9 925.1 L1096.4 928.1 L1096.9 925.6 L1097.4 923.4 L1097.9 923.6 L1098.4 926.0 L1098.9 930.2 L1099.4 925.0 L1099.9 926.1 L1100.4 929.3 L1100.9 929.6 L1101.4 927.0 L1101.9 930.0 L1102.4 922.7 L1102.9 930.0 L1103.4 931.1 L1103.9 923.9 L1104.4 928.0 L1104.9 928.0 L1105.4 922.8 L1105.9 926.8 L1106.4 926.1 L1106.9 925.7 L1107.4 927.3 L1107.9 924.7 L1108.4 925.0 L1108.9 924.7 L1109.4 927.4 L1109.9 926.6 L1110.4 929.1 L1110.9 927.2 L1111.4 926.1 L1111.9 932.5 L1112.4 931.1 L1112.9 927.3 L1113.4 934.2 L1113.9 933.0 L1114.4 934.8 L1114.9 934.6 L1115.4 934.1 L1115.9 939.5 L1116.4 933.2 L1116.9 932.7 L1117.4 939.8 L1117.9 937.0 L1118.4 938.5 L1118.9 933.8 L1119.4 937.0 L1119.9 936.8 L1120.4 937.7 L1120.9 938.7 L1121.4 940.3 L1121.9 937.1 L1122.4 940.0 L1122.9 935.1 L1123.4 937.9 L1123.9 933.7 L1124.4 935.7 L1124.9 936.3 L1125.4 938.6 L1125.9 937.8 L1126.4 937.4 L1126.9 934.2 L1127.4 942.0 L1127.9 941.6 L1128.4 935.9 L1128.9 941.0 L1129.4 934.5 L1129.9 936.3 L1130.4 937.4 L1130.9 938.8 L1131.4 933.9 L1131.9 934.6 L1132.4 942.4 L1132.9 936.1 L1133.4 939.8 L1133.9 937.0 L1134.4 938.7 L1134.9 939.1 L1135.4 941.7 L1135.9 940.7 L1136.4 936.7 L1136.9 938.4 L1137.4 938.6 L1137.9 941.6 L1138.4 936.6 L1138.9 941.6 L1139.4 940.5 L1139.9 938.8 L1140.4 944.1 L1140.9 940.8 L1141.4 941.1 L1141.9 938.7 L1142.4 942.2 L1142.9 941.0 L1143.4 937.6 L1143.9 941.6 L1144.4 941.6 L1144.9 944.3 L1145.4 945.2 L1145.9 938.6 L1146.4 943.3 L1146.9 941.0 L1147.4 939.8 L1147.9 941.4 L1148.4 941.6 L1148.9 941.0 L1149.4 942.0 L1149.9 939.1 L1150.4 944.2 L1150.9 938.5 L1151.4 945.8 L1151.9 944.4 L1152.4 939.0 L1152.9 938.5 L1153.4 941.9 L1153.9 940.9 L1154.4 944.5 L1154.9 942.6 L1155.4 947.2 L1155.9 940.4 L1156.4 945.1 L1156.9 939.7 L1157.4 944.2 L1157.9 941.1 L1158.4 943.6 L1158.9 943.1 L1159.4 943.0 L1159.9 946.9 L1160.4 941.2 L1160.9 940.9 L1161.4 940.4 L1161.9 943.7 L1162.4 946.8 L1162.9 948.1 L1163.4 941.8 L1163.9 947.9 L1164.4 940.9 L1164.9 943.6 L1165.4 946.6 L1165.9 947.2 L1166.4 944.4 L1166.9 947.1 L1167.4 944.1 L1167.9 945.2 L1168.4 944.3 L1168.9 946.4 L1169.4 944.9 L1169.9 947.4 L1170.4 941.5 L1170.9 944.4 L1171.4 943.7 L1171.9 943.7 L1172.4 943.8 L1172.9 944.6 L1173.4 946.6 L1173.9 941.5 L1174.4 941.1 L1174.9 946.8 L1175.4 941.3 L1175.9 944.1 L1176.4 941.5 L1176.9 944.9 L1177.4 940.2 L1177.9 942.4 L1178.4 940.4 L1178.9 941.7 L1179.4 947.5 L1179.9 946.7 L1180.4 946.0 L1180.9 945.7 L1181.4 945.6 L1181.9 947.2 L1182.4 940.7 L1182.9 947.2 L1183.4 945.9 L1183.9 945.0 L1184.4 945.8 L1184.9 950.6 L1185.4 948.9 L1185.9 943.9 L1186.4 946.9 L1186.9 945.6 L1187.4 944.2 L1187.9 941.1 L1188.4 946.8 L1188.9 946.9 L1189.4 944.3 L1189.9 946.3 L1190.4 941.4 L1190.9 946.4 L1191.4 949.7 L1191.9 947.6 L1192.4 943.8 L1192.9 942.0 L1193.4 950.0 L1193.9 948.2 L1194.4 942.7 L1194.9 943.3 L1195.4 948.2 L1195.9 947.3 L1196.4 949.5 L1196.9 949.7 L1197.4 947.3 L1197.9 943.2 L1198.4 948.4 L1198.9 943.4 L1199.4 943.2 L1199.9 943.2 L1200.4 942.1 L1200.9 945.3 L1201.4 945.1 L1201.9 948.4 L1202.4 946.3 L1202.9 945.5 L1203.4 950.0 L1203.9 944.1 L1204.4 941.5 L1204.9 947.0 L1205.4 944.0 L1205.9 944.0 L1206.4 946.3 L1206.9 946.6 L1207.4 945.5 L1207.9 948.5 L1208.4 946.7 L1208.9 948.0 L1209.4 943.8 L1209.9 947.2 L1210.4 944.4 L1210.9 949.9 L1211.4 943.8 L1211.9 949.7 L1212.4 942.4 L1212.9 947.2 L1213.4 947.7 L1213.9 947.7 L1214.4 944.4 L1214.9 946.3 L1215.4 950.5 L1215.9 945.2 L1216.4 942.2 L1216.9 949.9 L1217.4 945.5 L1217.9 944.8 L1218.4 946.7 L1218.9 946.0 L1219.4 942.9 L1219.9 945.7 L1220.4 942.2 L1220.9 948.4 L1221.4 947.7 L1221.9 941.6 L1222.4 947.1 L1222.9 948.8 L1223.4 943.3 L1223.9 947.3 L1224.4 943.8 L1224.9 948.3 L1225.4 950.0 L1225.9 944.4 L1226.4 946.0 L1226.9 948.5 L1227.4 943.0 L1227.9 947.0 L1228.4 944.9 L1228.9 944.0 L1229.4 941.5 L1229.9 945.7 L1230.4 947.2 L1230.9 945.9 L1231.4 947.6 L1231.9 942.5 L1232.4 943.2 L1232.9 945.8 L1233.4 948.3 L1233.9 946.5 L1234.4 944.8 L1234.9 948.7 L1235.4 947.1 L1235.9 946.1 L1236.4 945.9 L1236.9 945.4 L1237.4 946.8 L1237.9 948.6 L1238.4 947.5 L1238.9 947.2 L1239.4 943.5 L1239.9 948.5 L1240.4 950.2 L1240.9 943.7 L1241.4 948.7 L1241.9 946.3 L1242.4 948.7 L1242.9 944.1 L1243.4 944.3 L1243.9 943.4 L1244.4 946.2 L1244.9 947.7 L1245.4 950.1 L1245.9 948.1 L1246.4 942.7 L1246.9 941.2 L1247.4 943.6 L1247.9 944.4 L1248.4 946.7 L1248.9 946.0 L1249.4 944.5 L1249.9 944.3 L1250.4 942.4 L1250.9 949.8 L1251.4 949.9 L1251.9 944.2 L1252.4 946.2 L1252.9 946.5 L1253.4 945.1 L1253.9 942.2 L1254.4 948.0 L1254.9 945.7 L1255.4 949.2 L1255.9 943.7 L1256.4 945.2 L1256.9 947.1 L1257.4 947.1 L1257.9 946.7 L1258.4 949.1 L1258.9 944.9 L1259.4 945.6 L1259.9 944.4 L1260.4 945.6 L1260.9 944.7 L1261.4 942.4 L1261.9 944.7 L1262.4 949.3 L1262.9 944.8 L1263.4 943.4 L1263.9 948.3 L1264.4 946.1 L1264.9 942.8 L1265.4 946.0 L1265.9 946.3 L1266.4 944.7 L1266.9 945.2 L1267.4 947.0 L1267.9 948.5 L1268.4 948.7 L1268.9 948.0 L1269.4 941.2 L1269.9 948.9 L1270.4 947.1 L1270.9 946.8 L1271.4 944.2 L1271.9 949.2 L1272.4 946.5 L1272.9 945.6 L1273.4 946.0 L1273.9 948.0 L1274.4 942.6 L1274.9 946.6 L1275.4 946.2 L1275.9 945.0 L1276.4 941.4 L1276.9 942.3 L1277.4 944.7 L1277.9 944.2 L1278.4 945.6 L1278.9 946.6 L1279.4 942.4 L1279.9 944.7 L1280.4 943.2 L1280.9 948.8 L1281.4 946.7 L1281.9 942.3 L1282.4 945.8 L1282.9 945.3 L1283.4 947.5 L1283.9 949.9 L1284.4 945.4 L1284.9 945.3 L1285.4 948.8 L1285.9 945.1 L1286.4 945.8 L1286.9 948.7 L1287.4 947.3 L1287.9 949.7 L1288.4 947.7 L1288.9 943.8 L1289.4 945.2 L1289.9 949.7 L1290.4 943.2 L1290.9 945.9 L1291.4 943.7 L1291.9 941.6 L1292.4 941.7 L1292.9 944.3 L1293.4 944.4 L1293.9 943.1 L1294.4 945.4 L1294.9 943.0 L1295.4 942.2 L1295.9 947.5 L1296.4 943.2 L1296.9 946.4 L1297.4 945.5 L1297.9 943.7 L1298.4 943.9 L1298.9 949.0 L1299.4 941.6 L1299.9 944.6 L1300.4 946.0 L1300.9 946.0 L1301.4 942.4 L1301.9 947.4 L1302.4 947.8 L1302.9 940.4 L1303.4 947.1 L1303.9 945.1 L1304.4 947.8 L1304.9 945.4 L1305.4 944.6 L1305.9 940.1 L1306.4 940.8 L1306.9 947.6 L1307.4 944.2 L1307.9 945.0 L1308.4 943.1 L1308.9 949.5 L1309.4 945.0 L1309.9 945.3 L1310.4 947.5 L1310.9 941.0 L1311.4 948.1 L1311.9 939.6 L1312.4 943.6 L1312.9 941.9 L1313.4 945.8 L1313.9 943.6 L1314.4 944.8 L1314.9 944.0 L1315.4 947.6 L1315.9 939.7 L1316.4 940.5 L1316.9 941.0 L1317.4 946.5 L1317.9 941.5 L1318.4 945.2 L1318.9 945.7 L1319.4 942.5 L1319.9 942.2 L1320.4 942.7 L1320.9 944.2 L1321.4 946.1 L1321.9 941.2 L1322.4 943.1 L1322.9 946.3 L1323.4 943.2 L1323.9 949.2 L1324.4 946.4 L1324.9 947.4 L1325.4 943.8 L1325.9 941.3 L1326.4 945.0 L1326.9 942.6 L1327.4 944.6 L1327.9 947.5 L1328.4 945.9 L1328.9 941.2 L1329.4 942.9 L1329.9 940.2 L1330.4 940.1 L1330.9 947.2 L1331.4 943.0 L1331.9 941.8 L1332.4 947.7 L1332.9 941.9 L1333.4 941.2 L1333.9 940.9 L1334.4 941.8 L1334.9 942.7 L1335.4 947.8 L1335.9 942.4 L1336.4 946.0 L1336.9 945.4 L1337.4 945.8 L1337.9 945.7 L1338.4 943.0 L1338.9 942.5 L1339.4 945.6 L1339.9 948.2 L1340.4 943.1 L1340.9 945.3 L1341.4 945.3 L1341.9 946.3 L1342.4 946.1 L1342.9 941.0 L1343.4 942.5 L1343.9 940.8 L1344.4 948.4 L1344.9 940.9 L1345.4 940.0 L1345.9 945.5 L1346.4 942.8 L1346.9 943.5 L1347.4 945.2 L1347.9 942.0 L1348.4 945.4 L1348.9 946.8 L1349.4 944.5 L1349.9 944.0 L1350.4 939.1 L1350.9 939.6 L1351.4 943.5 L1351.9 945.7 L1352.4 948.3 L1352.9 943.5 L1353.4 942.6 L1353.9 945.0 L1354.4 944.1 L1354.9 942.2 L1355.4 946.7 L1355.9 945.2 L1356.4 941.4 L1356.9 944.9 L1357.4 941.5 L1357.9 943.3 L1358.4 943.8 L1358.9 944.8 L1359.4 942.8 L1359.9 943.1 L1360.4 946.1 L1360.9 943.9 L1361.4 939.8 L1361.9 945.6 L1362.4 947.9 L1362.9 942.4 L1363.4 942.3 L1363.9 946.6 L1364.4 948.1 L1364.9 944.1 L1365.4 941.9 L1365.9 942.9 L1366.4 945.6 L1366.9 945.5 L1367.4 944.0 L1367.9 943.9 L1368.4 940.8 L1368.9 943.7 L1369.4 942.9 L1369.9 939.1 L1370.4 945.7 L1370.9 942.0 L1371.4 946.9 L1371.9 943.9 L1372.4 946.5 L1372.9 945.8 L1373.4 943.2 L1373.9 944.8 L1374.4 945.6 L1374.9 942.1 L1375.4 943.0 L1375.9 945.4 L1376.4 944.5 L1376.9 942.8 L1377.4 939.7 L1377.9 943.6 L1378.4 944.7 L1378.9 943.8 L1379.4 944.0 L1379.9 945.6 L1380.4 942.3 L1380.9 938.6 L1381.4 940.4 L1381.9 942.9 L1382.4 941.5 L1382.9 946.8 L1383.4 942.7 L1383.9 941.5 L1384.4 943.2 L1384.9 945.7 L1385.4 940.4 L1385.9 938.2 L1386.4 944.5 L1386.9 943.3 L1387.4 941.9 L1387.9 938.6 L1388.4 939.0 L1388.9 937.5 L1389.4 940.8 L1389.9 944.0 L1390.4 939.5 L1390.9 939.1 L1391.4 938.9 L1391.9 936.5 L1392.4 936.0 L1392.9 940.8 L1393.4 941.5 L1393.9 937.6 L1394.4 941.5 L1394.9 942.4 L1395.4 942.5 L1395.9 936.7 L1396.4 937.9 L1396.9 942.2 L1397.4 937.5 L1397.9 941.7 L1398.4 941.8 L1398.9 943.4 L1399.4 941.4 L1399.9 936.6 L1400.4 936.6 L1400.9 941.8 L1401.4 936.5 L1401.9 937.2 L1402.4 942.6 L1402.9 937.0 L1403.4 935.6 L1403.9 942.1 L1404.4 938.4 L1404.9 937.5 L1405.4 942.3 L1405.9 938.9 L1406.4 937.8 L1406.9 940.1 L1407.4 938.5 L1407.9 934.2 L1408.4 938.2 L1408.9 937.3 L1409.4 936.8 L1409.9 934.4 L1410.4 935.7 L1410.9 938.1 L1411.4 937.4 L1411.9 941.6 L1412.4 937.8 L1412.9 937.6 L1413.4 937.4 L1413.9 939.0 L1414.4 933.1 L1414.9 933.0 L1415.4 934.6 L1415.9 936.6 L1416.4 939.4 L1416.9 939.0 L1417.4 935.4 L1417.9 938.6 L1418.4 941.7 L1418.9 937.1 L1419.4 938.4 L1419.9 938.0 L1420.4 937.8 L1420.9 940.3 L1421.4 941.7 L1421.9 935.1 L1422.4 940.4 L1422.9 940.0 L1423.4 940.2 L1423.9 943.8 L1424.4 943.1 L1424.9 944.3 L1425.4 942.2 L1425.9 939.4 L1426.4 940.3 L1426.9 941.5 L1427.4 940.4 L1427.9 941.6 L1428.4 938.5 L1428.9 940.8 L1429.4 941.5 L1429.9 943.0 L1430.4 939.7 L1430.9 941.6 L1431.4 940.0 L1431.9 939.4 L1432.4 945.8 L1432.9 945.3 L1433.4 941.6 L1433.9 942.4 L1434.4 942.0 L1434.9 943.0 L1435.4 943.0 L1435.9 945.7 L1436.4 944.0 L1436.9 942.5 L1437.4 946.8 L1437.9 947.9 L1438.4 945.2 L1438.9 946.4 L1439.4 943.2 L1439.9 946.4 L1440.4 946.5 L1440.9 944.7 L1441.4 946.3 L1441.9 949.6 L1442.4 945.6 L1442.9 949.3 L1443.4 947.5 L1443.9 945.8 L1444.4 946.6 L1444.9 949.0 L1445.4 946.3 L1445.9 950.4 L1446.4 950.1 L1446.9 952.4 L1447.4 950.1 L1447.9 950.3 L1448.4 949.2 L1448.9 946.6 L1449.4 948.8 L1449.9 950.7 L1450.4 950.4 L1450.9 949.7 L1451.4 949.8 L1451.9 949.8 L1452.4 951.5 L1452.9 950.2 L1453.4 950.3 L1453.9 947.3 L1454.4 950.7 L1454.9 956.2 L1455.4 950.8 L1455.9 955.7 L1456.4 949.7 L1456.9 956.0 L1457.4 956.8 L1457.9 952.9 L1458.4 948.7 L1458.9 949.7 L1459.4 949.1 L1459.9 954.4 L1460.4 954.7 L1460.9 950.4 L1461.4 954.3 L1461.9 952.4 L1462.4 954.6 L1462.9 956.1 L1463.4 952.1 L1463.9 953.7 L1464.4 951.6 L1464.9 951.7 L1465.4 951.2 L1465.9 955.4 L1466.4 955.3 L1466.9 958.6 L1467.4 956.1 L1467.9 957.0 L1468.4 952.9 L1468.9 955.0 L1469.4 950.7 L1469.9 954.1 L1470.4 951.1 L1470.9 953.7 L1471.4 954.5 L1471.9 955.8 L1472.4 955.2 L1472.9 952.6 L1473.4 952.4 L1473.9 951.6 L1474.4 952.3 L1474.9 956.2 L1475.4 950.5 L1475.9 953.6 L1476.4 954.2 L1476.9 952.7 L1477.4 956.3 L1477.9 955.3 L1478.4 953.5 L1478.9 955.3 L1479.4 953.2 L1479.9 952.8 L1480.4 951.5 L1480.9 955.4 L1481.4 955.7 L1481.9 950.9 L1482.4 953.8 L1482.9 954.5 L1483.4 956.6 L1483.9 953.5 L1484.4 951.3 L1484.9 954.4 L1485.4 954.6 L1485.9 953.9 L1486.4 952.9 L1486.9 952.9 L1487.4 951.2 L1487.9 952.2 L1488.4 956.8 L1488.9 954.3 L1489.4 952.5 L1489.9 951.6 L1490.4 952.4 L1490.9 950.7 L1491.4 948.0 L1491.9 949.4 L1492.4 951.3 L1492.9 956.0 L1493.4 953.0 L1493.9 951.6 L1494.4 952.2 L1494.9 954.9 L1495.4 949.3 L1495.9 954.3 L1496.4 953.0 L1496.9 950.2 L1497.4 949.2 L1497.9 948.5 L1498.4 952.8 L1498.9 952.4 L1499.4 950.9 L1499.9 951.8 L1500.4 955.5 L1500.9 953.5 L1501.4 951.7 L1501.9 947.4 L1502.4 951.7 L1502.9 952.6 L1503.4 955.4 L1503.9 948.7 L1504.4 948.5 L1504.9 953.7 L1505.4 954.8 L1505.9 950.3 L1506.4 952.2 L1506.9 955.1 L1507.4 953.8 L1507.9 950.3 L1508.4 949.9 L1508.9 950.3 L1509.4 951.5 L1509.9 952.6 L1510.4 948.8 L1510.9 953.2 L1511.4 949.2 L1511.9 950.8 L1512.4 947.3 L1512.9 950.2 L1513.4 948.8 L1513.9 948.1 L1514.4 950.2 L1514.9 950.9 L1515.4 944.1 L1515.9 943.2 L1516.4 942.7 L1516.9 942.4 L1517.4 941.6 L1517.9 940.7 L1518.4 941.3 L1518.9 940.0 L1519.4 939.6 L1519.9 938.8 L1520.4 938.4 L1520.9 935.5 L1521.4 933.4 L1521.9 930.4 L1522.4 928.3 L1522.9 926.3 L1523.4 927.3 L1523.9 929.8 L1524.4 928.6 L1524.9 928.1 L1525.4 926.1 L1525.9 924.8 L1526.4 920.9 L1526.9 923.5 L1527.4 922.4 L1527.9 918.7 L1528.4 921.3 L1528.9 917.5 L1529.4 920.2 L1529.9 916.0 L1530.4 916.1 L1530.9 915.0 L1531.4 913.4 L1531.9 914.7 L1532.4 916.7 L1532.9 915.6 L1533.4 916.4 L1533.9 916.1 L1534.4 914.5 L1534.9 915.4 L1535.4 919.0 L1535.9 916.4 L1536.4 914.1 L1536.9 916.6 L1537.4 917.3 L1537.9 915.7 L1538.4 919.8 L1538.9 919.4 L1539.4 918.1 L1539.9 913.5 L1540.4 917.5 L1540.9 918.9 L1541.4 920.7 L1541.9 919.5 L1542.4 924.2 L1542.9 921.8 L1543.4 922.8 L1543.9 920.4 L1544.4 924.2 L1544.9 927.9 L1545.4 923.4 L1545.9 921.6 L1546.4 921.7 L1546.9 925.9 L1547.4 925.0 L1547.9 925.3 L1548.4 926.1 L1548.9 928.2 L1549.4 927.3 L1549.9 931.2 L1550.4 928.6 L1550.9 925.9 L1551.4 927.0 L1551.9 925.4 L1552.4 930.9 L1552.9 931.4 L1553.4 932.1 L1553.9 929.6 L1554.4 929.6 L1554.9 933.2 L1555.4 929.0 L1555.9 931.9 L1556.4 933.1 L1556.9 936.2 L1557.4 931.5 L1557.9 935.2 L1558.4 931.1 L1558.9 933.2 L1559.4 935.8 L1559.9 936.4 L1560.4 937.5 L1560.9 939.1 L1561.4 933.4 L1561.9 934.2 L1562.4 936.2 L1562.9 932.7 L1563.4 934.9 L1563.9 936.0 L1564.4 937.6 L1564.9 934.9 L1565.4 937.8 L1565.9 937.4 L1566.4 936.1 L1566.9 940.7 L1567.4 938.8 L1567.9 941.2 L1568.4 935.9 L1568.9 942.4 L1569.4 935.3 L1569.9 939.6 L1570.4 940.6 L1570.9 942.3 L1571.4 939.8 L1571.9 940.5 L1572.4 940.0 L1572.9 940.8 L1573.4 935.9 L1573.9 942.7 L1574.4 938.9 L1574.9 938.1 L1575.4 938.9 L1575.9 942.1 L1576.4 939.6 L1576.9 939.2 L1577.4 941.4 L1577.9 941.3 L1578.4 944.7 L1578.9 939.8 L1579.4 941.6 L1579.9 943.7 L1580.4 943.0 L1580.9 946.5 L1581.4 943.4 L1581.9 944.9 L1582.4 945.2 L1582.9 941.4 L1583.4 945.6 L1583.9 946.4 L1584.4 944.6 L1584.9 949.6 L1585.4 948.3 L1585.9 947.8 L1586.4 945.3 L1586.9 948.3 L1587.4 947.5 L1587.9 950.1 L1588.4 947.8 L1588.9 945.8 L1589.4 948.0 L1589.9 947.6 L1590.4 948.9 L1590.9 945.2 L1591.4 945.9 L1591.9 944.3 L1592.4 950.7 L1592.9 950.2 L1593.4 953.0 L1593.9 949.1 L1594.4 945.6 L1594.9 950.4 L1595.4 953.3 L1595.9 950.3 L1596.4 954.1 L1596.9 948.7 L1597.4 949.6 L1597.9 950.8 L1598.4 950.5 L1598.9 951.5 L1599.4 951.2 L1599.9 955.8 L1600.4 952.0 L1600.9 946.8 L1601.4 953.5 L1601.9 950.0 L1602.4 949.3 L1602.9 953.0 L1603.4 955.8 L1603.9 953.2 L1604.4 951.7 L1604.9 952.4 L1605.4 951.5 L1605.9 952.6 L1606.4 951.6 L1606.9 954.2 L1607.4 951.0 L1607.9 949.0 L1608.4 953.9 L1608.9 949.6 L1609.4 952.0 L1609.9 953.8 L1610.4 953.1 L1610.9 952.7 L1611.4 952.1 L1611.9 951.2 L1612.4 951.9 L1612.9 948.9 L1613.4 953.2 L1613.9 951.7 L1614.4 949.4 L1614.9 952.7 L1615.4 947.6 L1615.9 953.0 L1616.4 948.3 L1616.9 952.5 L1617.4 949.6 L1617.9 949.9 L1618.4 944.4 L1618.9 947.2 L1619.4 947.5 L1619.9 945.1 L1620.4 946.8 L1620.9 948.5 L1621.4 945.8 L1621.9 943.0 L1622.4 941.0 L1622.9 937.1 L1623.4 942.0 L1623.9 938.7 L1624.4 938.7 L1624.9 935.8 L1625.4 932.1 L1625.9 923.8 L1626.4 923.8 L1626.9 922.1 L1627.4 919.0 L1627.9 916.2 L1628.4 915.9 L1628.9 911.8 L1629.4 909.5 L1629.9 903.8 L1630.4 901.0 L1630.9 902.3 L1631.4 902.5 L1631.9 905.8 L1632.4 908.5 L1632.9 909.5 L1633.4 914.4 L1633.9 914.7 L1634.4 918.8 L1634.9 919.8 L1635.4 920.5 L1635.9 925.0 L1636.4 921.1 L1636.9 928.0 L1637.4 926.9 L1637.9 929.6 L1638.4 926.5 L1638.9 931.1 L1639.4 931.2 L1639.9 934.5 L1640.4 938.9 L1640.9 932.9 L1641.4 939.3 L1641.9 935.3 L1642.4 936.9 L1642.9 940.1 L1643.4 939.6 L1643.9 939.6 L1644.4 944.3 L1644.9 939.0 L1645.4 942.8 L1645.9 941.7 L1646.4 940.3 L1646.9 947.7 L1647.4 947.7 L1647.9 945.5 L1648.4 949.3 L1648.9 942.8 L1649.4 947.6 L1649.9 944.1 L1650.4 944.2 L1650.9 946.8 L1651.4 943.7 L1651.9 947.4 L1652.4 946.7 L1652.9 948.3 L1653.4 946.4 L1653.9 948.9 L1654.4 945.3 L1654.9 948.8 L1655.4 948.5 L1655.9 948.4 L1656.4 950.7 L1656.9 949.0 L1657.4 951.8 L1657.9 944.6 L1658.4 945.0 L1658.9 949.4 L1659.4 947.0 L1659.9 947.0 L1660.4 943.6 L1660.9 950.6 L1661.4 950.3 L1661.9 948.9 L1662.4 952.0 L1662.9 948.6 L1663.4 949.9 L1663.9 949.7 L1664.4 949.7 L1664.9 950.2 L1665.4 950.9 L1665.9 950.4 L1666.4 947.9 L1666.9 947.6 L1667.4 951.4 L1667.9 948.5 L1668.4 952.3 L1668.9 947.7 L1669.4 947.8 L1669.9 948.9 L1670.4 951.0 L1670.9 950.2 L1671.4 950.8 L1671.9 951.3 L1672.4 950.5 L1672.9 953.2 L1673.4 952.3 L1673.9 946.6 L1674.4 949.3 L1674.9 952.1 L1675.4 947.7 L1675.9 945.8 L1676.4 954.7 L1676.9 950.8 L1677.4 953.1 L1677.9 949.6 L1678.4 952.2 L1678.9 949.6 L1679.4 952.1 L1679.9 952.6 L1680.4 946.0 L1680.9 949.3 L1681.4 944.8 L1681.9 950.6 L1682.4 952.1 L1682.9 948.1 L1683.4 945.6 L1683.9 948.8 L1684.4 951.9 L1684.9 949.2 L1685.4 947.2 L1685.9 951.8 L1686.4 948.9 L1686.9 948.5 L1687.4 950.1 L1687.9 946.2 L1688.4 948.9 L1688.9 952.8 L1689.4 953.7 L1689.9 953.5 L1690.4 946.2 L1690.9 952.9 L1691.4 950.2 L1691.9 953.7 L1692.4 950.5 L1692.9 953.2 L1693.4 948.9 L1693.9 948.5 L1694.4 950.6 L1694.9 950.7 L1695.4 952.2 L1695.9 947.0 L1696.4 950.7 L1696.9 949.1 L1697.4 948.1 L1697.9 951.1 L1698.4 950.2 L1698.9 947.0 L1699.4 952.9 L1699.9 951.4 L1700.4 951.4 L1700.9 948.4 L1701.4 952.3 L1701.9 951.6 L1702.4 948.8 L1702.9 948.9 L1703.4 948.4 L1703.9 953.3 L1704.4 952.3 L1704.9 947.2 L1705.4 947.2 L1705.9 947.5 L1706.4 952.3 L1706.9 951.9 L1707.4 951.4 L1707.9 953.5 L1708.4 953.5 L1708.9 950.0 L1709.4 951.2 L1709.9 955.8 L1710.4 950.0 L1710.9 951.6 L1711.4 949.9 L1711.9 955.5 L1712.4 951.1 L1712.9 953.0 L1713.4 951.4 L1713.9 953.6 L1714.4 951.4 L1714.9 951.3 L1715.4 953.2 L1715.9 952.4 L1716.4 951.4 L1716.9 954.1 L1717.4 951.1 L1717.9 952.7 L1718.4 955.4 L1718.9 953.4 L1719.4 948.3 L1719.9 949.3 L1720.4 951.2 L1720.9 949.9 L1721.4 948.7 L1721.9 952.0 L1722.4 954.9 L1722.9 952.6 L1723.4 950.3 L1723.9 952.3 L1724.4 955.6 L1724.9 950.3 L1725.4 950.4 L1725.9 954.4 L1726.4 951.4 L1726.9 950.1 L1727.4 953.6 L1727.9 950.1 L1728.4 953.8 L1728.9 948.8 L1729.4 950.9 L1729.9 951.8 L1730.4 954.2 L1730.9 952.3 L1731.4 956.2 L1731.9 949.3 L1732.4 949.5 L1732.9 952.2 L1733.4 954.5 L1733.9 954.4 L1734.4 956.1 L1734.9 952.9 L1735.4 955.7 L1735.9 951.6 L1736.4 947.2 L1736.9 955.5 L1737.4 952.6 L1737.9 953.1 L1738.4 947.2 L1738.9 951.1 L1739.4 948.4 L1739.9 947.4 L1740.4 949.1 L1740.9 951.4 L1741.4 949.3 L1741.9 954.2 L1742.4 950.3 L1742.9 951.0 L1743.4 948.4 L1743.9 952.5 L1744.4 952.7 L1744.9 950.1 L1745.4 952.8 L1745.9 954.1 L1746.4 952.8 L1746.9 949.7 L1747.4 952.0 L1747.9 953.8 L1748.4 949.3 L1748.9 947.5 L1749.4 950.7 L1749.9 950.3 L1750.4 949.3 L1750.9 952.2 L1751.4 953.6 L1751.9 952.1 L1752.4 948.9 L1752.9 955.8 L1753.4 950.7 L1753.9 951.8 L1754.4 951.9 L1754.9 951.8 L1755.4 950.8 L1755.9 950.3 L1756.4 954.1 L1756.9 951.3 L1757.4 952.5 L1757.9 952.7 L1758.4 948.6 L1758.9 952.7 L1759.4 955.0 L1759.9 950.5 L1760.4 953.1 L1760.9 955.5 L1761.4 953.1 L1761.9 955.5 L1762.4 951.0 L1762.9 951.7 L1763.4 951.7 L1763.9 950.0 L1764.4 954.7 L1764.9 952.9 L1765.4 951.0 L1765.9 952.7 L1766.4 949.6 L1766.9 955.9 L1767.4 951.1 L1767.9 950.9 L1768.4 948.8 L1768.9 951.7 L1769.4 949.9 L1769.9 951.6 L1770.4 950.7 L1770.9 953.7 L1771.4 951.8 L1771.9 952.5 L1772.4 954.4 L1772.9 950.0 L1773.4 950.2 L1773.9 948.9 L1774.4 954.4 L1774.9 955.3 L1775.4 953.2 L1775.9 950.0 L1776.4 954.0 L1776.9 953.2 L1777.4 952.8 L1777.9 952.9 L1778.4 951.0 L1778.9 954.9 L1779.4 953.3 L1779.9 951.2 L1780.4 948.7 L1780.9 951.8 L1781.4 953.3 L1781.9 954.7 L1782.4 953.3 L1782.9 950.3 L1783.4 952.5 L1783.9 953.6 L1784.4 951.3 L1784.9 949.7 L1785.4 953.5 L1785.9 950.9 L1786.4 951.5 L1786.9 956.3 L1787.4 950.1 L1787.9 948.9 L1788.4 951.9 L1788.9 955.5 L1789.4 951.1 L1789.9 949.7 L1790.4 950.7 L1790.9 952.5 L1791.4 948.6 L1791.9 952.1 L1792.4 952.4 L1792.9 951.7 L1793.4 951.5 L1793.9 949.6 L1794.4 950.6 L1794.9 952.1 L1795.4 953.9 L1795.9 953.7 L1796.4 953.6 L1796.9 955.0 L1797.4 953.5 L1797.9 949.9 L1798.4 950.5 L1798.9 953.6 L1799.4 953.4 L1799.9 949.0 L1800.4 953.0 L1800.9 951.9 L1801.4 954.0 L1801.9 955.2 L1802.4 951.9 L1802.9 952.4 L1803.4 950.6 L1803.9 950.4 L1804.4 951.1 L1804.9 954.0 L1805.4 955.2 L1805.9 953.2 L1806.4 951.4 L1806.9 952.9 L1807.4 952.1 L1807.9 953.4 L1808.4 954.3 L1808.9 952.5 L1809.4 952.6 L1809.9 951.8 L1810.4 953.8 L1810.9 954.9 L1811.4 951.3 L1811.9 951.3 L1812.4 956.7 L1812.9 950.9 L1813.4 956.6 L1813.9 953.4 L1814.4 954.5 L1814.9 953.1 L1815.4 954.4 L1815.9 952.0 L1816.4 951.8 L1816.9 952.0 L1817.4 955.9 L1817.9 953.8 L1818.4 952.5 L1818.9 953.7 L1819.4 954.3 L1819.9 955.2 L1820.4 951.4 L1820.9 948.6 L1821.4 955.2 L1821.9 952.7 L1822.4 950.5 L1822.9 953.2 L1823.4 952.4 L1823.9 951.1 L1824.4 949.6 L1824.9 952.3 L1825.4 954.9 L1825.9 948.9 L1826.4 952.3" fill="none" stroke="#000" stroke-width="1.3" stroke-linejoin="round"/><g font-family="Liberation Sans" font-size="12" fill="#0a0a0a" text-anchor="middle"><text x="467" y="860">4.18</text><text x="498" y="863">5.40</text><text x="513" y="930">5.81</text><text x="552" y="920">8.10</text><text x="574" y="837">9.12</text><text x="595" y="944">9.41</text><text x="615" y="905">11.07</text><text x="640" y="946">11.39</text><text x="683" y="941">14.20</text><text x="746" y="947">17.06</text><text x="790" y="948">19.06</text><text x="817" y="923">20.32</text><text x="841" y="940">20.83</text><text x="889" y="933">23.67</text><text x="921" y="892">25.08</text><text x="976" y="940">27.65</text><text x="1020" y="678">29.68</text><text x="1052" y="913">32.54</text><text x="1091" y="910">32.95</text><text x="1131" y="915">33.67</text><text x="1151" y="932">34.89</text><text x="1224" y="934">39.04</text><text x="1263" y="934">42.34</text><text x="1301" y="932">42.59</text><text x="1368" y="933">46.64</text><text x="1409" y="929">47.56</text><text x="1447" y="931">47.95</text><text x="1493" y="939">51.67</text><text x="1492" y="911">52.90</text><text x="1532" y="903">53.19</text><text x="1570" y="908">53.59</text><text x="1578" y="925">54.65</text><text x="1629" y="898">57.64</text><text x="1659" y="931">58.20</text><text x="1696" y="940">59.41</text><text x="1736" y="943">61.47</text><text x="1773" y="942">64.33</text></g><g font-family="Liberation Sans" font-size="12" fill="#111"><text x="1827" y="678">NL:</text><text x="1827" y="693">1.33E5</text><text x="1827" y="711">TIC</text><text x="1853" y="711">MS</text><text x="1827" y="726">LabCoatz6</text><text x="1827" y="741">0min100c</text></g><g font-family="Liberation Sans" font-size="20.5" fill="#161616" stroke="#161616" stroke-width="0.5" text-anchor="middle" letter-spacing="1.08"><text x="699" y="715">Mine has more furfurals, less a-terpineol,</text><text x="699" y="744">and angelica lactone from acid-catalyzed heat-driven</text><text x="699" y="773">rearrangement of the levulinic acid...minor differences :)</text></g><text x="1088" y="880" font-family="Liberation Sans" font-size="33" fill="#1a20c4" stroke="#1a20c4" stroke-width="0.9" letter-spacing="0.2">this blobby area was just noise</text></svg>
<div style="position:absolute;left:0px;top:1030px;width:325px;height:1px;background:#8e8a78"></div>
<div style="position:absolute;left:0px;top:1030px;width:1919px;height:20px;background:#ece9d8;border-top:1px solid #f8f7f0"></div>
<div style="position:absolute;left:0px;top:1030px;width:325px;height:1px;background:#8e8a78"></div>
<div style="position:absolute;left:1864px;top:1034px;width:25px;height:15px;border-top:1px solid #aca899;border-left:1px solid #aca899"></div>
<div style="position:absolute;left:1891px;top:1034px;width:28px;height:15px;border-top:1px solid #aca899;border-left:1px solid #aca899"></div>
<div class="t" style="left:1893px;top:1037px;font-size:11px">NUM</div>
<div style="position:absolute;left:0px;top:1050px;width:1919px;height:29px;background:linear-gradient(#3168d5 0px,#4993e6 2px,#2b71e0 4px,#245edb 8px,#2257d5 20px,#1f4fc4 28px)"></div>
<div style="position:absolute;left:0px;top:1050px;width:96px;height:29px;border-radius:0 11px 11px 0;background:linear-gradient(#3a6a3a 0px,#3a6a3a 1px,#86c886 2px,#6cbc6c 4px,#48ae48 7px,#3aa43a 14px,#34a034 22px,#2e8a2e 29px);box-shadow:inset 2px 0 2px #1f6a1f, inset -3px 0 3px #2a7a2a"></div>
<svg style="position:absolute;left:9px;top:1055px" width="22" height="20"><g transform="rotate(10 11 10)"><path d="M4 2q3-1.5 6 0.5v7q-3-2-6-0.5z" fill="#f0702a"/><path d="M11 3q3 1.5 7 0v7q-4 1.5-7 0z" fill="#7cd02a"/><path d="M3 10.5q3-1.5 6.5 0.5v7q-3.5-2-6.5-0.5z" fill="#5a90f0"/><path d="M10.5 11.5q3.5 1.5 7 0v7q-3.5 1.5-7 0z" fill="#f4d020"/></g></svg>
<div class="t" style="left:34px;top:1055px;font-size:18px;font-weight:bold;font-style:italic;color:#f4fff0;text-shadow:1px 1px 1px #2a4a2a">start</div>
<div style="position:absolute;left:107px;top:1053px;width:157px;height:25px;border-radius:3px;background:linear-gradient(#4a90f8,#3c81f3 30%,#3a7cf0 80%,#2f6fe0);border:1px solid #2a5ed0"></div>
<svg style="position:absolute;left:116px;top:1057px" width="16" height="17"><path d="M8 1l1 4l4-2l-3 4l4 3l-5-1l-1 6l-1-6l-5 2l3-4l-4-4l5 1z" fill="#f4d0d0" stroke="#c02020" stroke-width="0.8"/></svg>
<div class="t" style="left:134px;top:1060px;font-size:11px;color:#fff">Roadmap - Home Page</div>
<div style="position:absolute;left:268px;top:1053px;width:157px;height:25px;border-radius:3px;background:linear-gradient(#1e4cbc,#1d4ab8 50%,#1e4fc0);border:1px solid #18409f;box-shadow:inset 1px 1px 2px #12307a"></div>
<svg style="position:absolute;left:277px;top:1058px" width="16" height="14"><rect x="1" y="2" width="14" height="11" fill="#e8e070" stroke="#6b5d10"/><path d="M3 12V8M5 12V6M7 12V9M9 12V7M11 12V10" stroke="#208020"/></svg>
<div class="t" style="left:296px;top:1060px;font-size:11px;color:#fff">Qual Browser - coke6...</div>
<div style="position:absolute;left:1828px;top:1050px;width:91px;height:29px;background:linear-gradient(#18a8f0 0px,#0f96ec 4px,#0c8ae6 20px,#0a7ed8 29px);border-left:1px solid #0a5cc0"></div>
<div class="t" style="left:1865px;top:1060px;font-size:11px;color:#fff">2:20 PM</div>
<svg style="position:absolute;left:1738px;top:1055px" width="90" height="20"><path d="M2 16L9 8" stroke="#d8e0f0" stroke-width="2.2"/><path d="M8 4.5q2-2 4 0t0 4l-2 1l-3-3z" fill="#c8d0e0" stroke="#304080" stroke-width="0.8"/><rect x="21.5" y="2.5" width="13" height="11" fill="#e8eef8" stroke="#0a1a6a" stroke-width="1.2"/><rect x="21.5" y="2.5" width="13" height="2.5" fill="#0a1a6a"/><path d="M24 14l7-7" stroke="#222" stroke-width="1.6"/><circle cx="31" cy="8" r="2.2" fill="none" stroke="#222" stroke-width="1.2"/><rect x="43.5" y="3.5" width="11" height="12" fill="#fffbe0" stroke="#202020" stroke-width="1.2"/><text x="46" y="14" font-size="11" font-weight="bold" font-family="Liberation Sans" fill="#111">?</text><path d="M67.5 6.5h5v2.5h-5zM69.5 4.5h5v2.5" stroke="#e8f0ff" fill="none"/><path d="M68 12.5l2.5 2l2.5-2z" fill="#e8f0ff"/></svg>
<svg style="position:absolute;left:1818px;top:1055px" width="38" height="20"><circle cx="9" cy="10" r="7.5" fill="#4aa0f0" stroke="#90c8ff" stroke-width="1"/><path d="M10.5 6l-3.5 4l3.5 4" stroke="#fff" stroke-width="2" fill="none"/><rect x="24" y="3" width="8" height="7" fill="#b0d8ff" stroke="#4a7ab0" stroke-width="0.8"/><rect x="20" y="8" width="8" height="7" fill="#d0e8ff" stroke="#4a7ab0" stroke-width="0.8"/><path d="M22 17h6" stroke="#e0e0f0" stroke-width="1.5"/></svg>
</body></html>
